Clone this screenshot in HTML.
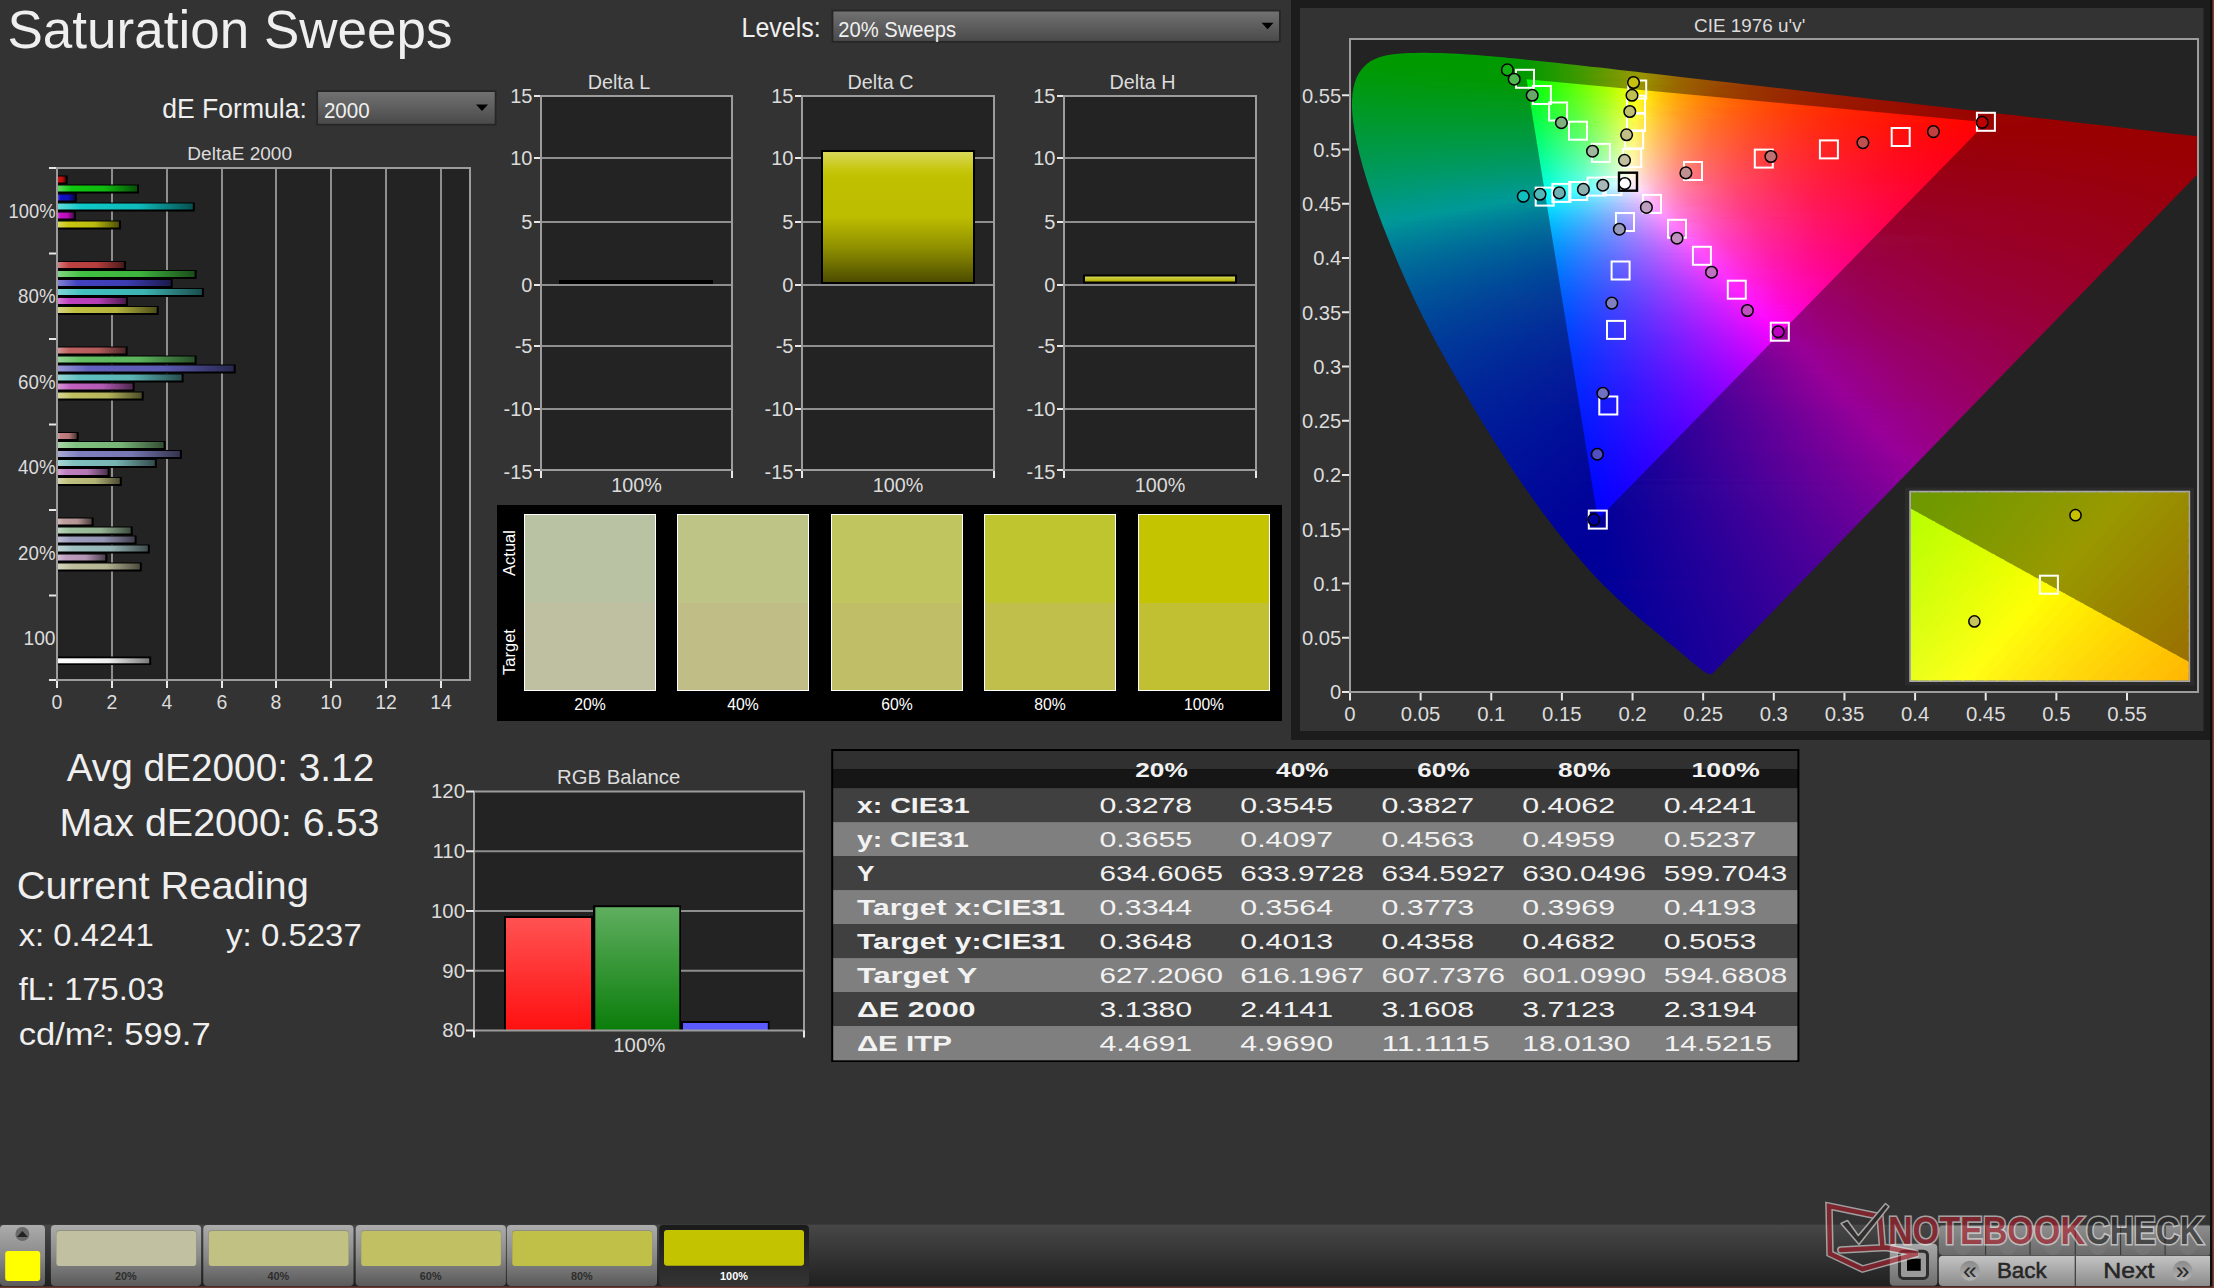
<!DOCTYPE html>
<html><head><meta charset="utf-8"><title>Saturation Sweeps</title>
<style>html,body{margin:0;padding:0;width:2214px;height:1288px;overflow:hidden;background:#333;}svg text{font-family:"Liberation Sans", sans-serif;}</style>
</head><body><svg width="2214" height="1288" viewBox="0 0 2214 1288" style="display:block;font-family:&quot;Liberation Sans&quot;, sans-serif"><defs><linearGradient id="g1" x1="0" y1="0" x2="0" y2="1"><stop offset="0" stop-color="#717171"/><stop offset="1" stop-color="#4a4a4a"/></linearGradient><linearGradient id="g2" x1="0" y1="0" x2="0" y2="1"><stop offset="0" stop-color="#717171"/><stop offset="1" stop-color="#4a4a4a"/></linearGradient><linearGradient id="g3" x1="0" y1="0" x2="1" y2="0"><stop offset="0" stop-color="#db6464"/><stop offset="0.18" stop-color="#c81010"/><stop offset="0.6" stop-color="#ba0f0f"/><stop offset="1" stop-color="#500606"/></linearGradient><linearGradient id="g4" x1="0" y1="0" x2="1" y2="0"><stop offset="0" stop-color="#64db64"/><stop offset="0.18" stop-color="#10c810"/><stop offset="0.6" stop-color="#0fba0f"/><stop offset="1" stop-color="#065006"/></linearGradient><linearGradient id="g5" x1="0" y1="0" x2="1" y2="0"><stop offset="0" stop-color="#6464db"/><stop offset="0.18" stop-color="#1010c8"/><stop offset="0.6" stop-color="#0f0fba"/><stop offset="1" stop-color="#060650"/></linearGradient><linearGradient id="g6" x1="0" y1="0" x2="1" y2="0"><stop offset="0" stop-color="#64dbdb"/><stop offset="0.18" stop-color="#10c8c8"/><stop offset="0.6" stop-color="#0fbaba"/><stop offset="1" stop-color="#065050"/></linearGradient><linearGradient id="g7" x1="0" y1="0" x2="1" y2="0"><stop offset="0" stop-color="#db64db"/><stop offset="0.18" stop-color="#c810c8"/><stop offset="0.6" stop-color="#ba0fba"/><stop offset="1" stop-color="#500650"/></linearGradient><linearGradient id="g8" x1="0" y1="0" x2="1" y2="0"><stop offset="0" stop-color="#dbdb64"/><stop offset="0.18" stop-color="#c8c810"/><stop offset="0.6" stop-color="#baba0f"/><stop offset="1" stop-color="#505006"/></linearGradient><linearGradient id="g9" x1="0" y1="0" x2="1" y2="0"><stop offset="0" stop-color="#d68484"/><stop offset="0.18" stop-color="#c04242"/><stop offset="0.6" stop-color="#b33d3d"/><stop offset="1" stop-color="#4d1a1a"/></linearGradient><linearGradient id="g10" x1="0" y1="0" x2="1" y2="0"><stop offset="0" stop-color="#84d684"/><stop offset="0.18" stop-color="#42c042"/><stop offset="0.6" stop-color="#3db33d"/><stop offset="1" stop-color="#1a4d1a"/></linearGradient><linearGradient id="g11" x1="0" y1="0" x2="1" y2="0"><stop offset="0" stop-color="#8484d6"/><stop offset="0.18" stop-color="#4242c0"/><stop offset="0.6" stop-color="#3d3db3"/><stop offset="1" stop-color="#1a1a4d"/></linearGradient><linearGradient id="g12" x1="0" y1="0" x2="1" y2="0"><stop offset="0" stop-color="#84d6d6"/><stop offset="0.18" stop-color="#42c0c0"/><stop offset="0.6" stop-color="#3db3b3"/><stop offset="1" stop-color="#1a4d4d"/></linearGradient><linearGradient id="g13" x1="0" y1="0" x2="1" y2="0"><stop offset="0" stop-color="#d684d6"/><stop offset="0.18" stop-color="#c042c0"/><stop offset="0.6" stop-color="#b33db3"/><stop offset="1" stop-color="#4d1a4d"/></linearGradient><linearGradient id="g14" x1="0" y1="0" x2="1" y2="0"><stop offset="0" stop-color="#d6d684"/><stop offset="0.18" stop-color="#c0c042"/><stop offset="0.6" stop-color="#b3b33d"/><stop offset="1" stop-color="#4d4d1a"/></linearGradient><linearGradient id="g15" x1="0" y1="0" x2="1" y2="0"><stop offset="0" stop-color="#d69999"/><stop offset="0.18" stop-color="#c06262"/><stop offset="0.6" stop-color="#b35b5b"/><stop offset="1" stop-color="#4d2727"/></linearGradient><linearGradient id="g16" x1="0" y1="0" x2="1" y2="0"><stop offset="0" stop-color="#99d699"/><stop offset="0.18" stop-color="#62c062"/><stop offset="0.6" stop-color="#5bb35b"/><stop offset="1" stop-color="#274d27"/></linearGradient><linearGradient id="g17" x1="0" y1="0" x2="1" y2="0"><stop offset="0" stop-color="#9999d6"/><stop offset="0.18" stop-color="#6262c0"/><stop offset="0.6" stop-color="#5b5bb3"/><stop offset="1" stop-color="#27274d"/></linearGradient><linearGradient id="g18" x1="0" y1="0" x2="1" y2="0"><stop offset="0" stop-color="#99d6d6"/><stop offset="0.18" stop-color="#62c0c0"/><stop offset="0.6" stop-color="#5bb3b3"/><stop offset="1" stop-color="#274d4d"/></linearGradient><linearGradient id="g19" x1="0" y1="0" x2="1" y2="0"><stop offset="0" stop-color="#d699d6"/><stop offset="0.18" stop-color="#c062c0"/><stop offset="0.6" stop-color="#b35bb3"/><stop offset="1" stop-color="#4d274d"/></linearGradient><linearGradient id="g20" x1="0" y1="0" x2="1" y2="0"><stop offset="0" stop-color="#d6d699"/><stop offset="0.18" stop-color="#c0c062"/><stop offset="0.6" stop-color="#b3b35b"/><stop offset="1" stop-color="#4d4d27"/></linearGradient><linearGradient id="g21" x1="0" y1="0" x2="1" y2="0"><stop offset="0" stop-color="#d6acac"/><stop offset="0.18" stop-color="#c08080"/><stop offset="0.6" stop-color="#b37777"/><stop offset="1" stop-color="#4d3333"/></linearGradient><linearGradient id="g22" x1="0" y1="0" x2="1" y2="0"><stop offset="0" stop-color="#acd6ac"/><stop offset="0.18" stop-color="#80c080"/><stop offset="0.6" stop-color="#77b377"/><stop offset="1" stop-color="#334d33"/></linearGradient><linearGradient id="g23" x1="0" y1="0" x2="1" y2="0"><stop offset="0" stop-color="#acacd6"/><stop offset="0.18" stop-color="#8080c0"/><stop offset="0.6" stop-color="#7777b3"/><stop offset="1" stop-color="#33334d"/></linearGradient><linearGradient id="g24" x1="0" y1="0" x2="1" y2="0"><stop offset="0" stop-color="#acd6d6"/><stop offset="0.18" stop-color="#80c0c0"/><stop offset="0.6" stop-color="#77b3b3"/><stop offset="1" stop-color="#334d4d"/></linearGradient><linearGradient id="g25" x1="0" y1="0" x2="1" y2="0"><stop offset="0" stop-color="#d6acd6"/><stop offset="0.18" stop-color="#c080c0"/><stop offset="0.6" stop-color="#b377b3"/><stop offset="1" stop-color="#4d334d"/></linearGradient><linearGradient id="g26" x1="0" y1="0" x2="1" y2="0"><stop offset="0" stop-color="#d6d6ac"/><stop offset="0.18" stop-color="#c0c080"/><stop offset="0.6" stop-color="#b3b377"/><stop offset="1" stop-color="#4d4d33"/></linearGradient><linearGradient id="g27" x1="0" y1="0" x2="1" y2="0"><stop offset="0" stop-color="#d6c0c0"/><stop offset="0.18" stop-color="#c09e9e"/><stop offset="0.6" stop-color="#b39393"/><stop offset="1" stop-color="#4d3f3f"/></linearGradient><linearGradient id="g28" x1="0" y1="0" x2="1" y2="0"><stop offset="0" stop-color="#c0d6c0"/><stop offset="0.18" stop-color="#9ec09e"/><stop offset="0.6" stop-color="#93b393"/><stop offset="1" stop-color="#3f4d3f"/></linearGradient><linearGradient id="g29" x1="0" y1="0" x2="1" y2="0"><stop offset="0" stop-color="#c0c0d6"/><stop offset="0.18" stop-color="#9e9ec0"/><stop offset="0.6" stop-color="#9393b3"/><stop offset="1" stop-color="#3f3f4d"/></linearGradient><linearGradient id="g30" x1="0" y1="0" x2="1" y2="0"><stop offset="0" stop-color="#c0d6d6"/><stop offset="0.18" stop-color="#9ec0c0"/><stop offset="0.6" stop-color="#93b3b3"/><stop offset="1" stop-color="#3f4d4d"/></linearGradient><linearGradient id="g31" x1="0" y1="0" x2="1" y2="0"><stop offset="0" stop-color="#d6c0d6"/><stop offset="0.18" stop-color="#c09ec0"/><stop offset="0.6" stop-color="#b393b3"/><stop offset="1" stop-color="#4d3f4d"/></linearGradient><linearGradient id="g32" x1="0" y1="0" x2="1" y2="0"><stop offset="0" stop-color="#d6d6c0"/><stop offset="0.18" stop-color="#c0c09e"/><stop offset="0.6" stop-color="#b3b393"/><stop offset="1" stop-color="#4d4d3f"/></linearGradient><linearGradient id="g33" x1="0" y1="0" x2="1" y2="0"><stop offset="0" stop-color="#ffffff"/><stop offset="0.55" stop-color="#f0f0f0"/><stop offset="1" stop-color="#7a7a7a"/></linearGradient><linearGradient id="g34" x1="0" y1="0" x2="0" y2="1"><stop offset="0" stop-color="#d8d85a"/><stop offset="0.14" stop-color="#c6c60c"/><stop offset="0.2" stop-color="#c0c000"/><stop offset="0.5" stop-color="#bdbd00"/><stop offset="0.76" stop-color="#8a8a00"/><stop offset="1" stop-color="#4c4c00"/></linearGradient><linearGradient id="g35" x1="0" y1="0" x2="0" y2="1"><stop offset="0" stop-color="#d4d450"/><stop offset="1" stop-color="#b0b000"/></linearGradient><clipPath id="locclip"><path d="M1712.79,673.24L1712.75,673.24L1712.69,673.22L1712.62,673.22L1712.55,673.25L1712.48,673.32L1712.41,673.42L1712.33,673.53L1712.24,673.6L1712.14,673.62L1712.02,673.6L1711.9,673.59L1711.77,673.6L1711.64,673.68L1711.51,673.78L1711.38,673.89L1711.23,673.96L1711.07,673.99L1710.9,673.98L1710.72,673.97L1710.52,673.96L1710.31,673.97L1710.08,673.97L1709.84,673.97L1709.58,673.97L1709.33,674L1709.07,674.04L1708.77,674.05L1708.41,673.98L1707.98,673.82L1707.51,673.6L1706.95,673.31L1706.29,672.93L1705.52,672.45L1704.64,671.88L1703.67,671.23L1702.63,670.49L1701.54,669.68L1700.38,668.8L1699.11,667.81L1697.69,666.68L1696.11,665.42L1694.38,664.03L1692.52,662.52L1690.55,660.89L1688.49,659.14L1686.31,657.27L1684.01,655.29L1681.55,653.2L1678.95,651.04L1676.22,648.77L1673.31,646.37L1670.16,643.77L1666.75,640.97L1663.11,637.99L1659.26,634.84L1655.23,631.51L1651.04,628.06L1646.69,624.47L1642.11,620.63L1637.26,616.46L1632.13,611.98L1626.76,607.23L1621.12,602.11L1615.19,596.51L1609.08,590.62L1602.76,584.41L1596.03,577.5L1588.69,569.49L1580.66,560.33L1572.05,550.2L1562.98,539.09L1553.54,527.01L1543.69,513.92L1533.4,499.83L1522.8,484.81L1512.03,468.92L1500.98,451.98L1489.62,434.02L1478.22,415.44L1466.99,396.61L1455.82,377.4L1444.62,357.69L1433.78,337.89L1423.65,318.42L1414.26,299.16L1405.44,279.96L1397.26,261.22L1389.78,243.35L1383.01,226.32L1376.92,209.96L1371.51,194.47L1366.8,180.06L1362.83,166.83L1359.6,154.64L1356.99,143.41L1354.91,133.03L1353.38,123.6L1352.44,115.13L1352.02,107.42L1352.03,100.29L1352.5,93.75L1353.44,87.88L1354.81,82.59L1356.56,77.78L1358.71,73.47L1361.28,69.69L1364.19,66.39L1367.35,63.5L1370.79,61.08L1374.54,59.13L1378.52,57.55L1382.66,56.21L1386.97,55.17L1391.48,54.45L1396.13,53.94L1400.87,53.52L1405.71,53.19L1410.67,53L1415.7,52.91L1420.72,52.85L1425.72,52.83L1430.73,52.88L1435.78,52.97L1440.89,53.1L1446.05,53.28L1451.25,53.51L1456.53,53.78L1461.92,54.09L1467.43,54.44L1473.03,54.83L1478.74,55.26L1484.59,55.73L1490.55,56.23L1496.62,56.77L1502.84,57.34L1509.21,57.95L1515.74,58.59L1522.41,59.26L1529.25,59.96L1536.28,60.69L1543.5,61.45L1550.9,62.24L1558.49,63.06L1566.29,63.91L1574.27,64.79L1582.45,65.71L1590.84,66.65L1599.46,67.62L1608.31,68.62L1617.39,69.64L1626.68,70.69L1636.21,71.77L1645.96,72.89L1655.93,74.03L1666.14,75.21L1676.57,76.41L1687.24,77.64L1698.15,78.89L1709.27,80.18L1720.61,81.48L1732.18,82.82L1743.97,84.18L1755.95,85.56L1768.1,86.96L1780.44,88.37L1792.97,89.81L1805.63,91.26L1818.35,92.72L1831.19,94.2L1844.17,95.71L1857.13,97.21L1869.96,98.69L1882.61,100.15L1895.16,101.59L1907.61,103.03L1919.99,104.45L1932.36,105.88L1944.71,107.3L1956.86,108.69L1968.68,110.05L1980.15,111.36L1991.35,112.64L2002.24,113.88L2012.8,115.08L2023.04,116.26L2032.97,117.41L2042.57,118.52L2051.78,119.59L2060.61,120.61L2069.08,121.59L2077.19,122.53L2084.97,123.43L2092.39,124.28L2099.47,125.08L2106.23,125.86L2112.74,126.6L2118.98,127.32L2124.93,128.01L2130.64,128.67L2136.17,129.31L2141.54,129.93L2146.72,130.53L2151.7,131.1L2156.48,131.66L2161.07,132.19L2165.47,132.7L2169.67,133.18L2173.65,133.64L2177.43,134.07L2181,134.47L2184.37,134.85L2187.54,135.2L2190.36,135.53L2192.88,135.82L2195.43,136.11L2198.32,136.45L2201.64,136.83L2205.22,137.25L2209.02,137.69L2212.99,138.14L2217.61,138.68L2222.74,139.27L2227.42,139.81L2230.67,140.19Z"/></clipPath><clipPath id="plotclip"><rect x="1350" y="39" width="848" height="653"/></clipPath><clipPath id="triclip"><path d="M1986.71,122.35L1526.59,79.24L1597.84,519.49Z"/></clipPath><linearGradient id="g36" x1="0" y1="0" x2="1" y2="0"><stop offset="0" stop-color="#009900"/><stop offset="1" stop-color="#009900"/></linearGradient><linearGradient id="g37" x1="0" y1="0" x2="1" y2="0"><stop offset="0" stop-color="#009900"/><stop offset="1" stop-color="#009900"/></linearGradient><linearGradient id="g38" x1="0" y1="0" x2="1" y2="0"><stop offset="0" stop-color="#009900"/><stop offset="1" stop-color="#009900"/></linearGradient><linearGradient id="g39" x1="0" y1="0" x2="1" y2="0"><stop offset="0" stop-color="#009900"/><stop offset="1" stop-color="#009900"/></linearGradient><linearGradient id="g40" x1="0" y1="0" x2="1" y2="0"><stop offset="0" stop-color="#009900"/><stop offset="0.89" stop-color="#009900"/><stop offset="1" stop-color="#149900"/></linearGradient><linearGradient id="g41" x1="0" y1="0" x2="1" y2="0"><stop offset="0" stop-color="#009900"/><stop offset="0.81" stop-color="#009900"/><stop offset="1" stop-color="#299900"/></linearGradient><linearGradient id="g42" x1="0" y1="0" x2="1" y2="0"><stop offset="0" stop-color="#009900"/><stop offset="0.74" stop-color="#009900"/><stop offset="1" stop-color="#3f9900"/></linearGradient><linearGradient id="g43" x1="0" y1="0" x2="1" y2="0"><stop offset="0" stop-color="#009902"/><stop offset="0.68" stop-color="#009900"/><stop offset="0.81" stop-color="#1d9900"/><stop offset="1" stop-color="#569900"/></linearGradient><linearGradient id="g44" x1="0" y1="0" x2="1" y2="0"><stop offset="0" stop-color="#009903"/><stop offset="0.64" stop-color="#009900"/><stop offset="0.81" stop-color="#2e9900"/><stop offset="1" stop-color="#709900"/></linearGradient><linearGradient id="g45" x1="0" y1="0" x2="1" y2="0"><stop offset="0" stop-color="#009905"/><stop offset="0.62" stop-color="#029900"/><stop offset="0.83" stop-color="#479900"/><stop offset="1" stop-color="#8c9900"/></linearGradient><linearGradient id="g46" x1="0" y1="0" x2="1" y2="0"><stop offset="0" stop-color="#009906"/><stop offset="0.57" stop-color="#009900"/><stop offset="0.77" stop-color="#419900"/><stop offset="0.96" stop-color="#959900"/><stop offset="1" stop-color="#998900"/></linearGradient><linearGradient id="g47" x1="0" y1="0" x2="1" y2="0"><stop offset="0" stop-color="#009908"/><stop offset="0.55" stop-color="#029900"/><stop offset="0.72" stop-color="#419900"/><stop offset="0.89" stop-color="#909900"/><stop offset="0.91" stop-color="#999700"/><stop offset="1" stop-color="#997200"/></linearGradient><linearGradient id="g48" x1="0" y1="0" x2="1" y2="0"><stop offset="0" stop-color="#009909"/><stop offset="0.51" stop-color="#009900"/><stop offset="0.66" stop-color="#359900"/><stop offset="0.85" stop-color="#929900"/><stop offset="0.87" stop-color="#999400"/><stop offset="1" stop-color="#996100"/></linearGradient><linearGradient id="g49" x1="0" y1="0" x2="1" y2="0"><stop offset="0" stop-color="#00990b"/><stop offset="0.49" stop-color="#009900"/><stop offset="0.64" stop-color="#3a9900"/><stop offset="0.81" stop-color="#929900"/><stop offset="0.83" stop-color="#999300"/><stop offset="0.91" stop-color="#996c00"/><stop offset="1" stop-color="#995200"/></linearGradient><linearGradient id="g50" x1="0" y1="0" x2="1" y2="0"><stop offset="0" stop-color="#00990c"/><stop offset="0.47" stop-color="#009901"/><stop offset="0.62" stop-color="#3e9900"/><stop offset="0.79" stop-color="#999500"/><stop offset="0.87" stop-color="#996c00"/><stop offset="1" stop-color="#994700"/></linearGradient><linearGradient id="g51" x1="0" y1="0" x2="1" y2="0"><stop offset="0" stop-color="#00990e"/><stop offset="0.45" stop-color="#009903"/><stop offset="0.49" stop-color="#0e9902"/><stop offset="0.6" stop-color="#409900"/><stop offset="0.74" stop-color="#989900"/><stop offset="0.85" stop-color="#996500"/><stop offset="1" stop-color="#993d00"/></linearGradient><linearGradient id="g52" x1="0" y1="0" x2="1" y2="0"><stop offset="0" stop-color="#009910"/><stop offset="0.45" stop-color="#049904"/><stop offset="0.57" stop-color="#429900"/><stop offset="0.7" stop-color="#919900"/><stop offset="0.72" stop-color="#999200"/><stop offset="0.77" stop-color="#997a00"/><stop offset="0.83" stop-color="#995f00"/><stop offset="1" stop-color="#993500"/></linearGradient><linearGradient id="g53" x1="0" y1="0" x2="1" y2="0"><stop offset="0" stop-color="#009911"/><stop offset="0.43" stop-color="#029906"/><stop offset="0.55" stop-color="#439902"/><stop offset="0.68" stop-color="#979900"/><stop offset="0.74" stop-color="#997400"/><stop offset="0.81" stop-color="#995a00"/><stop offset="0.89" stop-color="#994200"/><stop offset="1" stop-color="#992d00"/></linearGradient><linearGradient id="g54" x1="0" y1="0" x2="1" y2="0"><stop offset="0" stop-color="#009913"/><stop offset="0.4" stop-color="#009909"/><stop offset="0.53" stop-color="#439904"/><stop offset="0.66" stop-color="#999700"/><stop offset="0.72" stop-color="#997000"/><stop offset="0.79" stop-color="#995600"/><stop offset="0.87" stop-color="#993e00"/><stop offset="1" stop-color="#992700"/></linearGradient><linearGradient id="g55" x1="0" y1="0" x2="1" y2="0"><stop offset="0" stop-color="#009914"/><stop offset="0.38" stop-color="#00990b"/><stop offset="0.49" stop-color="#369907"/><stop offset="0.62" stop-color="#8e9901"/><stop offset="0.64" stop-color="#999300"/><stop offset="0.7" stop-color="#996c00"/><stop offset="0.79" stop-color="#994b00"/><stop offset="0.87" stop-color="#993600"/><stop offset="1" stop-color="#992200"/></linearGradient><linearGradient id="g56" x1="0" y1="0" x2="1" y2="0"><stop offset="0" stop-color="#009916"/><stop offset="0.38" stop-color="#03990d"/><stop offset="0.49" stop-color="#419909"/><stop offset="0.6" stop-color="#8f9904"/><stop offset="0.62" stop-color="#999102"/><stop offset="0.68" stop-color="#996a00"/><stop offset="0.77" stop-color="#994900"/><stop offset="0.87" stop-color="#993000"/><stop offset="1" stop-color="#991d00"/></linearGradient><linearGradient id="g57" x1="0" y1="0" x2="1" y2="0"><stop offset="0" stop-color="#009917"/><stop offset="0.36" stop-color="#00990f"/><stop offset="0.47" stop-color="#3e990b"/><stop offset="0.57" stop-color="#8f9906"/><stop offset="0.6" stop-color="#999105"/><stop offset="0.66" stop-color="#996801"/><stop offset="0.74" stop-color="#994700"/><stop offset="0.85" stop-color="#992e00"/><stop offset="1" stop-color="#991900"/></linearGradient><linearGradient id="g58" x1="0" y1="0" x2="1" y2="0"><stop offset="0" stop-color="#009919"/><stop offset="0.34" stop-color="#009911"/><stop offset="0.36" stop-color="#059911"/><stop offset="0.47" stop-color="#49990d"/><stop offset="0.55" stop-color="#8e9909"/><stop offset="0.57" stop-color="#999108"/><stop offset="0.64" stop-color="#996703"/><stop offset="0.72" stop-color="#994500"/><stop offset="0.85" stop-color="#992800"/><stop offset="1" stop-color="#991500"/></linearGradient><linearGradient id="g59" x1="0" y1="0" x2="1" y2="0"><stop offset="0" stop-color="#00991a"/><stop offset="0.34" stop-color="#009913"/><stop offset="0.45" stop-color="#45990f"/><stop offset="0.53" stop-color="#8b990c"/><stop offset="0.55" stop-color="#99930a"/><stop offset="0.62" stop-color="#996705"/><stop offset="0.72" stop-color="#993e00"/><stop offset="0.85" stop-color="#992300"/><stop offset="1" stop-color="#991100"/></linearGradient><linearGradient id="g60" x1="0" y1="0" x2="1" y2="0"><stop offset="0" stop-color="#00991c"/><stop offset="0.32" stop-color="#009915"/><stop offset="0.34" stop-color="#059915"/><stop offset="0.43" stop-color="#3f9912"/><stop offset="0.53" stop-color="#99960d"/><stop offset="0.6" stop-color="#996707"/><stop offset="0.7" stop-color="#993d01"/><stop offset="0.83" stop-color="#992200"/><stop offset="1" stop-color="#990e00"/></linearGradient><linearGradient id="g61" x1="0" y1="0" x2="1" y2="0"><stop offset="0" stop-color="#00991e"/><stop offset="0.32" stop-color="#009917"/><stop offset="0.43" stop-color="#4a9914"/><stop offset="0.51" stop-color="#989911"/><stop offset="0.57" stop-color="#996809"/><stop offset="0.68" stop-color="#993c03"/><stop offset="0.81" stop-color="#992100"/><stop offset="1" stop-color="#990b00"/></linearGradient><linearGradient id="g62" x1="0" y1="0" x2="1" y2="0"><stop offset="0" stop-color="#00991f"/><stop offset="0.32" stop-color="#049919"/><stop offset="0.4" stop-color="#439917"/><stop offset="0.49" stop-color="#929914"/><stop offset="0.51" stop-color="#998b11"/><stop offset="0.57" stop-color="#995e0a"/><stop offset="0.68" stop-color="#993603"/><stop offset="0.81" stop-color="#991d00"/><stop offset="1" stop-color="#990900"/></linearGradient><linearGradient id="g63" x1="0" y1="0" x2="1" y2="0"><stop offset="0" stop-color="#009921"/><stop offset="0.3" stop-color="#00991c"/><stop offset="0.36" stop-color="#2a991a"/><stop offset="0.47" stop-color="#8a9917"/><stop offset="0.49" stop-color="#999115"/><stop offset="0.55" stop-color="#99600c"/><stop offset="0.66" stop-color="#993604"/><stop offset="0.81" stop-color="#991900"/><stop offset="1" stop-color="#990600"/></linearGradient><linearGradient id="g64" x1="0" y1="0" x2="1" y2="0"><stop offset="0" stop-color="#009922"/><stop offset="0.3" stop-color="#01991e"/><stop offset="0.38" stop-color="#44991c"/><stop offset="0.47" stop-color="#999819"/><stop offset="0.53" stop-color="#99630f"/><stop offset="0.57" stop-color="#994d0a"/><stop offset="0.64" stop-color="#993706"/><stop offset="0.79" stop-color="#991900"/><stop offset="1" stop-color="#990400"/></linearGradient><linearGradient id="g65" x1="0" y1="0" x2="1" y2="0"><stop offset="0" stop-color="#009924"/><stop offset="0.28" stop-color="#009920"/><stop offset="0.3" stop-color="#079920"/><stop offset="0.34" stop-color="#28991f"/><stop offset="0.4" stop-color="#62991d"/><stop offset="0.45" stop-color="#90991c"/><stop offset="0.47" stop-color="#998a19"/><stop offset="0.53" stop-color="#995a0f"/><stop offset="0.64" stop-color="#993106"/><stop offset="0.79" stop-color="#991500"/><stop offset="1" stop-color="#990200"/></linearGradient><linearGradient id="g66" x1="0" y1="0" x2="1" y2="0"><stop offset="0" stop-color="#009926"/><stop offset="0.28" stop-color="#009922"/><stop offset="0.34" stop-color="#309921"/><stop offset="0.43" stop-color="#86991f"/><stop offset="0.45" stop-color="#99931d"/><stop offset="0.47" stop-color="#997d19"/><stop offset="0.51" stop-color="#995e12"/><stop offset="0.55" stop-color="#99480d"/><stop offset="0.62" stop-color="#993208"/><stop offset="0.77" stop-color="#991501"/><stop offset="1" stop-color="#990000"/></linearGradient><linearGradient id="g67" x1="0" y1="0" x2="1" y2="0"><stop offset="0" stop-color="#009927"/><stop offset="0.28" stop-color="#029924"/><stop offset="0.36" stop-color="#4c9923"/><stop offset="0.43" stop-color="#949922"/><stop offset="0.45" stop-color="#99861d"/><stop offset="0.49" stop-color="#996215"/><stop offset="0.53" stop-color="#994b0f"/><stop offset="0.64" stop-color="#992807"/><stop offset="0.81" stop-color="#990d00"/><stop offset="1" stop-color="#990000"/></linearGradient><linearGradient id="g68" x1="0" y1="0" x2="1" y2="0"><stop offset="0" stop-color="#009929"/><stop offset="0.26" stop-color="#009927"/><stop offset="0.28" stop-color="#079927"/><stop offset="0.34" stop-color="#409926"/><stop offset="0.4" stop-color="#879925"/><stop offset="0.43" stop-color="#999022"/><stop offset="0.47" stop-color="#996818"/><stop offset="0.51" stop-color="#994e12"/><stop offset="0.62" stop-color="#992908"/><stop offset="0.79" stop-color="#990d01"/><stop offset="1" stop-color="#990000"/></linearGradient><linearGradient id="g69" x1="0" y1="0" x2="1" y2="0"><stop offset="0" stop-color="#00992b"/><stop offset="0.26" stop-color="#009929"/><stop offset="0.28" stop-color="#0d9929"/><stop offset="0.32" stop-color="#339929"/><stop offset="0.4" stop-color="#949928"/><stop offset="0.43" stop-color="#998422"/><stop offset="0.47" stop-color="#996018"/><stop offset="0.51" stop-color="#994812"/><stop offset="0.62" stop-color="#992508"/><stop offset="0.81" stop-color="#990901"/><stop offset="1" stop-color="#990000"/></linearGradient><linearGradient id="g70" x1="0" y1="0" x2="1" y2="0"><stop offset="0" stop-color="#00992c"/><stop offset="0.26" stop-color="#00992b"/><stop offset="0.32" stop-color="#3b992b"/><stop offset="0.38" stop-color="#85992b"/><stop offset="0.4" stop-color="#999128"/><stop offset="0.45" stop-color="#99671c"/><stop offset="0.49" stop-color="#994c15"/><stop offset="0.6" stop-color="#99260a"/><stop offset="0.81" stop-color="#990701"/><stop offset="1" stop-color="#990000"/></linearGradient><linearGradient id="g71" x1="0" y1="0" x2="1" y2="0"><stop offset="0" stop-color="#00992e"/><stop offset="0.23" stop-color="#00992e"/><stop offset="0.26" stop-color="#05992e"/><stop offset="0.32" stop-color="#43992e"/><stop offset="0.38" stop-color="#92992e"/><stop offset="0.4" stop-color="#998428"/><stop offset="0.45" stop-color="#995e1c"/><stop offset="0.49" stop-color="#994615"/><stop offset="0.6" stop-color="#99230a"/><stop offset="0.81" stop-color="#990501"/><stop offset="1" stop-color="#990000"/></linearGradient><linearGradient id="g72" x1="0" y1="0" x2="1" y2="0"><stop offset="0" stop-color="#009930"/><stop offset="0.23" stop-color="#009930"/><stop offset="0.26" stop-color="#0a9930"/><stop offset="0.3" stop-color="#349930"/><stop offset="0.36" stop-color="#819931"/><stop offset="0.38" stop-color="#99932f"/><stop offset="0.43" stop-color="#996621"/><stop offset="0.47" stop-color="#994a18"/><stop offset="0.57" stop-color="#99240c"/><stop offset="0.68" stop-color="#991106"/><stop offset="0.81" stop-color="#990301"/><stop offset="1" stop-color="#990000"/></linearGradient><linearGradient id="g73" x1="0" y1="0" x2="1" y2="0"><stop offset="0" stop-color="#009931"/><stop offset="0.23" stop-color="#009933"/><stop offset="0.26" stop-color="#0f9933"/><stop offset="0.3" stop-color="#3c9933"/><stop offset="0.36" stop-color="#8d9934"/><stop offset="0.38" stop-color="#99872e"/><stop offset="0.43" stop-color="#995e20"/><stop offset="0.47" stop-color="#994418"/><stop offset="0.57" stop-color="#99210c"/><stop offset="0.68" stop-color="#990e06"/><stop offset="0.81" stop-color="#990102"/><stop offset="1" stop-color="#990000"/></linearGradient><linearGradient id="g74" x1="0" y1="0" x2="1" y2="0"><stop offset="0" stop-color="#009933"/><stop offset="0.23" stop-color="#009935"/><stop offset="0.3" stop-color="#449936"/><stop offset="0.36" stop-color="#999837"/><stop offset="0.4" stop-color="#996726"/><stop offset="0.45" stop-color="#994a1b"/><stop offset="0.55" stop-color="#99220e"/><stop offset="0.66" stop-color="#990f07"/><stop offset="0.79" stop-color="#990102"/><stop offset="1" stop-color="#990000"/></linearGradient><linearGradient id="g75" x1="0" y1="0" x2="1" y2="0"><stop offset="0" stop-color="#009935"/><stop offset="0.21" stop-color="#009937"/><stop offset="0.23" stop-color="#059938"/><stop offset="0.3" stop-color="#4c9939"/><stop offset="0.34" stop-color="#86993a"/><stop offset="0.36" stop-color="#998c35"/><stop offset="0.4" stop-color="#995f25"/><stop offset="0.45" stop-color="#99441b"/><stop offset="0.55" stop-color="#991f0e"/><stop offset="0.77" stop-color="#990103"/><stop offset="1" stop-color="#990000"/></linearGradient><linearGradient id="g76" x1="0" y1="0" x2="1" y2="0"><stop offset="0" stop-color="#009936"/><stop offset="0.21" stop-color="#00993a"/><stop offset="0.23" stop-color="#0a993a"/><stop offset="0.26" stop-color="#21993b"/><stop offset="0.3" stop-color="#54993c"/><stop offset="0.34" stop-color="#92993d"/><stop offset="0.36" stop-color="#998134"/><stop offset="0.4" stop-color="#995825"/><stop offset="0.45" stop-color="#993f1b"/><stop offset="0.51" stop-color="#992712"/><stop offset="0.57" stop-color="#99180c"/><stop offset="0.77" stop-color="#990003"/><stop offset="1" stop-color="#990000"/></linearGradient><linearGradient id="g77" x1="0" y1="0" x2="1" y2="0"><stop offset="0" stop-color="#009938"/><stop offset="0.21" stop-color="#00993c"/><stop offset="0.23" stop-color="#0f993d"/><stop offset="0.26" stop-color="#27993d"/><stop offset="0.32" stop-color="#7c9940"/><stop offset="0.34" stop-color="#99943e"/><stop offset="0.36" stop-color="#997733"/><stop offset="0.4" stop-color="#995124"/><stop offset="0.47" stop-color="#993118"/><stop offset="0.53" stop-color="#991e10"/><stop offset="0.74" stop-color="#990004"/><stop offset="1" stop-color="#990000"/></linearGradient><linearGradient id="g78" x1="0" y1="0" x2="1" y2="0"><stop offset="0" stop-color="#00993a"/><stop offset="0.21" stop-color="#00993f"/><stop offset="0.26" stop-color="#2a9940"/><stop offset="0.32" stop-color="#829943"/><stop offset="0.34" stop-color="#998d3f"/><stop offset="0.38" stop-color="#995d2b"/><stop offset="0.43" stop-color="#994120"/><stop offset="0.49" stop-color="#992815"/><stop offset="0.55" stop-color="#99180f"/><stop offset="0.72" stop-color="#990105"/><stop offset="1" stop-color="#990000"/></linearGradient><linearGradient id="g79" x1="0" y1="0" x2="1" y2="0"><stop offset="0" stop-color="#00993c"/><stop offset="0.21" stop-color="#009941"/><stop offset="0.26" stop-color="#2b9943"/><stop offset="0.32" stop-color="#839946"/><stop offset="0.34" stop-color="#998c42"/><stop offset="0.38" stop-color="#995d2d"/><stop offset="0.43" stop-color="#994121"/><stop offset="0.49" stop-color="#992716"/><stop offset="0.55" stop-color="#991710"/><stop offset="0.72" stop-color="#990106"/><stop offset="1" stop-color="#990000"/></linearGradient><linearGradient id="g80" x1="0" y1="0" x2="1" y2="0"><stop offset="0" stop-color="#00993e"/><stop offset="0.21" stop-color="#009944"/><stop offset="0.26" stop-color="#2b9946"/><stop offset="0.32" stop-color="#84994a"/><stop offset="0.34" stop-color="#998b44"/><stop offset="0.38" stop-color="#995c2f"/><stop offset="0.43" stop-color="#994023"/><stop offset="0.49" stop-color="#992718"/><stop offset="0.55" stop-color="#991711"/><stop offset="0.72" stop-color="#990107"/><stop offset="1" stop-color="#990000"/></linearGradient><linearGradient id="g81" x1="0" y1="0" x2="1" y2="0"><stop offset="0" stop-color="#00993f"/><stop offset="0.21" stop-color="#009947"/><stop offset="0.26" stop-color="#2b9949"/><stop offset="0.32" stop-color="#85994d"/><stop offset="0.34" stop-color="#998a47"/><stop offset="0.38" stop-color="#995c31"/><stop offset="0.43" stop-color="#994025"/><stop offset="0.49" stop-color="#992719"/><stop offset="0.55" stop-color="#991712"/><stop offset="0.72" stop-color="#990007"/><stop offset="1" stop-color="#990000"/></linearGradient><linearGradient id="g82" x1="0" y1="0" x2="1" y2="0"><stop offset="0" stop-color="#009941"/><stop offset="0.21" stop-color="#009949"/><stop offset="0.26" stop-color="#2b994c"/><stop offset="0.32" stop-color="#869950"/><stop offset="0.34" stop-color="#99894a"/><stop offset="0.38" stop-color="#995b33"/><stop offset="0.43" stop-color="#993f26"/><stop offset="0.49" stop-color="#99261a"/><stop offset="0.55" stop-color="#991713"/><stop offset="0.72" stop-color="#990008"/><stop offset="1" stop-color="#990000"/></linearGradient><linearGradient id="g83" x1="0" y1="0" x2="1" y2="0"><stop offset="0" stop-color="#009943"/><stop offset="0.21" stop-color="#00994c"/><stop offset="0.26" stop-color="#2c994f"/><stop offset="0.32" stop-color="#869954"/><stop offset="0.34" stop-color="#99894c"/><stop offset="0.38" stop-color="#995a35"/><stop offset="0.43" stop-color="#993f28"/><stop offset="0.49" stop-color="#99261b"/><stop offset="0.55" stop-color="#991614"/><stop offset="0.72" stop-color="#990009"/><stop offset="1" stop-color="#990001"/></linearGradient><linearGradient id="g84" x1="0" y1="0" x2="1" y2="0"><stop offset="0" stop-color="#009945"/><stop offset="0.21" stop-color="#00994e"/><stop offset="0.26" stop-color="#2c9951"/><stop offset="0.32" stop-color="#879957"/><stop offset="0.34" stop-color="#99884f"/><stop offset="0.38" stop-color="#995a37"/><stop offset="0.43" stop-color="#993e29"/><stop offset="0.49" stop-color="#99251d"/><stop offset="0.55" stop-color="#991615"/><stop offset="0.72" stop-color="#990009"/><stop offset="1" stop-color="#990001"/></linearGradient><linearGradient id="g85" x1="0" y1="0" x2="1" y2="0"><stop offset="0" stop-color="#009947"/><stop offset="0.21" stop-color="#009951"/><stop offset="0.26" stop-color="#2c9954"/><stop offset="0.32" stop-color="#88995b"/><stop offset="0.34" stop-color="#998752"/><stop offset="0.38" stop-color="#995939"/><stop offset="0.43" stop-color="#993e2b"/><stop offset="0.49" stop-color="#99251e"/><stop offset="0.55" stop-color="#991616"/><stop offset="0.72" stop-color="#99000a"/><stop offset="1" stop-color="#990002"/></linearGradient><linearGradient id="g86" x1="0" y1="0" x2="1" y2="0"><stop offset="0" stop-color="#009949"/><stop offset="0.21" stop-color="#009954"/><stop offset="0.26" stop-color="#2c9957"/><stop offset="0.32" stop-color="#89995e"/><stop offset="0.34" stop-color="#998655"/><stop offset="0.38" stop-color="#99583c"/><stop offset="0.43" stop-color="#993d2d"/><stop offset="0.49" stop-color="#99251f"/><stop offset="0.55" stop-color="#991517"/><stop offset="0.72" stop-color="#99000b"/><stop offset="1" stop-color="#990002"/></linearGradient><linearGradient id="g87" x1="0" y1="0" x2="1" y2="0"><stop offset="0" stop-color="#00994b"/><stop offset="0.21" stop-color="#009957"/><stop offset="0.26" stop-color="#2d995a"/><stop offset="0.32" stop-color="#8a9962"/><stop offset="0.34" stop-color="#998557"/><stop offset="0.38" stop-color="#99573e"/><stop offset="0.43" stop-color="#993d2e"/><stop offset="0.49" stop-color="#992420"/><stop offset="0.55" stop-color="#991518"/><stop offset="0.7" stop-color="#99010c"/><stop offset="1" stop-color="#990003"/></linearGradient><linearGradient id="g88" x1="0" y1="0" x2="1" y2="0"><stop offset="0" stop-color="#00994d"/><stop offset="0.21" stop-color="#009959"/><stop offset="0.26" stop-color="#2d995e"/><stop offset="0.32" stop-color="#8b9965"/><stop offset="0.34" stop-color="#99845a"/><stop offset="0.38" stop-color="#995740"/><stop offset="0.43" stop-color="#993c30"/><stop offset="0.49" stop-color="#992422"/><stop offset="0.55" stop-color="#991519"/><stop offset="0.7" stop-color="#99010d"/><stop offset="1" stop-color="#990003"/></linearGradient><linearGradient id="g89" x1="0" y1="0" x2="1" y2="0"><stop offset="0" stop-color="#00994e"/><stop offset="0.21" stop-color="#00995c"/><stop offset="0.26" stop-color="#2d9961"/><stop offset="0.32" stop-color="#8c9969"/><stop offset="0.34" stop-color="#99835d"/><stop offset="0.38" stop-color="#995642"/><stop offset="0.43" stop-color="#993c31"/><stop offset="0.49" stop-color="#992323"/><stop offset="0.55" stop-color="#99141a"/><stop offset="0.7" stop-color="#99000e"/><stop offset="1" stop-color="#990003"/></linearGradient><linearGradient id="g90" x1="0" y1="0" x2="1" y2="0"><stop offset="0" stop-color="#009950"/><stop offset="0.21" stop-color="#00995f"/><stop offset="0.26" stop-color="#2e9964"/><stop offset="0.32" stop-color="#8d996d"/><stop offset="0.34" stop-color="#99825f"/><stop offset="0.38" stop-color="#995544"/><stop offset="0.43" stop-color="#993b33"/><stop offset="0.49" stop-color="#992324"/><stop offset="0.55" stop-color="#99141b"/><stop offset="0.7" stop-color="#99000e"/><stop offset="1" stop-color="#990004"/></linearGradient><linearGradient id="g91" x1="0" y1="0" x2="1" y2="0"><stop offset="0" stop-color="#009952"/><stop offset="0.21" stop-color="#009962"/><stop offset="0.26" stop-color="#2e9967"/><stop offset="0.32" stop-color="#8e9971"/><stop offset="0.34" stop-color="#998162"/><stop offset="0.38" stop-color="#995546"/><stop offset="0.43" stop-color="#993a35"/><stop offset="0.49" stop-color="#992225"/><stop offset="0.55" stop-color="#99141c"/><stop offset="0.7" stop-color="#99000f"/><stop offset="1" stop-color="#990004"/></linearGradient><linearGradient id="g92" x1="0" y1="0" x2="1" y2="0"><stop offset="0" stop-color="#009954"/><stop offset="0.21" stop-color="#009965"/><stop offset="0.26" stop-color="#2f996a"/><stop offset="0.32" stop-color="#8f9974"/><stop offset="0.34" stop-color="#998065"/><stop offset="0.38" stop-color="#995448"/><stop offset="0.43" stop-color="#993a36"/><stop offset="0.49" stop-color="#992226"/><stop offset="0.55" stop-color="#99131d"/><stop offset="0.7" stop-color="#990010"/><stop offset="1" stop-color="#990005"/></linearGradient><linearGradient id="g93" x1="0" y1="0" x2="1" y2="0"><stop offset="0" stop-color="#009956"/><stop offset="0.21" stop-color="#009968"/><stop offset="0.26" stop-color="#2f996e"/><stop offset="0.32" stop-color="#909978"/><stop offset="0.34" stop-color="#997f67"/><stop offset="0.38" stop-color="#99534a"/><stop offset="0.43" stop-color="#993938"/><stop offset="0.49" stop-color="#992228"/><stop offset="0.55" stop-color="#99131e"/><stop offset="0.7" stop-color="#990010"/><stop offset="1" stop-color="#990005"/></linearGradient><linearGradient id="g94" x1="0" y1="0" x2="1" y2="0"><stop offset="0" stop-color="#009958"/><stop offset="0.21" stop-color="#00996b"/><stop offset="0.26" stop-color="#2f9971"/><stop offset="0.32" stop-color="#92997c"/><stop offset="0.34" stop-color="#997e6a"/><stop offset="0.38" stop-color="#99524c"/><stop offset="0.43" stop-color="#993939"/><stop offset="0.49" stop-color="#992129"/><stop offset="0.55" stop-color="#99131f"/><stop offset="0.7" stop-color="#990011"/><stop offset="1" stop-color="#990006"/></linearGradient><linearGradient id="g95" x1="0" y1="0" x2="1" y2="0"><stop offset="0" stop-color="#00995a"/><stop offset="0.21" stop-color="#00996e"/><stop offset="0.26" stop-color="#309974"/><stop offset="0.32" stop-color="#939980"/><stop offset="0.34" stop-color="#997d6d"/><stop offset="0.38" stop-color="#99524e"/><stop offset="0.43" stop-color="#99383b"/><stop offset="0.49" stop-color="#99212a"/><stop offset="0.55" stop-color="#991220"/><stop offset="0.7" stop-color="#990012"/><stop offset="1" stop-color="#990006"/></linearGradient><linearGradient id="g96" x1="0" y1="0" x2="1" y2="0"><stop offset="0" stop-color="#00995c"/><stop offset="0.21" stop-color="#009971"/><stop offset="0.26" stop-color="#309978"/><stop offset="0.32" stop-color="#949984"/><stop offset="0.34" stop-color="#997c6f"/><stop offset="0.38" stop-color="#99514f"/><stop offset="0.43" stop-color="#99383d"/><stop offset="0.49" stop-color="#99202b"/><stop offset="0.55" stop-color="#991221"/><stop offset="0.68" stop-color="#990114"/><stop offset="1" stop-color="#990006"/></linearGradient><linearGradient id="g97" x1="0" y1="0" x2="1" y2="0"><stop offset="0" stop-color="#00995f"/><stop offset="0.21" stop-color="#009974"/><stop offset="0.26" stop-color="#31997b"/><stop offset="0.32" stop-color="#959989"/><stop offset="0.34" stop-color="#997a72"/><stop offset="0.38" stop-color="#995051"/><stop offset="0.43" stop-color="#99373e"/><stop offset="0.49" stop-color="#99202d"/><stop offset="0.55" stop-color="#991122"/><stop offset="0.68" stop-color="#990115"/><stop offset="1" stop-color="#990007"/></linearGradient><linearGradient id="g98" x1="0" y1="0" x2="1" y2="0"><stop offset="0" stop-color="#009961"/><stop offset="0.21" stop-color="#009977"/><stop offset="0.26" stop-color="#31997f"/><stop offset="0.32" stop-color="#97998d"/><stop offset="0.34" stop-color="#997974"/><stop offset="0.38" stop-color="#994f53"/><stop offset="0.45" stop-color="#992d39"/><stop offset="0.51" stop-color="#991a2a"/><stop offset="0.68" stop-color="#990016"/><stop offset="1" stop-color="#990007"/></linearGradient><linearGradient id="g99" x1="0" y1="0" x2="1" y2="0"><stop offset="0" stop-color="#009963"/><stop offset="0.21" stop-color="#00997b"/><stop offset="0.26" stop-color="#329982"/><stop offset="0.32" stop-color="#989991"/><stop offset="0.34" stop-color="#997877"/><stop offset="0.38" stop-color="#994f55"/><stop offset="0.45" stop-color="#992d3a"/><stop offset="0.51" stop-color="#991a2b"/><stop offset="0.68" stop-color="#990016"/><stop offset="1" stop-color="#990008"/></linearGradient><linearGradient id="g100" x1="0" y1="0" x2="1" y2="0"><stop offset="0" stop-color="#009965"/><stop offset="0.21" stop-color="#00997e"/><stop offset="0.26" stop-color="#329986"/><stop offset="0.32" stop-color="#989995"/><stop offset="0.34" stop-color="#99787a"/><stop offset="0.38" stop-color="#994f58"/><stop offset="0.45" stop-color="#992d3c"/><stop offset="0.51" stop-color="#99192c"/><stop offset="0.68" stop-color="#990017"/><stop offset="1" stop-color="#990008"/></linearGradient><linearGradient id="g101" x1="0" y1="0" x2="1" y2="0"><stop offset="0" stop-color="#009967"/><stop offset="0.21" stop-color="#009981"/><stop offset="0.26" stop-color="#319989"/><stop offset="0.32" stop-color="#979999"/><stop offset="0.34" stop-color="#99787e"/><stop offset="0.38" stop-color="#994e5a"/><stop offset="0.45" stop-color="#992d3e"/><stop offset="0.51" stop-color="#99192e"/><stop offset="0.68" stop-color="#990018"/><stop offset="1" stop-color="#990009"/></linearGradient><linearGradient id="g102" x1="0" y1="0" x2="1" y2="0"><stop offset="0" stop-color="#009969"/><stop offset="0.21" stop-color="#009984"/><stop offset="0.26" stop-color="#31998d"/><stop offset="0.32" stop-color="#939499"/><stop offset="0.34" stop-color="#997881"/><stop offset="0.38" stop-color="#994e5d"/><stop offset="0.43" stop-color="#993547"/><stop offset="0.49" stop-color="#991f34"/><stop offset="0.55" stop-color="#991027"/><stop offset="0.68" stop-color="#990019"/><stop offset="1" stop-color="#990009"/></linearGradient><linearGradient id="g103" x1="0" y1="0" x2="1" y2="0"><stop offset="0" stop-color="#00996b"/><stop offset="0.21" stop-color="#009988"/><stop offset="0.26" stop-color="#319990"/><stop offset="0.32" stop-color="#8f9199"/><stop offset="0.34" stop-color="#997885"/><stop offset="0.38" stop-color="#994e60"/><stop offset="0.43" stop-color="#993549"/><stop offset="0.49" stop-color="#991e35"/><stop offset="0.55" stop-color="#991029"/><stop offset="0.68" stop-color="#99001a"/><stop offset="1" stop-color="#99000a"/></linearGradient><linearGradient id="g104" x1="0" y1="0" x2="1" y2="0"><stop offset="0" stop-color="#00996e"/><stop offset="0.21" stop-color="#00998b"/><stop offset="0.26" stop-color="#319994"/><stop offset="0.32" stop-color="#8c8d99"/><stop offset="0.34" stop-color="#997888"/><stop offset="0.38" stop-color="#994e62"/><stop offset="0.43" stop-color="#99354b"/><stop offset="0.49" stop-color="#991e37"/><stop offset="0.55" stop-color="#99102a"/><stop offset="0.68" stop-color="#99001b"/><stop offset="1" stop-color="#99000a"/></linearGradient><linearGradient id="g105" x1="0" y1="0" x2="1" y2="0"><stop offset="0" stop-color="#009970"/><stop offset="0.21" stop-color="#00998e"/><stop offset="0.23" stop-color="#159993"/><stop offset="0.32" stop-color="#888999"/><stop offset="0.34" stop-color="#99788c"/><stop offset="0.38" stop-color="#994e65"/><stop offset="0.43" stop-color="#99354d"/><stop offset="0.49" stop-color="#991e38"/><stop offset="0.55" stop-color="#99102b"/><stop offset="0.68" stop-color="#99001b"/><stop offset="1" stop-color="#99000b"/></linearGradient><linearGradient id="g106" x1="0" y1="0" x2="1" y2="0"><stop offset="0" stop-color="#009972"/><stop offset="0.21" stop-color="#009992"/><stop offset="0.23" stop-color="#149996"/><stop offset="0.32" stop-color="#858699"/><stop offset="0.34" stop-color="#997890"/><stop offset="0.38" stop-color="#994e67"/><stop offset="0.43" stop-color="#993550"/><stop offset="0.49" stop-color="#991e3a"/><stop offset="0.55" stop-color="#99102c"/><stop offset="0.68" stop-color="#99001c"/><stop offset="1" stop-color="#99000b"/></linearGradient><linearGradient id="g107" x1="0" y1="0" x2="1" y2="0"><stop offset="0" stop-color="#009974"/><stop offset="0.21" stop-color="#009995"/><stop offset="0.23" stop-color="#149899"/><stop offset="0.32" stop-color="#818299"/><stop offset="0.34" stop-color="#997893"/><stop offset="0.38" stop-color="#994e6a"/><stop offset="0.43" stop-color="#993552"/><stop offset="0.49" stop-color="#991e3b"/><stop offset="0.55" stop-color="#99102d"/><stop offset="0.68" stop-color="#99001d"/><stop offset="1" stop-color="#99000c"/></linearGradient><linearGradient id="g108" x1="0" y1="0" x2="1" y2="0"><stop offset="0" stop-color="#009977"/><stop offset="0.21" stop-color="#009998"/><stop offset="0.23" stop-color="#139599"/><stop offset="0.34" stop-color="#997897"/><stop offset="0.38" stop-color="#994d6d"/><stop offset="0.43" stop-color="#993554"/><stop offset="0.49" stop-color="#991e3d"/><stop offset="0.55" stop-color="#99102f"/><stop offset="0.68" stop-color="#99001e"/><stop offset="1" stop-color="#99000c"/></linearGradient><linearGradient id="g109" x1="0" y1="0" x2="1" y2="0"><stop offset="0" stop-color="#009979"/><stop offset="0.21" stop-color="#009699"/><stop offset="0.26" stop-color="#2b8c99"/><stop offset="0.34" stop-color="#977699"/><stop offset="0.38" stop-color="#994d6f"/><stop offset="0.43" stop-color="#993456"/><stop offset="0.49" stop-color="#991e3e"/><stop offset="0.55" stop-color="#991030"/><stop offset="0.68" stop-color="#99001f"/><stop offset="1" stop-color="#99000d"/></linearGradient><linearGradient id="g110" x1="0" y1="0" x2="1" y2="0"><stop offset="0" stop-color="#00997b"/><stop offset="0.17" stop-color="#009996"/><stop offset="0.21" stop-color="#009399"/><stop offset="0.26" stop-color="#2a8999"/><stop offset="0.34" stop-color="#947399"/><stop offset="0.36" stop-color="#995f85"/><stop offset="0.4" stop-color="#993f63"/><stop offset="0.45" stop-color="#992b4e"/><stop offset="0.57" stop-color="#990c2e"/><stop offset="0.68" stop-color="#990020"/><stop offset="1" stop-color="#99000e"/></linearGradient><linearGradient id="g111" x1="0" y1="0" x2="1" y2="0"><stop offset="0" stop-color="#00997e"/><stop offset="0.17" stop-color="#009999"/><stop offset="0.21" stop-color="#009099"/><stop offset="0.23" stop-color="#118b99"/><stop offset="0.34" stop-color="#907099"/><stop offset="0.36" stop-color="#995f88"/><stop offset="0.4" stop-color="#993f66"/><stop offset="0.45" stop-color="#992b50"/><stop offset="0.57" stop-color="#990c2f"/><stop offset="0.68" stop-color="#990021"/><stop offset="1" stop-color="#99000e"/></linearGradient><linearGradient id="g112" x1="0" y1="0" x2="1" y2="0"><stop offset="0" stop-color="#009980"/><stop offset="0.15" stop-color="#009998"/><stop offset="0.21" stop-color="#008c99"/><stop offset="0.23" stop-color="#118899"/><stop offset="0.34" stop-color="#8d6e99"/><stop offset="0.36" stop-color="#995f8b"/><stop offset="0.4" stop-color="#993f68"/><stop offset="0.45" stop-color="#992b52"/><stop offset="0.57" stop-color="#990c30"/><stop offset="0.68" stop-color="#990022"/><stop offset="1" stop-color="#99000f"/></linearGradient><linearGradient id="g113" x1="0" y1="0" x2="1" y2="0"><stop offset="0" stop-color="#009983"/><stop offset="0.13" stop-color="#009997"/><stop offset="0.21" stop-color="#008999"/><stop offset="0.23" stop-color="#108599"/><stop offset="0.34" stop-color="#8a6b99"/><stop offset="0.36" stop-color="#995f8f"/><stop offset="0.4" stop-color="#993f6b"/><stop offset="0.45" stop-color="#992b54"/><stop offset="0.57" stop-color="#990c31"/><stop offset="0.68" stop-color="#990023"/><stop offset="1" stop-color="#99000f"/></linearGradient><linearGradient id="g114" x1="0" y1="0" x2="1" y2="0"><stop offset="0" stop-color="#009985"/><stop offset="0.13" stop-color="#009899"/><stop offset="0.21" stop-color="#008799"/><stop offset="0.23" stop-color="#0f8299"/><stop offset="0.34" stop-color="#876899"/><stop offset="0.36" stop-color="#995e92"/><stop offset="0.4" stop-color="#993e6d"/><stop offset="0.45" stop-color="#992b56"/><stop offset="0.55" stop-color="#990f37"/><stop offset="0.66" stop-color="#990126"/><stop offset="1" stop-color="#990010"/></linearGradient><linearGradient id="g115" x1="0" y1="0" x2="1" y2="0"><stop offset="0" stop-color="#009988"/><stop offset="0.11" stop-color="#009999"/><stop offset="0.21" stop-color="#008499"/><stop offset="0.23" stop-color="#0f7f99"/><stop offset="0.36" stop-color="#995e95"/><stop offset="0.4" stop-color="#993e70"/><stop offset="0.45" stop-color="#992a58"/><stop offset="0.55" stop-color="#990f38"/><stop offset="0.66" stop-color="#990127"/><stop offset="1" stop-color="#990010"/></linearGradient><linearGradient id="g116" x1="0" y1="0" x2="1" y2="0"><stop offset="0" stop-color="#00998a"/><stop offset="0.09" stop-color="#009998"/><stop offset="0.21" stop-color="#008199"/><stop offset="0.26" stop-color="#247899"/><stop offset="0.36" stop-color="#995e98"/><stop offset="0.4" stop-color="#993e72"/><stop offset="0.45" stop-color="#992a5a"/><stop offset="0.55" stop-color="#990f39"/><stop offset="0.66" stop-color="#990028"/><stop offset="1" stop-color="#990011"/></linearGradient><linearGradient id="g117" x1="0" y1="0" x2="1" y2="0"><stop offset="0" stop-color="#00998d"/><stop offset="0.09" stop-color="#009799"/><stop offset="0.21" stop-color="#007e99"/><stop offset="0.26" stop-color="#237599"/><stop offset="0.36" stop-color="#965c99"/><stop offset="0.4" stop-color="#993e75"/><stop offset="0.45" stop-color="#992a5c"/><stop offset="0.55" stop-color="#990e3b"/><stop offset="0.66" stop-color="#990029"/><stop offset="1" stop-color="#990011"/></linearGradient><linearGradient id="g118" x1="0" y1="0" x2="1" y2="0"><stop offset="0" stop-color="#00998f"/><stop offset="0.06" stop-color="#009899"/><stop offset="0.21" stop-color="#007c99"/><stop offset="0.26" stop-color="#227399"/><stop offset="0.36" stop-color="#935a99"/><stop offset="0.38" stop-color="#994c89"/><stop offset="0.43" stop-color="#99336a"/><stop offset="0.47" stop-color="#992255"/><stop offset="0.57" stop-color="#990b38"/><stop offset="0.66" stop-color="#99002a"/><stop offset="1" stop-color="#990012"/></linearGradient><linearGradient id="g119" x1="0" y1="0" x2="1" y2="0"><stop offset="0" stop-color="#009992"/><stop offset="0.04" stop-color="#009999"/><stop offset="0.21" stop-color="#007999"/><stop offset="0.23" stop-color="#0d7599"/><stop offset="0.36" stop-color="#905899"/><stop offset="0.38" stop-color="#994b8c"/><stop offset="0.43" stop-color="#99336c"/><stop offset="0.47" stop-color="#992257"/><stop offset="0.57" stop-color="#990b39"/><stop offset="0.66" stop-color="#99002b"/><stop offset="1" stop-color="#990013"/></linearGradient><linearGradient id="g120" x1="0" y1="0" x2="1" y2="0"><stop offset="0" stop-color="#009994"/><stop offset="0.04" stop-color="#009799"/><stop offset="0.21" stop-color="#007799"/><stop offset="0.23" stop-color="#0c7299"/><stop offset="0.36" stop-color="#8d5699"/><stop offset="0.38" stop-color="#994b8e"/><stop offset="0.43" stop-color="#99326e"/><stop offset="0.47" stop-color="#992259"/><stop offset="0.57" stop-color="#990b3a"/><stop offset="0.66" stop-color="#99002c"/><stop offset="1" stop-color="#990013"/></linearGradient><linearGradient id="g121" x1="0" y1="0" x2="1" y2="0"><stop offset="0" stop-color="#009997"/><stop offset="0.21" stop-color="#007499"/><stop offset="0.23" stop-color="#0c7099"/><stop offset="0.36" stop-color="#8a5499"/><stop offset="0.38" stop-color="#994b91"/><stop offset="0.43" stop-color="#993270"/><stop offset="0.47" stop-color="#99225b"/><stop offset="0.57" stop-color="#990a3b"/><stop offset="0.66" stop-color="#99002d"/><stop offset="1" stop-color="#990014"/></linearGradient><linearGradient id="g122" x1="0" y1="0" x2="1" y2="0"><stop offset="0" stop-color="#009899"/><stop offset="0.21" stop-color="#007299"/><stop offset="0.23" stop-color="#0c6e99"/><stop offset="0.38" stop-color="#994b94"/><stop offset="0.43" stop-color="#993273"/><stop offset="0.47" stop-color="#99225d"/><stop offset="0.57" stop-color="#990a3d"/><stop offset="0.66" stop-color="#99002e"/><stop offset="1" stop-color="#990014"/></linearGradient><linearGradient id="g123" x1="0" y1="0" x2="1" y2="0"><stop offset="0" stop-color="#009699"/><stop offset="0.21" stop-color="#007099"/><stop offset="0.23" stop-color="#0b6b99"/><stop offset="0.38" stop-color="#994a98"/><stop offset="0.43" stop-color="#993275"/><stop offset="0.47" stop-color="#99225f"/><stop offset="0.57" stop-color="#990a3e"/><stop offset="0.66" stop-color="#99002f"/><stop offset="1" stop-color="#990015"/></linearGradient><linearGradient id="g124" x1="0" y1="0" x2="1" y2="0"><stop offset="0" stop-color="#009399"/><stop offset="0.21" stop-color="#006e99"/><stop offset="0.26" stop-color="#1e6599"/><stop offset="0.38" stop-color="#974999"/><stop offset="0.43" stop-color="#993178"/><stop offset="0.47" stop-color="#992161"/><stop offset="0.57" stop-color="#990a3f"/><stop offset="0.66" stop-color="#990031"/><stop offset="0.74" stop-color="#990026"/><stop offset="1" stop-color="#990015"/></linearGradient><linearGradient id="g125" x1="0" y1="0" x2="1" y2="0"><stop offset="0" stop-color="#009099"/><stop offset="0.21" stop-color="#006b99"/><stop offset="0.26" stop-color="#1d6399"/><stop offset="0.38" stop-color="#954899"/><stop offset="0.4" stop-color="#993c8a"/><stop offset="0.45" stop-color="#99286d"/><stop offset="0.49" stop-color="#991b5a"/><stop offset="0.6" stop-color="#99073c"/><stop offset="0.66" stop-color="#990032"/><stop offset="0.77" stop-color="#990025"/><stop offset="1" stop-color="#990016"/></linearGradient><linearGradient id="g126" x1="0" y1="0" x2="1" y2="0"><stop offset="0" stop-color="#008e99"/><stop offset="0.21" stop-color="#006999"/><stop offset="0.26" stop-color="#1c6199"/><stop offset="0.38" stop-color="#924699"/><stop offset="0.4" stop-color="#993c8c"/><stop offset="0.45" stop-color="#99286f"/><stop offset="0.49" stop-color="#991b5b"/><stop offset="0.6" stop-color="#99073e"/><stop offset="0.66" stop-color="#990033"/><stop offset="0.77" stop-color="#990026"/><stop offset="1" stop-color="#990017"/></linearGradient><linearGradient id="g127" x1="0" y1="0" x2="1" y2="0"><stop offset="0" stop-color="#008c99"/><stop offset="0.21" stop-color="#006799"/><stop offset="0.26" stop-color="#1c5f99"/><stop offset="0.38" stop-color="#8f4599"/><stop offset="0.4" stop-color="#993c8f"/><stop offset="0.45" stop-color="#992871"/><stop offset="0.49" stop-color="#991b5d"/><stop offset="0.6" stop-color="#99063f"/><stop offset="0.66" stop-color="#990034"/><stop offset="0.77" stop-color="#990027"/><stop offset="1" stop-color="#990017"/></linearGradient><linearGradient id="g128" x1="0" y1="0" x2="1" y2="0"><stop offset="0" stop-color="#008999"/><stop offset="0.21" stop-color="#006599"/><stop offset="0.23" stop-color="#0a6199"/><stop offset="0.38" stop-color="#8c4399"/><stop offset="0.4" stop-color="#993b92"/><stop offset="0.45" stop-color="#992874"/><stop offset="0.49" stop-color="#991a5f"/><stop offset="0.6" stop-color="#990640"/><stop offset="0.77" stop-color="#990028"/><stop offset="1" stop-color="#990018"/></linearGradient><linearGradient id="g129" x1="0" y1="0" x2="1" y2="0"><stop offset="0" stop-color="#008799"/><stop offset="0.21" stop-color="#006399"/><stop offset="0.23" stop-color="#095f99"/><stop offset="0.4" stop-color="#993b95"/><stop offset="0.45" stop-color="#992876"/><stop offset="0.49" stop-color="#991a61"/><stop offset="0.6" stop-color="#990642"/><stop offset="0.77" stop-color="#990029"/><stop offset="1" stop-color="#990019"/></linearGradient><linearGradient id="g130" x1="0" y1="0" x2="1" y2="0"><stop offset="0" stop-color="#008599"/><stop offset="0.21" stop-color="#006199"/><stop offset="0.23" stop-color="#095e99"/><stop offset="0.26" stop-color="#1a5a99"/><stop offset="0.4" stop-color="#993b97"/><stop offset="0.45" stop-color="#992778"/><stop offset="0.49" stop-color="#991a63"/><stop offset="0.6" stop-color="#990643"/><stop offset="0.77" stop-color="#99002a"/><stop offset="1" stop-color="#990019"/></linearGradient><linearGradient id="g131" x1="0" y1="0" x2="1" y2="0"><stop offset="0" stop-color="#008399"/><stop offset="0.21" stop-color="#006099"/><stop offset="0.23" stop-color="#095c99"/><stop offset="0.26" stop-color="#195899"/><stop offset="0.4" stop-color="#983a99"/><stop offset="0.45" stop-color="#99277a"/><stop offset="0.49" stop-color="#991a65"/><stop offset="0.6" stop-color="#990644"/><stop offset="0.77" stop-color="#99002b"/><stop offset="1" stop-color="#99001a"/></linearGradient><linearGradient id="g132" x1="0" y1="0" x2="1" y2="0"><stop offset="0" stop-color="#008099"/><stop offset="0.21" stop-color="#005e99"/><stop offset="0.23" stop-color="#085a99"/><stop offset="0.26" stop-color="#195699"/><stop offset="0.4" stop-color="#953999"/><stop offset="0.43" stop-color="#99308b"/><stop offset="0.51" stop-color="#99145e"/><stop offset="0.62" stop-color="#990341"/><stop offset="0.77" stop-color="#99002c"/><stop offset="1" stop-color="#99001a"/></linearGradient><linearGradient id="g133" x1="0" y1="0" x2="1" y2="0"><stop offset="0" stop-color="#007e99"/><stop offset="0.21" stop-color="#005c99"/><stop offset="0.23" stop-color="#085899"/><stop offset="0.26" stop-color="#185499"/><stop offset="0.4" stop-color="#923899"/><stop offset="0.43" stop-color="#992f8e"/><stop offset="0.51" stop-color="#991460"/><stop offset="0.62" stop-color="#990342"/><stop offset="0.77" stop-color="#99002c"/><stop offset="1" stop-color="#99001b"/></linearGradient><linearGradient id="g134" x1="0" y1="0" x2="1" y2="0"><stop offset="0" stop-color="#007c99"/><stop offset="0.21" stop-color="#005a99"/><stop offset="0.26" stop-color="#185399"/><stop offset="0.4" stop-color="#903699"/><stop offset="0.43" stop-color="#992f90"/><stop offset="0.47" stop-color="#991f75"/><stop offset="0.51" stop-color="#991462"/><stop offset="0.62" stop-color="#990344"/><stop offset="0.77" stop-color="#99002d"/><stop offset="1" stop-color="#99001c"/></linearGradient><linearGradient id="g135" x1="0" y1="0" x2="1" y2="0"><stop offset="0" stop-color="#007a99"/><stop offset="0.21" stop-color="#005999"/><stop offset="0.23" stop-color="#085599"/><stop offset="0.4" stop-color="#8d3599"/><stop offset="0.43" stop-color="#992f93"/><stop offset="0.47" stop-color="#991f77"/><stop offset="0.51" stop-color="#991463"/><stop offset="0.62" stop-color="#990345"/><stop offset="0.77" stop-color="#99002e"/><stop offset="1" stop-color="#99001c"/></linearGradient><linearGradient id="g136" x1="0" y1="0" x2="1" y2="0"><stop offset="0" stop-color="#007899"/><stop offset="0.21" stop-color="#005799"/><stop offset="0.23" stop-color="#075399"/><stop offset="0.43" stop-color="#992f96"/><stop offset="0.47" stop-color="#991f79"/><stop offset="0.51" stop-color="#991465"/><stop offset="0.62" stop-color="#990246"/><stop offset="0.77" stop-color="#99002f"/><stop offset="1" stop-color="#99001d"/></linearGradient><linearGradient id="g137" x1="0" y1="0" x2="1" y2="0"><stop offset="0" stop-color="#007699"/><stop offset="0.21" stop-color="#005599"/><stop offset="0.23" stop-color="#075299"/><stop offset="0.43" stop-color="#992e98"/><stop offset="0.47" stop-color="#991f7b"/><stop offset="0.51" stop-color="#991367"/><stop offset="0.62" stop-color="#990248"/><stop offset="0.77" stop-color="#990030"/><stop offset="1" stop-color="#99001e"/></linearGradient><linearGradient id="g138" x1="0" y1="0" x2="1" y2="0"><stop offset="0" stop-color="#007499"/><stop offset="0.21" stop-color="#005499"/><stop offset="0.23" stop-color="#075099"/><stop offset="0.43" stop-color="#972d99"/><stop offset="0.51" stop-color="#991369"/><stop offset="0.62" stop-color="#990249"/><stop offset="0.77" stop-color="#990031"/><stop offset="1" stop-color="#99001e"/></linearGradient><linearGradient id="g139" x1="0" y1="0" x2="1" y2="0"><stop offset="0" stop-color="#007399"/><stop offset="0.21" stop-color="#005299"/><stop offset="0.23" stop-color="#074f99"/><stop offset="0.43" stop-color="#952c99"/><stop offset="0.45" stop-color="#99258d"/><stop offset="0.53" stop-color="#990f62"/><stop offset="0.64" stop-color="#990046"/><stop offset="0.79" stop-color="#990030"/><stop offset="1" stop-color="#99001f"/></linearGradient><linearGradient id="g140" x1="0" y1="0" x2="1" y2="0"><stop offset="0" stop-color="#007199"/><stop offset="0.21" stop-color="#005199"/><stop offset="0.23" stop-color="#074d99"/><stop offset="0.43" stop-color="#922b99"/><stop offset="0.45" stop-color="#992590"/><stop offset="0.53" stop-color="#990e64"/><stop offset="0.64" stop-color="#990047"/><stop offset="0.79" stop-color="#990031"/><stop offset="1" stop-color="#990020"/></linearGradient><linearGradient id="g141" x1="0" y1="0" x2="1" y2="0"><stop offset="0" stop-color="#006f99"/><stop offset="0.21" stop-color="#004f99"/><stop offset="0.23" stop-color="#064c99"/><stop offset="0.43" stop-color="#902a99"/><stop offset="0.45" stop-color="#992592"/><stop offset="0.53" stop-color="#990e66"/><stop offset="0.64" stop-color="#990048"/><stop offset="0.79" stop-color="#990032"/><stop offset="1" stop-color="#990020"/></linearGradient><linearGradient id="g142" x1="0" y1="0" x2="1" y2="0"><stop offset="0" stop-color="#006d99"/><stop offset="0.21" stop-color="#004e99"/><stop offset="0.23" stop-color="#064b99"/><stop offset="0.43" stop-color="#8d2999"/><stop offset="0.45" stop-color="#992495"/><stop offset="0.53" stop-color="#990e68"/><stop offset="0.64" stop-color="#99004a"/><stop offset="0.79" stop-color="#990033"/><stop offset="1" stop-color="#990021"/></linearGradient><linearGradient id="g143" x1="0" y1="0" x2="1" y2="0"><stop offset="0" stop-color="#006b99"/><stop offset="0.21" stop-color="#004d99"/><stop offset="0.23" stop-color="#064999"/><stop offset="0.45" stop-color="#992497"/><stop offset="0.53" stop-color="#990e69"/><stop offset="0.64" stop-color="#99004b"/><stop offset="0.79" stop-color="#990034"/><stop offset="1" stop-color="#990022"/></linearGradient><linearGradient id="g144" x1="0" y1="0" x2="1" y2="0"><stop offset="0" stop-color="#006a99"/><stop offset="0.21" stop-color="#004b99"/><stop offset="0.23" stop-color="#064899"/><stop offset="0.45" stop-color="#992499"/><stop offset="0.53" stop-color="#990e6b"/><stop offset="0.64" stop-color="#99004c"/><stop offset="0.79" stop-color="#990035"/><stop offset="1" stop-color="#990022"/></linearGradient><linearGradient id="g145" x1="0" y1="0" x2="1" y2="0"><stop offset="0" stop-color="#006899"/><stop offset="0.21" stop-color="#004a99"/><stop offset="0.23" stop-color="#064799"/><stop offset="0.45" stop-color="#962399"/><stop offset="0.53" stop-color="#990d6d"/><stop offset="0.64" stop-color="#99004e"/><stop offset="0.79" stop-color="#990036"/><stop offset="1" stop-color="#990023"/></linearGradient><linearGradient id="g146" x1="0" y1="0" x2="1" y2="0"><stop offset="0" stop-color="#006699"/><stop offset="0.21" stop-color="#004899"/><stop offset="0.23" stop-color="#064599"/><stop offset="0.45" stop-color="#942299"/><stop offset="0.47" stop-color="#991c90"/><stop offset="0.55" stop-color="#990a67"/><stop offset="0.66" stop-color="#99004a"/><stop offset="0.81" stop-color="#990034"/><stop offset="1" stop-color="#990024"/></linearGradient><linearGradient id="g147" x1="0" y1="0" x2="1" y2="0"><stop offset="0" stop-color="#006599"/><stop offset="0.21" stop-color="#004799"/><stop offset="0.23" stop-color="#054499"/><stop offset="0.45" stop-color="#912199"/><stop offset="0.47" stop-color="#991c92"/><stop offset="0.55" stop-color="#990969"/><stop offset="0.66" stop-color="#99004c"/><stop offset="0.81" stop-color="#990035"/><stop offset="1" stop-color="#990025"/></linearGradient><linearGradient id="g148" x1="0" y1="0" x2="1" y2="0"><stop offset="0" stop-color="#006399"/><stop offset="0.21" stop-color="#004699"/><stop offset="0.23" stop-color="#054399"/><stop offset="0.45" stop-color="#8f2099"/><stop offset="0.47" stop-color="#991c94"/><stop offset="0.55" stop-color="#99096a"/><stop offset="0.66" stop-color="#99004d"/><stop offset="0.81" stop-color="#990036"/><stop offset="1" stop-color="#990025"/></linearGradient><linearGradient id="g149" x1="0" y1="0" x2="1" y2="0"><stop offset="0" stop-color="#006299"/><stop offset="0.21" stop-color="#004599"/><stop offset="0.23" stop-color="#054299"/><stop offset="0.47" stop-color="#991b97"/><stop offset="0.55" stop-color="#99096c"/><stop offset="0.66" stop-color="#99004e"/><stop offset="0.81" stop-color="#990037"/><stop offset="1" stop-color="#990026"/></linearGradient><linearGradient id="g150" x1="0" y1="0" x2="1" y2="0"><stop offset="0" stop-color="#006099"/><stop offset="0.21" stop-color="#004399"/><stop offset="0.23" stop-color="#054099"/><stop offset="0.47" stop-color="#991b99"/><stop offset="0.55" stop-color="#99096e"/><stop offset="0.66" stop-color="#990050"/><stop offset="0.81" stop-color="#990038"/><stop offset="1" stop-color="#990027"/></linearGradient><linearGradient id="g151" x1="0" y1="0" x2="1" y2="0"><stop offset="0" stop-color="#005f99"/><stop offset="0.21" stop-color="#004299"/><stop offset="0.23" stop-color="#053f99"/><stop offset="0.47" stop-color="#971b99"/><stop offset="0.55" stop-color="#990870"/><stop offset="0.66" stop-color="#990051"/><stop offset="0.81" stop-color="#990039"/><stop offset="1" stop-color="#990028"/></linearGradient><linearGradient id="g152" x1="0" y1="0" x2="1" y2="0"><stop offset="0" stop-color="#005d99"/><stop offset="0.21" stop-color="#004199"/><stop offset="0.23" stop-color="#053e99"/><stop offset="0.47" stop-color="#941a99"/><stop offset="0.49" stop-color="#991590"/><stop offset="0.57" stop-color="#99056a"/><stop offset="0.68" stop-color="#99004e"/><stop offset="0.83" stop-color="#990037"/><stop offset="1" stop-color="#990028"/></linearGradient><linearGradient id="g153" x1="0" y1="0" x2="1" y2="0"><stop offset="0" stop-color="#005c99"/><stop offset="0.21" stop-color="#004099"/><stop offset="0.23" stop-color="#053d99"/><stop offset="0.47" stop-color="#921999"/><stop offset="0.49" stop-color="#991592"/><stop offset="0.57" stop-color="#99056b"/><stop offset="0.68" stop-color="#99004f"/><stop offset="0.83" stop-color="#990038"/><stop offset="1" stop-color="#990029"/></linearGradient><linearGradient id="g154" x1="0" y1="0" x2="1" y2="0"><stop offset="0" stop-color="#005a99"/><stop offset="0.21" stop-color="#003f99"/><stop offset="0.23" stop-color="#053c99"/><stop offset="0.47" stop-color="#901999"/><stop offset="0.49" stop-color="#991495"/><stop offset="0.57" stop-color="#99056d"/><stop offset="0.68" stop-color="#990050"/><stop offset="0.83" stop-color="#990039"/><stop offset="1" stop-color="#99002a"/></linearGradient><linearGradient id="g155" x1="0" y1="0" x2="1" y2="0"><stop offset="0" stop-color="#005999"/><stop offset="0.21" stop-color="#003e99"/><stop offset="0.23" stop-color="#043b99"/><stop offset="0.49" stop-color="#991497"/><stop offset="0.57" stop-color="#99046f"/><stop offset="0.68" stop-color="#990052"/><stop offset="0.83" stop-color="#99003a"/><stop offset="1" stop-color="#99002b"/></linearGradient><linearGradient id="g156" x1="0" y1="0" x2="1" y2="0"><stop offset="0" stop-color="#005899"/><stop offset="0.23" stop-color="#043a99"/><stop offset="0.49" stop-color="#991499"/><stop offset="0.57" stop-color="#990470"/><stop offset="0.68" stop-color="#990053"/><stop offset="0.83" stop-color="#99003b"/><stop offset="1" stop-color="#99002b"/></linearGradient><linearGradient id="g157" x1="0" y1="0" x2="1" y2="0"><stop offset="0" stop-color="#005699"/><stop offset="0.23" stop-color="#043999"/><stop offset="0.49" stop-color="#971399"/><stop offset="0.57" stop-color="#990472"/><stop offset="0.68" stop-color="#990054"/><stop offset="0.83" stop-color="#99003c"/><stop offset="1" stop-color="#99002c"/></linearGradient><linearGradient id="g158" x1="0" y1="0" x2="1" y2="0"><stop offset="0" stop-color="#005599"/><stop offset="0.23" stop-color="#043899"/><stop offset="0.49" stop-color="#941399"/><stop offset="0.51" stop-color="#990f91"/><stop offset="0.6" stop-color="#99016d"/><stop offset="0.7" stop-color="#990051"/><stop offset="0.83" stop-color="#99003d"/><stop offset="1" stop-color="#99002d"/></linearGradient><linearGradient id="g159" x1="0" y1="0" x2="1" y2="0"><stop offset="0" stop-color="#005499"/><stop offset="0.23" stop-color="#043799"/><stop offset="0.49" stop-color="#921299"/><stop offset="0.51" stop-color="#990e93"/><stop offset="0.6" stop-color="#99016e"/><stop offset="0.7" stop-color="#990053"/><stop offset="0.83" stop-color="#99003e"/><stop offset="1" stop-color="#99002e"/></linearGradient><linearGradient id="g160" x1="0" y1="0" x2="1" y2="0"><stop offset="0" stop-color="#005299"/><stop offset="0.23" stop-color="#043699"/><stop offset="0.51" stop-color="#990e95"/><stop offset="0.6" stop-color="#990170"/><stop offset="0.7" stop-color="#990054"/><stop offset="0.83" stop-color="#99003f"/><stop offset="1" stop-color="#99002e"/></linearGradient><linearGradient id="g161" x1="0" y1="0" x2="1" y2="0"><stop offset="0" stop-color="#005199"/><stop offset="0.23" stop-color="#043599"/><stop offset="0.51" stop-color="#990e98"/><stop offset="0.6" stop-color="#990072"/><stop offset="0.7" stop-color="#990055"/><stop offset="0.83" stop-color="#990040"/><stop offset="1" stop-color="#99002f"/></linearGradient><linearGradient id="g162" x1="0" y1="0" x2="1" y2="0"><stop offset="0" stop-color="#005099"/><stop offset="0.23" stop-color="#043499"/><stop offset="0.51" stop-color="#980d99"/><stop offset="0.6" stop-color="#990073"/><stop offset="0.7" stop-color="#990057"/><stop offset="0.83" stop-color="#990041"/><stop offset="1" stop-color="#990030"/></linearGradient><linearGradient id="g163" x1="0" y1="0" x2="1" y2="0"><stop offset="0" stop-color="#004f99"/><stop offset="0.23" stop-color="#043399"/><stop offset="0.51" stop-color="#960d99"/><stop offset="0.6" stop-color="#990075"/><stop offset="0.7" stop-color="#990058"/><stop offset="0.83" stop-color="#990042"/><stop offset="1" stop-color="#990031"/></linearGradient><linearGradient id="g164" x1="0" y1="0" x2="1" y2="0"><stop offset="0" stop-color="#004d99"/><stop offset="0.23" stop-color="#043299"/><stop offset="0.51" stop-color="#940c99"/><stop offset="0.53" stop-color="#990992"/><stop offset="0.62" stop-color="#990070"/><stop offset="0.7" stop-color="#990059"/><stop offset="0.83" stop-color="#990044"/><stop offset="1" stop-color="#990032"/></linearGradient><linearGradient id="g165" x1="0" y1="0" x2="1" y2="0"><stop offset="0" stop-color="#004c99"/><stop offset="0.23" stop-color="#043199"/><stop offset="0.51" stop-color="#920c99"/><stop offset="0.53" stop-color="#990994"/><stop offset="0.62" stop-color="#990071"/><stop offset="0.7" stop-color="#99005b"/><stop offset="0.83" stop-color="#990045"/><stop offset="1" stop-color="#990033"/></linearGradient><linearGradient id="g166" x1="0" y1="0" x2="1" y2="0"><stop offset="0" stop-color="#004b99"/><stop offset="0.23" stop-color="#043099"/><stop offset="0.53" stop-color="#990897"/><stop offset="0.62" stop-color="#990073"/><stop offset="0.7" stop-color="#99005c"/><stop offset="0.83" stop-color="#990046"/><stop offset="1" stop-color="#990033"/></linearGradient><linearGradient id="g167" x1="0" y1="0" x2="1" y2="0"><stop offset="0" stop-color="#004a99"/><stop offset="0.23" stop-color="#042f99"/><stop offset="0.53" stop-color="#990899"/><stop offset="0.62" stop-color="#990075"/><stop offset="0.7" stop-color="#99005d"/><stop offset="0.83" stop-color="#990047"/><stop offset="1" stop-color="#990034"/></linearGradient><linearGradient id="g168" x1="0" y1="0" x2="1" y2="0"><stop offset="0" stop-color="#004999"/><stop offset="0.23" stop-color="#042e99"/><stop offset="0.53" stop-color="#970899"/><stop offset="0.62" stop-color="#990076"/><stop offset="0.72" stop-color="#99005a"/><stop offset="0.85" stop-color="#990045"/><stop offset="1" stop-color="#990035"/></linearGradient><linearGradient id="g169" x1="0" y1="0" x2="1" y2="0"><stop offset="0" stop-color="#004899"/><stop offset="0.23" stop-color="#032e99"/><stop offset="0.53" stop-color="#950799"/><stop offset="0.55" stop-color="#990492"/><stop offset="0.64" stop-color="#990071"/><stop offset="0.72" stop-color="#99005b"/><stop offset="0.85" stop-color="#990046"/><stop offset="1" stop-color="#990036"/></linearGradient><linearGradient id="g170" x1="0" y1="0" x2="1" y2="0"><stop offset="0" stop-color="#004799"/><stop offset="0.23" stop-color="#032d99"/><stop offset="0.53" stop-color="#930799"/><stop offset="0.55" stop-color="#990494"/><stop offset="0.64" stop-color="#990073"/><stop offset="0.72" stop-color="#99005d"/><stop offset="0.85" stop-color="#990047"/><stop offset="1" stop-color="#990037"/></linearGradient><linearGradient id="g171" x1="0" y1="0" x2="1" y2="0"><stop offset="0" stop-color="#004599"/><stop offset="0.23" stop-color="#032c99"/><stop offset="0.55" stop-color="#990496"/><stop offset="0.64" stop-color="#990074"/><stop offset="0.72" stop-color="#99005e"/><stop offset="0.85" stop-color="#990048"/><stop offset="1" stop-color="#990038"/></linearGradient><linearGradient id="g172" x1="0" y1="0" x2="1" y2="0"><stop offset="0" stop-color="#004499"/><stop offset="0.23" stop-color="#032b99"/><stop offset="0.55" stop-color="#990398"/><stop offset="0.64" stop-color="#990076"/><stop offset="0.72" stop-color="#990060"/><stop offset="0.85" stop-color="#990049"/><stop offset="1" stop-color="#990039"/></linearGradient><linearGradient id="g173" x1="0" y1="0" x2="1" y2="0"><stop offset="0" stop-color="#004399"/><stop offset="0.23" stop-color="#032a99"/><stop offset="0.55" stop-color="#980399"/><stop offset="0.64" stop-color="#990078"/><stop offset="0.72" stop-color="#990061"/><stop offset="0.85" stop-color="#99004a"/><stop offset="1" stop-color="#99003a"/></linearGradient><linearGradient id="g174" x1="0" y1="0" x2="1" y2="0"><stop offset="0" stop-color="#004299"/><stop offset="0.23" stop-color="#032999"/><stop offset="0.55" stop-color="#960399"/><stop offset="0.57" stop-color="#990092"/><stop offset="0.66" stop-color="#990073"/><stop offset="0.74" stop-color="#99005e"/><stop offset="1" stop-color="#99003a"/></linearGradient><linearGradient id="g175" x1="0" y1="0" x2="1" y2="0"><stop offset="0" stop-color="#004199"/><stop offset="0.23" stop-color="#032999"/><stop offset="0.55" stop-color="#940399"/><stop offset="0.57" stop-color="#990094"/><stop offset="0.66" stop-color="#990074"/><stop offset="0.74" stop-color="#99005f"/><stop offset="1" stop-color="#99003b"/></linearGradient><linearGradient id="g176" x1="0" y1="0" x2="1" y2="0"><stop offset="0" stop-color="#004099"/><stop offset="0.23" stop-color="#032899"/><stop offset="0.57" stop-color="#990096"/><stop offset="0.66" stop-color="#990076"/><stop offset="0.74" stop-color="#990061"/><stop offset="1" stop-color="#99003c"/></linearGradient><linearGradient id="g177" x1="0" y1="0" x2="1" y2="0"><stop offset="0" stop-color="#003f99"/><stop offset="0.23" stop-color="#032799"/><stop offset="0.57" stop-color="#990098"/><stop offset="0.66" stop-color="#990078"/><stop offset="0.74" stop-color="#990062"/><stop offset="1" stop-color="#99003d"/></linearGradient><linearGradient id="g178" x1="0" y1="0" x2="1" y2="0"><stop offset="0" stop-color="#003e99"/><stop offset="0.23" stop-color="#032699"/><stop offset="0.57" stop-color="#980099"/><stop offset="0.66" stop-color="#990079"/><stop offset="0.74" stop-color="#990063"/><stop offset="1" stop-color="#99003e"/></linearGradient><linearGradient id="g179" x1="0" y1="0" x2="1" y2="0"><stop offset="0" stop-color="#003d99"/><stop offset="0.23" stop-color="#032699"/><stop offset="0.57" stop-color="#960099"/><stop offset="0.6" stop-color="#990093"/><stop offset="0.68" stop-color="#990075"/><stop offset="0.77" stop-color="#990060"/><stop offset="1" stop-color="#99003f"/></linearGradient><linearGradient id="g180" x1="0" y1="0" x2="1" y2="0"><stop offset="0" stop-color="#003c99"/><stop offset="0.23" stop-color="#032599"/><stop offset="0.57" stop-color="#940099"/><stop offset="0.6" stop-color="#990095"/><stop offset="0.68" stop-color="#990076"/><stop offset="0.77" stop-color="#990062"/><stop offset="1" stop-color="#990040"/></linearGradient><linearGradient id="g181" x1="0" y1="0" x2="1" y2="0"><stop offset="0" stop-color="#003b99"/><stop offset="0.23" stop-color="#032499"/><stop offset="0.6" stop-color="#990097"/><stop offset="0.68" stop-color="#990078"/><stop offset="0.77" stop-color="#990063"/><stop offset="1" stop-color="#990041"/></linearGradient><linearGradient id="g182" x1="0" y1="0" x2="1" y2="0"><stop offset="0" stop-color="#003a99"/><stop offset="0.23" stop-color="#032499"/><stop offset="0.6" stop-color="#990099"/><stop offset="0.68" stop-color="#99007a"/><stop offset="0.77" stop-color="#990064"/><stop offset="1" stop-color="#990042"/></linearGradient><linearGradient id="g183" x1="0" y1="0" x2="1" y2="0"><stop offset="0" stop-color="#003999"/><stop offset="0.23" stop-color="#032399"/><stop offset="0.6" stop-color="#970099"/><stop offset="0.68" stop-color="#99007b"/><stop offset="0.77" stop-color="#990066"/><stop offset="1" stop-color="#990043"/></linearGradient><linearGradient id="g184" x1="0" y1="0" x2="1" y2="0"><stop offset="0" stop-color="#003999"/><stop offset="0.23" stop-color="#032299"/><stop offset="0.55" stop-color="#830099"/><stop offset="0.62" stop-color="#990094"/><stop offset="0.77" stop-color="#990067"/><stop offset="1" stop-color="#990044"/></linearGradient><linearGradient id="g185" x1="0" y1="0" x2="1" y2="0"><stop offset="0" stop-color="#003899"/><stop offset="0.23" stop-color="#032299"/><stop offset="0.55" stop-color="#810099"/><stop offset="0.62" stop-color="#990096"/><stop offset="0.77" stop-color="#990069"/><stop offset="1" stop-color="#990045"/></linearGradient><linearGradient id="g186" x1="0" y1="0" x2="1" y2="0"><stop offset="0" stop-color="#003799"/><stop offset="0.23" stop-color="#032199"/><stop offset="0.53" stop-color="#770299"/><stop offset="0.62" stop-color="#990098"/><stop offset="0.77" stop-color="#99006a"/><stop offset="1" stop-color="#990046"/></linearGradient><linearGradient id="g187" x1="0" y1="0" x2="1" y2="0"><stop offset="0" stop-color="#003699"/><stop offset="0.23" stop-color="#032099"/><stop offset="0.53" stop-color="#750299"/><stop offset="0.62" stop-color="#980099"/><stop offset="0.7" stop-color="#99007c"/><stop offset="0.79" stop-color="#990067"/><stop offset="1" stop-color="#990047"/></linearGradient><linearGradient id="g188" x1="0" y1="0" x2="1" y2="0"><stop offset="0" stop-color="#003599"/><stop offset="0.23" stop-color="#032099"/><stop offset="0.53" stop-color="#740199"/><stop offset="0.62" stop-color="#970099"/><stop offset="0.79" stop-color="#990068"/><stop offset="1" stop-color="#990048"/></linearGradient><linearGradient id="g189" x1="0" y1="0" x2="1" y2="0"><stop offset="0" stop-color="#003499"/><stop offset="0.23" stop-color="#031f99"/><stop offset="0.53" stop-color="#720199"/><stop offset="0.64" stop-color="#990095"/><stop offset="0.79" stop-color="#99006a"/><stop offset="1" stop-color="#990049"/></linearGradient><linearGradient id="g190" x1="0" y1="0" x2="1" y2="0"><stop offset="0" stop-color="#003399"/><stop offset="0.23" stop-color="#031e99"/><stop offset="0.53" stop-color="#710199"/><stop offset="0.64" stop-color="#990097"/><stop offset="0.79" stop-color="#99006b"/><stop offset="1" stop-color="#99004a"/></linearGradient><linearGradient id="g191" x1="0" y1="0" x2="1" y2="0"><stop offset="0" stop-color="#003299"/><stop offset="0.23" stop-color="#031e99"/><stop offset="0.53" stop-color="#6f0099"/><stop offset="0.64" stop-color="#990099"/><stop offset="0.79" stop-color="#99006d"/><stop offset="1" stop-color="#99004b"/></linearGradient><linearGradient id="g192" x1="0" y1="0" x2="1" y2="0"><stop offset="0" stop-color="#003299"/><stop offset="0.23" stop-color="#041d99"/><stop offset="0.53" stop-color="#6e0099"/><stop offset="0.64" stop-color="#970099"/><stop offset="0.79" stop-color="#99006e"/><stop offset="1" stop-color="#99004c"/></linearGradient><linearGradient id="g193" x1="0" y1="0" x2="1" y2="0"><stop offset="0" stop-color="#003199"/><stop offset="0.23" stop-color="#041c99"/><stop offset="0.53" stop-color="#6d0099"/><stop offset="0.66" stop-color="#990094"/><stop offset="0.81" stop-color="#99006b"/><stop offset="1" stop-color="#99004e"/></linearGradient><linearGradient id="g194" x1="0" y1="0" x2="1" y2="0"><stop offset="0" stop-color="#003099"/><stop offset="0.23" stop-color="#041c99"/><stop offset="0.53" stop-color="#6b0099"/><stop offset="0.66" stop-color="#990096"/><stop offset="0.81" stop-color="#99006d"/><stop offset="1" stop-color="#99004f"/></linearGradient><linearGradient id="g195" x1="0" y1="0" x2="1" y2="0"><stop offset="0" stop-color="#002f99"/><stop offset="0.23" stop-color="#041b99"/><stop offset="0.53" stop-color="#6a0099"/><stop offset="0.66" stop-color="#990098"/><stop offset="0.81" stop-color="#99006e"/><stop offset="1" stop-color="#990050"/></linearGradient><linearGradient id="g196" x1="0" y1="0" x2="1" y2="0"><stop offset="0" stop-color="#002e99"/><stop offset="0.23" stop-color="#041b99"/><stop offset="0.51" stop-color="#610199"/><stop offset="0.66" stop-color="#980099"/><stop offset="0.81" stop-color="#990070"/><stop offset="1" stop-color="#990051"/></linearGradient><linearGradient id="g197" x1="0" y1="0" x2="1" y2="0"><stop offset="0" stop-color="#002e99"/><stop offset="0.23" stop-color="#041a99"/><stop offset="0.51" stop-color="#600199"/><stop offset="0.66" stop-color="#960099"/><stop offset="0.81" stop-color="#990071"/><stop offset="1" stop-color="#990052"/></linearGradient><linearGradient id="g198" x1="0" y1="0" x2="1" y2="0"><stop offset="0" stop-color="#002d99"/><stop offset="0.23" stop-color="#041a99"/><stop offset="0.51" stop-color="#5f0199"/><stop offset="0.68" stop-color="#990096"/><stop offset="0.83" stop-color="#99006e"/><stop offset="1" stop-color="#990053"/></linearGradient><linearGradient id="g199" x1="0" y1="0" x2="1" y2="0"><stop offset="0" stop-color="#002c99"/><stop offset="0.23" stop-color="#041999"/><stop offset="0.51" stop-color="#5e0099"/><stop offset="0.68" stop-color="#990098"/><stop offset="0.83" stop-color="#990070"/><stop offset="1" stop-color="#990054"/></linearGradient><linearGradient id="g200" x1="0" y1="0" x2="1" y2="0"><stop offset="0" stop-color="#002b99"/><stop offset="0.23" stop-color="#041899"/><stop offset="0.51" stop-color="#5d0099"/><stop offset="0.68" stop-color="#980099"/><stop offset="0.83" stop-color="#990071"/><stop offset="1" stop-color="#990055"/></linearGradient><linearGradient id="g201" x1="0" y1="0" x2="1" y2="0"><stop offset="0" stop-color="#002b99"/><stop offset="0.23" stop-color="#041899"/><stop offset="0.51" stop-color="#5b0099"/><stop offset="0.68" stop-color="#960099"/><stop offset="0.83" stop-color="#990073"/><stop offset="1" stop-color="#990057"/></linearGradient><linearGradient id="g202" x1="0" y1="0" x2="1" y2="0"><stop offset="0" stop-color="#002a99"/><stop offset="0.23" stop-color="#041799"/><stop offset="0.51" stop-color="#5a0099"/><stop offset="0.7" stop-color="#990097"/><stop offset="0.83" stop-color="#990074"/><stop offset="1" stop-color="#990058"/></linearGradient><linearGradient id="g203" x1="0" y1="0" x2="1" y2="0"><stop offset="0" stop-color="#002999"/><stop offset="0.23" stop-color="#041799"/><stop offset="0.51" stop-color="#590099"/><stop offset="0.7" stop-color="#990099"/><stop offset="0.83" stop-color="#990076"/><stop offset="1" stop-color="#990059"/></linearGradient><linearGradient id="g204" x1="0" y1="0" x2="1" y2="0"><stop offset="0" stop-color="#002899"/><stop offset="0.23" stop-color="#041699"/><stop offset="0.49" stop-color="#510199"/><stop offset="0.7" stop-color="#980099"/><stop offset="0.83" stop-color="#990077"/><stop offset="1" stop-color="#99005a"/></linearGradient><linearGradient id="g205" x1="0" y1="0" x2="1" y2="0"><stop offset="0" stop-color="#002899"/><stop offset="0.23" stop-color="#041699"/><stop offset="0.49" stop-color="#510199"/><stop offset="0.7" stop-color="#960099"/><stop offset="0.85" stop-color="#990074"/><stop offset="1" stop-color="#99005c"/></linearGradient><linearGradient id="g206" x1="0" y1="0" x2="1" y2="0"><stop offset="0" stop-color="#002799"/><stop offset="0.23" stop-color="#041599"/><stop offset="0.49" stop-color="#500099"/><stop offset="0.72" stop-color="#990097"/><stop offset="0.85" stop-color="#990076"/><stop offset="1" stop-color="#99005d"/></linearGradient><linearGradient id="g207" x1="0" y1="0" x2="1" y2="0"><stop offset="0" stop-color="#002699"/><stop offset="0.23" stop-color="#041599"/><stop offset="0.49" stop-color="#4f0099"/><stop offset="0.72" stop-color="#990099"/><stop offset="0.85" stop-color="#990077"/><stop offset="1" stop-color="#99005e"/></linearGradient><linearGradient id="g208" x1="0" y1="0" x2="1" y2="0"><stop offset="0" stop-color="#002699"/><stop offset="0.23" stop-color="#041499"/><stop offset="0.49" stop-color="#4e0099"/><stop offset="0.72" stop-color="#970099"/><stop offset="0.85" stop-color="#990079"/><stop offset="1" stop-color="#99005f"/></linearGradient><linearGradient id="g209" x1="0" y1="0" x2="1" y2="0"><stop offset="0" stop-color="#002599"/><stop offset="0.23" stop-color="#041499"/><stop offset="0.49" stop-color="#4d0099"/><stop offset="0.72" stop-color="#950099"/><stop offset="0.87" stop-color="#990076"/><stop offset="1" stop-color="#990061"/></linearGradient><linearGradient id="g210" x1="0" y1="0" x2="1" y2="0"><stop offset="0" stop-color="#002499"/><stop offset="0.23" stop-color="#041399"/><stop offset="0.49" stop-color="#4c0099"/><stop offset="0.74" stop-color="#990098"/><stop offset="0.85" stop-color="#99007c"/><stop offset="1" stop-color="#990062"/></linearGradient><linearGradient id="g211" x1="0" y1="0" x2="1" y2="0"><stop offset="0" stop-color="#002499"/><stop offset="0.23" stop-color="#041399"/><stop offset="0.49" stop-color="#4b0099"/><stop offset="0.74" stop-color="#980099"/><stop offset="0.87" stop-color="#990079"/><stop offset="1" stop-color="#990063"/></linearGradient><linearGradient id="g212" x1="0" y1="0" x2="1" y2="0"><stop offset="0" stop-color="#002399"/><stop offset="0.23" stop-color="#041299"/><stop offset="0.47" stop-color="#440199"/><stop offset="0.74" stop-color="#960099"/><stop offset="1" stop-color="#990065"/></linearGradient><linearGradient id="g213" x1="0" y1="0" x2="1" y2="0"><stop offset="0" stop-color="#002299"/><stop offset="0.21" stop-color="#001399"/><stop offset="0.47" stop-color="#430099"/><stop offset="0.74" stop-color="#940099"/><stop offset="0.77" stop-color="#990097"/><stop offset="0.87" stop-color="#99007d"/><stop offset="1" stop-color="#990066"/></linearGradient><linearGradient id="g214" x1="0" y1="0" x2="1" y2="0"><stop offset="0" stop-color="#002299"/><stop offset="0.21" stop-color="#001399"/><stop offset="0.47" stop-color="#430099"/><stop offset="0.77" stop-color="#990099"/><stop offset="0.87" stop-color="#99007e"/><stop offset="1" stop-color="#990067"/></linearGradient><linearGradient id="g215" x1="0" y1="0" x2="1" y2="0"><stop offset="0" stop-color="#002199"/><stop offset="0.21" stop-color="#001399"/><stop offset="0.47" stop-color="#420099"/><stop offset="0.77" stop-color="#970099"/><stop offset="1" stop-color="#990069"/></linearGradient><linearGradient id="g216" x1="0" y1="0" x2="1" y2="0"><stop offset="0" stop-color="#002099"/><stop offset="0.21" stop-color="#001299"/><stop offset="0.47" stop-color="#410099"/><stop offset="0.77" stop-color="#950099"/><stop offset="1" stop-color="#99006a"/></linearGradient><linearGradient id="g217" x1="0" y1="0" x2="1" y2="0"><stop offset="0" stop-color="#002099"/><stop offset="0.21" stop-color="#001299"/><stop offset="0.47" stop-color="#400099"/><stop offset="0.79" stop-color="#990099"/><stop offset="1" stop-color="#99006c"/></linearGradient><linearGradient id="g218" x1="0" y1="0" x2="1" y2="0"><stop offset="0" stop-color="#001f99"/><stop offset="0.21" stop-color="#001199"/><stop offset="0.47" stop-color="#400099"/><stop offset="0.79" stop-color="#970099"/><stop offset="1" stop-color="#99006d"/></linearGradient><linearGradient id="g219" x1="0" y1="0" x2="1" y2="0"><stop offset="0" stop-color="#001f99"/><stop offset="0.21" stop-color="#001199"/><stop offset="0.45" stop-color="#3a0099"/><stop offset="0.79" stop-color="#960099"/><stop offset="1" stop-color="#99006e"/></linearGradient><linearGradient id="g220" x1="0" y1="0" x2="1" y2="0"><stop offset="0" stop-color="#001e99"/><stop offset="0.21" stop-color="#001099"/><stop offset="0.45" stop-color="#390099"/><stop offset="0.81" stop-color="#990098"/><stop offset="1" stop-color="#990070"/></linearGradient><linearGradient id="g221" x1="0" y1="0" x2="1" y2="0"><stop offset="0" stop-color="#001d99"/><stop offset="0.21" stop-color="#001099"/><stop offset="0.45" stop-color="#380099"/><stop offset="0.81" stop-color="#980099"/><stop offset="1" stop-color="#990071"/></linearGradient><linearGradient id="g222" x1="0" y1="0" x2="1" y2="0"><stop offset="0" stop-color="#001d99"/><stop offset="0.21" stop-color="#000f99"/><stop offset="0.45" stop-color="#380099"/><stop offset="0.81" stop-color="#960099"/><stop offset="1" stop-color="#990073"/></linearGradient><linearGradient id="g223" x1="0" y1="0" x2="1" y2="0"><stop offset="0" stop-color="#001c99"/><stop offset="0.21" stop-color="#000f99"/><stop offset="0.45" stop-color="#370099"/><stop offset="0.83" stop-color="#990098"/><stop offset="1" stop-color="#990074"/></linearGradient><linearGradient id="g224" x1="0" y1="0" x2="1" y2="0"><stop offset="0" stop-color="#001c99"/><stop offset="0.21" stop-color="#000e99"/><stop offset="0.45" stop-color="#370099"/><stop offset="0.83" stop-color="#980099"/><stop offset="1" stop-color="#990076"/></linearGradient><linearGradient id="g225" x1="0" y1="0" x2="1" y2="0"><stop offset="0" stop-color="#001b99"/><stop offset="0.21" stop-color="#000e99"/><stop offset="0.43" stop-color="#310099"/><stop offset="0.83" stop-color="#960099"/><stop offset="1" stop-color="#990078"/></linearGradient><linearGradient id="g226" x1="0" y1="0" x2="1" y2="0"><stop offset="0" stop-color="#001a99"/><stop offset="0.21" stop-color="#000e99"/><stop offset="0.43" stop-color="#300099"/><stop offset="0.85" stop-color="#990099"/><stop offset="1" stop-color="#990079"/></linearGradient><linearGradient id="g227" x1="0" y1="0" x2="1" y2="0"><stop offset="0" stop-color="#001a99"/><stop offset="0.21" stop-color="#000d99"/><stop offset="0.43" stop-color="#300099"/><stop offset="0.85" stop-color="#980099"/><stop offset="1" stop-color="#99007b"/></linearGradient><linearGradient id="g228" x1="0" y1="0" x2="1" y2="0"><stop offset="0" stop-color="#001999"/><stop offset="0.21" stop-color="#000d99"/><stop offset="0.43" stop-color="#2f0099"/><stop offset="0.85" stop-color="#960099"/><stop offset="1" stop-color="#99007c"/></linearGradient><linearGradient id="g229" x1="0" y1="0" x2="1" y2="0"><stop offset="0" stop-color="#001999"/><stop offset="0.21" stop-color="#000c99"/><stop offset="0.43" stop-color="#2f0099"/><stop offset="0.87" stop-color="#990099"/><stop offset="1" stop-color="#99007e"/></linearGradient><linearGradient id="g230" x1="0" y1="0" x2="1" y2="0"><stop offset="0" stop-color="#001899"/><stop offset="0.21" stop-color="#010c99"/><stop offset="0.4" stop-color="#2a0099"/><stop offset="0.87" stop-color="#970099"/><stop offset="1" stop-color="#990080"/></linearGradient><linearGradient id="g231" x1="0" y1="0" x2="1" y2="0"><stop offset="0" stop-color="#001899"/><stop offset="0.21" stop-color="#010c99"/><stop offset="0.4" stop-color="#290099"/><stop offset="0.87" stop-color="#950099"/><stop offset="1" stop-color="#990081"/></linearGradient><linearGradient id="g232" x1="0" y1="0" x2="1" y2="0"><stop offset="0" stop-color="#001799"/><stop offset="0.21" stop-color="#010b99"/><stop offset="0.4" stop-color="#290099"/><stop offset="0.89" stop-color="#980099"/><stop offset="1" stop-color="#990083"/></linearGradient><linearGradient id="g233" x1="0" y1="0" x2="1" y2="0"><stop offset="0" stop-color="#001799"/><stop offset="0.21" stop-color="#010b99"/><stop offset="0.4" stop-color="#290099"/><stop offset="0.89" stop-color="#970099"/><stop offset="1" stop-color="#990085"/></linearGradient><linearGradient id="g234" x1="0" y1="0" x2="1" y2="0"><stop offset="0" stop-color="#001699"/><stop offset="0.21" stop-color="#010a99"/><stop offset="0.4" stop-color="#280099"/><stop offset="0.91" stop-color="#990098"/><stop offset="1" stop-color="#990087"/></linearGradient><linearGradient id="g235" x1="0" y1="0" x2="1" y2="0"><stop offset="0" stop-color="#001699"/><stop offset="0.21" stop-color="#010a99"/><stop offset="0.38" stop-color="#230099"/><stop offset="0.91" stop-color="#980099"/><stop offset="1" stop-color="#990088"/></linearGradient><linearGradient id="g236" x1="0" y1="0" x2="1" y2="0"><stop offset="0" stop-color="#001599"/><stop offset="0.21" stop-color="#010a99"/><stop offset="0.38" stop-color="#230099"/><stop offset="0.91" stop-color="#960099"/><stop offset="1" stop-color="#99008a"/></linearGradient><linearGradient id="g237" x1="0" y1="0" x2="1" y2="0"><stop offset="0" stop-color="#001599"/><stop offset="0.21" stop-color="#010999"/><stop offset="0.38" stop-color="#230099"/><stop offset="0.94" stop-color="#990099"/><stop offset="1" stop-color="#99008c"/></linearGradient><linearGradient id="g238" x1="0" y1="0" x2="1" y2="0"><stop offset="0" stop-color="#001499"/><stop offset="0.21" stop-color="#020999"/><stop offset="0.38" stop-color="#220099"/><stop offset="0.94" stop-color="#970099"/><stop offset="1" stop-color="#99008e"/></linearGradient><linearGradient id="g239" x1="0" y1="0" x2="1" y2="0"><stop offset="0" stop-color="#001499"/><stop offset="0.21" stop-color="#020899"/><stop offset="0.38" stop-color="#220099"/><stop offset="0.94" stop-color="#950099"/><stop offset="1" stop-color="#990090"/></linearGradient><linearGradient id="g240" x1="0" y1="0" x2="1" y2="0"><stop offset="0" stop-color="#001399"/><stop offset="0.21" stop-color="#020899"/><stop offset="0.36" stop-color="#1e0099"/><stop offset="0.96" stop-color="#970099"/><stop offset="1" stop-color="#990092"/></linearGradient><linearGradient id="g241" x1="0" y1="0" x2="1" y2="0"><stop offset="0" stop-color="#001399"/><stop offset="0.21" stop-color="#020899"/><stop offset="0.36" stop-color="#1e0099"/><stop offset="0.96" stop-color="#960099"/><stop offset="1" stop-color="#990093"/></linearGradient><linearGradient id="g242" x1="0" y1="0" x2="1" y2="0"><stop offset="0" stop-color="#001299"/><stop offset="0.21" stop-color="#020799"/><stop offset="0.36" stop-color="#1d0099"/><stop offset="1" stop-color="#990095"/></linearGradient><linearGradient id="g243" x1="0" y1="0" x2="1" y2="0"><stop offset="0" stop-color="#001299"/><stop offset="0.21" stop-color="#020799"/><stop offset="0.36" stop-color="#1d0099"/><stop offset="1" stop-color="#990097"/></linearGradient><linearGradient id="g244" x1="0" y1="0" x2="1" y2="0"><stop offset="0" stop-color="#001199"/><stop offset="0.21" stop-color="#020799"/><stop offset="0.36" stop-color="#1d0099"/><stop offset="1" stop-color="#990099"/></linearGradient><linearGradient id="g245" x1="0" y1="0" x2="1" y2="0"><stop offset="0" stop-color="#001199"/><stop offset="0.21" stop-color="#020699"/><stop offset="0.34" stop-color="#190099"/><stop offset="1" stop-color="#970099"/></linearGradient><linearGradient id="g246" x1="0" y1="0" x2="1" y2="0"><stop offset="0" stop-color="#001099"/><stop offset="0.21" stop-color="#020699"/><stop offset="0.34" stop-color="#190099"/><stop offset="1" stop-color="#950099"/></linearGradient><linearGradient id="g247" x1="0" y1="0" x2="1" y2="0"><stop offset="0" stop-color="#001099"/><stop offset="0.21" stop-color="#030699"/><stop offset="0.34" stop-color="#180099"/><stop offset="1" stop-color="#930099"/></linearGradient><linearGradient id="g248" x1="0" y1="0" x2="1" y2="0"><stop offset="0" stop-color="#000f99"/><stop offset="0.21" stop-color="#030599"/><stop offset="0.32" stop-color="#150099"/><stop offset="1" stop-color="#910099"/></linearGradient><linearGradient id="g249" x1="0" y1="0" x2="1" y2="0"><stop offset="0" stop-color="#000f99"/><stop offset="0.21" stop-color="#030599"/><stop offset="0.32" stop-color="#150099"/><stop offset="1" stop-color="#8f0099"/></linearGradient><linearGradient id="g250" x1="0" y1="0" x2="1" y2="0"><stop offset="0" stop-color="#000e99"/><stop offset="0.21" stop-color="#030599"/><stop offset="1" stop-color="#8d0099"/></linearGradient><linearGradient id="g251" x1="0" y1="0" x2="1" y2="0"><stop offset="0" stop-color="#000e99"/><stop offset="0.19" stop-color="#000599"/><stop offset="0.32" stop-color="#140099"/><stop offset="1" stop-color="#8b0099"/></linearGradient><linearGradient id="g252" x1="0" y1="0" x2="1" y2="0"><stop offset="0" stop-color="#000d99"/><stop offset="0.19" stop-color="#000599"/><stop offset="0.3" stop-color="#110099"/><stop offset="1" stop-color="#890099"/></linearGradient><linearGradient id="g253" x1="0" y1="0" x2="1" y2="0"><stop offset="0" stop-color="#000d99"/><stop offset="0.19" stop-color="#000599"/><stop offset="1" stop-color="#880099"/></linearGradient><linearGradient id="g254" x1="0" y1="0" x2="1" y2="0"><stop offset="0" stop-color="#000c99"/><stop offset="0.19" stop-color="#000499"/><stop offset="1" stop-color="#860099"/></linearGradient><linearGradient id="g255" x1="0" y1="0" x2="1" y2="0"><stop offset="0" stop-color="#000c99"/><stop offset="0.19" stop-color="#000499"/><stop offset="1" stop-color="#840099"/></linearGradient><linearGradient id="g256" x1="0" y1="0" x2="1" y2="0"><stop offset="0" stop-color="#000c99"/><stop offset="0.19" stop-color="#010499"/><stop offset="1" stop-color="#820099"/></linearGradient><linearGradient id="g257" x1="0" y1="0" x2="1" y2="0"><stop offset="0" stop-color="#000b99"/><stop offset="0.19" stop-color="#010399"/><stop offset="1" stop-color="#800099"/></linearGradient><linearGradient id="g258" x1="0" y1="0" x2="1" y2="0"><stop offset="0" stop-color="#000b99"/><stop offset="0.19" stop-color="#010399"/><stop offset="1" stop-color="#7f0099"/></linearGradient><linearGradient id="g259" x1="0" y1="0" x2="1" y2="0"><stop offset="0" stop-color="#000a99"/><stop offset="0.19" stop-color="#010399"/><stop offset="1" stop-color="#7d0099"/></linearGradient><linearGradient id="g260" x1="0" y1="0" x2="1" y2="0"><stop offset="0" stop-color="#000a99"/><stop offset="0.19" stop-color="#010299"/><stop offset="1" stop-color="#7b0099"/></linearGradient><linearGradient id="g261" x1="0" y1="0" x2="1" y2="0"><stop offset="0" stop-color="#000999"/><stop offset="0.19" stop-color="#010299"/><stop offset="1" stop-color="#7a0099"/></linearGradient><linearGradient id="g262" x1="0" y1="0" x2="1" y2="0"><stop offset="0" stop-color="#000999"/><stop offset="0.19" stop-color="#020299"/><stop offset="1" stop-color="#780099"/></linearGradient><linearGradient id="g263" x1="0" y1="0" x2="1" y2="0"><stop offset="0" stop-color="#000999"/><stop offset="0.19" stop-color="#020199"/><stop offset="1" stop-color="#770099"/></linearGradient><linearGradient id="g264" x1="0" y1="0" x2="1" y2="0"><stop offset="0" stop-color="#000899"/><stop offset="0.19" stop-color="#020199"/><stop offset="1" stop-color="#750099"/></linearGradient><linearGradient id="g265" x1="0" y1="0" x2="1" y2="0"><stop offset="0" stop-color="#000899"/><stop offset="0.19" stop-color="#020199"/><stop offset="1" stop-color="#730099"/></linearGradient><linearGradient id="g266" x1="0" y1="0" x2="1" y2="0"><stop offset="0" stop-color="#000799"/><stop offset="0.19" stop-color="#020099"/><stop offset="1" stop-color="#720099"/></linearGradient><linearGradient id="g267" x1="0" y1="0" x2="1" y2="0"><stop offset="0" stop-color="#000799"/><stop offset="0.17" stop-color="#000199"/><stop offset="1" stop-color="#700099"/></linearGradient><linearGradient id="g268" x1="0" y1="0" x2="1" y2="0"><stop offset="0" stop-color="#000799"/><stop offset="0.17" stop-color="#000099"/><stop offset="1" stop-color="#6f0099"/></linearGradient><linearGradient id="g269" x1="0" y1="0" x2="1" y2="0"><stop offset="0" stop-color="#000699"/><stop offset="0.17" stop-color="#000099"/><stop offset="1" stop-color="#6d0099"/></linearGradient><linearGradient id="g270" x1="0" y1="0" x2="1" y2="0"><stop offset="0" stop-color="#000699"/><stop offset="0.17" stop-color="#000099"/><stop offset="1" stop-color="#6c0099"/></linearGradient><linearGradient id="g271" x1="0" y1="0" x2="1" y2="0"><stop offset="0" stop-color="#000599"/><stop offset="0.17" stop-color="#010099"/><stop offset="1" stop-color="#6a0099"/></linearGradient><linearGradient id="g272" x1="0" y1="0" x2="1" y2="0"><stop offset="0" stop-color="#000599"/><stop offset="0.17" stop-color="#010099"/><stop offset="1" stop-color="#690099"/></linearGradient><linearGradient id="g273" x1="0" y1="0" x2="1" y2="0"><stop offset="0" stop-color="#000599"/><stop offset="0.17" stop-color="#010099"/><stop offset="1" stop-color="#670099"/></linearGradient><linearGradient id="g274" x1="0" y1="0" x2="1" y2="0"><stop offset="0" stop-color="#000499"/><stop offset="0.17" stop-color="#010099"/><stop offset="1" stop-color="#660099"/></linearGradient><linearGradient id="g275" x1="0" y1="0" x2="1" y2="0"><stop offset="0" stop-color="#000499"/><stop offset="0.17" stop-color="#020099"/><stop offset="1" stop-color="#640099"/></linearGradient><linearGradient id="g276" x1="0" y1="0" x2="1" y2="0"><stop offset="0" stop-color="#000399"/><stop offset="0.17" stop-color="#020099"/><stop offset="1" stop-color="#630099"/></linearGradient><linearGradient id="g277" x1="0" y1="0" x2="1" y2="0"><stop offset="0" stop-color="#000399"/><stop offset="0.17" stop-color="#020099"/><stop offset="1" stop-color="#620099"/></linearGradient><linearGradient id="g278" x1="0" y1="0" x2="1" y2="0"><stop offset="0" stop-color="#000399"/><stop offset="0.15" stop-color="#000099"/><stop offset="1" stop-color="#600099"/></linearGradient><linearGradient id="g279" x1="0" y1="0" x2="1" y2="0"><stop offset="0" stop-color="#000299"/><stop offset="0.15" stop-color="#000099"/><stop offset="1" stop-color="#5f0099"/></linearGradient><linearGradient id="g280" x1="0" y1="0" x2="1" y2="0"><stop offset="0" stop-color="#000299"/><stop offset="0.15" stop-color="#000099"/><stop offset="1" stop-color="#5e0099"/></linearGradient><linearGradient id="g281" x1="0" y1="0" x2="1" y2="0"><stop offset="0" stop-color="#000199"/><stop offset="0.15" stop-color="#010099"/><stop offset="1" stop-color="#5c0099"/></linearGradient><linearGradient id="g282" x1="0" y1="0" x2="1" y2="0"><stop offset="0" stop-color="#000199"/><stop offset="0.15" stop-color="#010099"/><stop offset="1" stop-color="#5b0099"/></linearGradient><linearGradient id="g283" x1="0" y1="0" x2="1" y2="0"><stop offset="0" stop-color="#000199"/><stop offset="0.15" stop-color="#010099"/><stop offset="1" stop-color="#5a0099"/></linearGradient><linearGradient id="g284" x1="0" y1="0" x2="1" y2="0"><stop offset="0" stop-color="#000099"/><stop offset="0.15" stop-color="#020099"/><stop offset="1" stop-color="#580099"/></linearGradient><linearGradient id="g285" x1="0" y1="0" x2="1" y2="0"><stop offset="0" stop-color="#000099"/><stop offset="0.13" stop-color="#000099"/><stop offset="1" stop-color="#570099"/></linearGradient><linearGradient id="g286" x1="0" y1="0" x2="1" y2="0"><stop offset="0" stop-color="#000099"/><stop offset="0.13" stop-color="#000099"/><stop offset="1" stop-color="#560099"/></linearGradient><linearGradient id="g287" x1="0" y1="0" x2="1" y2="0"><stop offset="0" stop-color="#000099"/><stop offset="0.13" stop-color="#000099"/><stop offset="1" stop-color="#550099"/></linearGradient><linearGradient id="g288" x1="0" y1="0" x2="1" y2="0"><stop offset="0" stop-color="#000099"/><stop offset="0.13" stop-color="#010099"/><stop offset="1" stop-color="#530099"/></linearGradient><linearGradient id="g289" x1="0" y1="0" x2="1" y2="0"><stop offset="0" stop-color="#000099"/><stop offset="0.13" stop-color="#010099"/><stop offset="1" stop-color="#520099"/></linearGradient><linearGradient id="g290" x1="0" y1="0" x2="1" y2="0"><stop offset="0" stop-color="#000099"/><stop offset="0.13" stop-color="#010099"/><stop offset="1" stop-color="#510099"/></linearGradient><linearGradient id="g291" x1="0" y1="0" x2="1" y2="0"><stop offset="0" stop-color="#000099"/><stop offset="0.11" stop-color="#000099"/><stop offset="1" stop-color="#500099"/></linearGradient><linearGradient id="g292" x1="0" y1="0" x2="1" y2="0"><stop offset="0" stop-color="#000099"/><stop offset="0.11" stop-color="#000099"/><stop offset="1" stop-color="#4e0099"/></linearGradient><linearGradient id="g293" x1="0" y1="0" x2="1" y2="0"><stop offset="0" stop-color="#000099"/><stop offset="0.11" stop-color="#010099"/><stop offset="1" stop-color="#4d0099"/></linearGradient><linearGradient id="g294" x1="0" y1="0" x2="1" y2="0"><stop offset="0" stop-color="#000099"/><stop offset="0.11" stop-color="#010099"/><stop offset="1" stop-color="#4c0099"/></linearGradient><linearGradient id="g295" x1="0" y1="0" x2="1" y2="0"><stop offset="0" stop-color="#000099"/><stop offset="0.11" stop-color="#010099"/><stop offset="1" stop-color="#4b0099"/></linearGradient><linearGradient id="g296" x1="0" y1="0" x2="1" y2="0"><stop offset="0" stop-color="#000099"/><stop offset="0.09" stop-color="#000099"/><stop offset="1" stop-color="#4a0099"/></linearGradient><linearGradient id="g297" x1="0" y1="0" x2="1" y2="0"><stop offset="0" stop-color="#000099"/><stop offset="0.09" stop-color="#000099"/><stop offset="1" stop-color="#490099"/></linearGradient><linearGradient id="g298" x1="0" y1="0" x2="1" y2="0"><stop offset="0" stop-color="#000099"/><stop offset="0.09" stop-color="#010099"/><stop offset="1" stop-color="#470099"/></linearGradient><linearGradient id="g299" x1="0" y1="0" x2="1" y2="0"><stop offset="0" stop-color="#000099"/><stop offset="0.09" stop-color="#010099"/><stop offset="1" stop-color="#460099"/></linearGradient><linearGradient id="g300" x1="0" y1="0" x2="1" y2="0"><stop offset="0" stop-color="#000099"/><stop offset="0.06" stop-color="#000099"/><stop offset="1" stop-color="#450099"/></linearGradient><linearGradient id="g301" x1="0" y1="0" x2="1" y2="0"><stop offset="0" stop-color="#000099"/><stop offset="1" stop-color="#440099"/></linearGradient><linearGradient id="g302" x1="0" y1="0" x2="1" y2="0"><stop offset="0" stop-color="#000099"/><stop offset="1" stop-color="#430099"/></linearGradient><linearGradient id="g303" x1="0" y1="0" x2="1" y2="0"><stop offset="0" stop-color="#000099"/><stop offset="1" stop-color="#420099"/></linearGradient><linearGradient id="g304" x1="0" y1="0" x2="1" y2="0"><stop offset="0" stop-color="#000099"/><stop offset="1" stop-color="#410099"/></linearGradient><linearGradient id="g305" x1="0" y1="0" x2="1" y2="0"><stop offset="0" stop-color="#000099"/><stop offset="1" stop-color="#400099"/></linearGradient><linearGradient id="g306" x1="0" y1="0" x2="1" y2="0"><stop offset="0" stop-color="#000099"/><stop offset="1" stop-color="#3f0099"/></linearGradient><linearGradient id="g307" x1="0" y1="0" x2="1" y2="0"><stop offset="0" stop-color="#000099"/><stop offset="1" stop-color="#3e0099"/></linearGradient><linearGradient id="g308" x1="0" y1="0" x2="1" y2="0"><stop offset="0" stop-color="#000099"/><stop offset="1" stop-color="#3d0099"/></linearGradient><linearGradient id="g309" x1="0" y1="0" x2="1" y2="0"><stop offset="0" stop-color="#010099"/><stop offset="1" stop-color="#3c0099"/></linearGradient><linearGradient id="g310" x1="0" y1="0" x2="1" y2="0"><stop offset="0" stop-color="#010099"/><stop offset="1" stop-color="#3b0099"/></linearGradient><linearGradient id="g311" x1="0" y1="0" x2="1" y2="0"><stop offset="0" stop-color="#020099"/><stop offset="1" stop-color="#3a0099"/></linearGradient><linearGradient id="g312" x1="0" y1="0" x2="1" y2="0"><stop offset="0" stop-color="#020099"/><stop offset="1" stop-color="#390099"/></linearGradient><linearGradient id="g313" x1="0" y1="0" x2="1" y2="0"><stop offset="0" stop-color="#030099"/><stop offset="1" stop-color="#380099"/></linearGradient><linearGradient id="g314" x1="0" y1="0" x2="1" y2="0"><stop offset="0" stop-color="#040099"/><stop offset="1" stop-color="#370099"/></linearGradient><linearGradient id="g315" x1="0" y1="0" x2="1" y2="0"><stop offset="0" stop-color="#040099"/><stop offset="1" stop-color="#360099"/></linearGradient><linearGradient id="g316" x1="0" y1="0" x2="1" y2="0"><stop offset="0" stop-color="#050099"/><stop offset="1" stop-color="#350099"/></linearGradient><linearGradient id="g317" x1="0" y1="0" x2="1" y2="0"><stop offset="0" stop-color="#050099"/><stop offset="1" stop-color="#340099"/></linearGradient><linearGradient id="g318" x1="0" y1="0" x2="1" y2="0"><stop offset="0" stop-color="#060099"/><stop offset="1" stop-color="#330099"/></linearGradient><linearGradient id="g319" x1="0" y1="0" x2="1" y2="0"><stop offset="0" stop-color="#070099"/><stop offset="1" stop-color="#320099"/></linearGradient><linearGradient id="g320" x1="0" y1="0" x2="1" y2="0"><stop offset="0" stop-color="#070099"/><stop offset="1" stop-color="#310099"/></linearGradient><linearGradient id="g321" x1="0" y1="0" x2="1" y2="0"><stop offset="0" stop-color="#080099"/><stop offset="1" stop-color="#300099"/></linearGradient><linearGradient id="g322" x1="0" y1="0" x2="1" y2="0"><stop offset="0" stop-color="#080099"/><stop offset="1" stop-color="#2f0099"/></linearGradient><linearGradient id="g323" x1="0" y1="0" x2="1" y2="0"><stop offset="0" stop-color="#090099"/><stop offset="1" stop-color="#2e0099"/></linearGradient><linearGradient id="g324" x1="0" y1="0" x2="1" y2="0"><stop offset="0" stop-color="#0a0099"/><stop offset="1" stop-color="#2d0099"/></linearGradient><linearGradient id="g325" x1="0" y1="0" x2="1" y2="0"><stop offset="0" stop-color="#0a0099"/><stop offset="1" stop-color="#2c0099"/></linearGradient><linearGradient id="g326" x1="0" y1="0" x2="1" y2="0"><stop offset="0" stop-color="#0b0099"/><stop offset="1" stop-color="#2c0099"/></linearGradient><linearGradient id="g327" x1="0" y1="0" x2="1" y2="0"><stop offset="0" stop-color="#0b0099"/><stop offset="1" stop-color="#2b0099"/></linearGradient><linearGradient id="g328" x1="0" y1="0" x2="1" y2="0"><stop offset="0" stop-color="#0c0099"/><stop offset="1" stop-color="#2a0099"/></linearGradient><linearGradient id="g329" x1="0" y1="0" x2="1" y2="0"><stop offset="0" stop-color="#0d0099"/><stop offset="1" stop-color="#290099"/></linearGradient><linearGradient id="g330" x1="0" y1="0" x2="1" y2="0"><stop offset="0" stop-color="#0d0099"/><stop offset="1" stop-color="#280099"/></linearGradient><linearGradient id="g331" x1="0" y1="0" x2="1" y2="0"><stop offset="0" stop-color="#0e0099"/><stop offset="1" stop-color="#270099"/></linearGradient><linearGradient id="g332" x1="0" y1="0" x2="1" y2="0"><stop offset="0" stop-color="#0e0099"/><stop offset="1" stop-color="#260099"/></linearGradient><linearGradient id="g333" x1="0" y1="0" x2="1" y2="0"><stop offset="0" stop-color="#0f0099"/><stop offset="1" stop-color="#260099"/></linearGradient><linearGradient id="g334" x1="0" y1="0" x2="1" y2="0"><stop offset="0" stop-color="#100099"/><stop offset="1" stop-color="#250099"/></linearGradient><linearGradient id="g335" x1="0" y1="0" x2="1" y2="0"><stop offset="0" stop-color="#100099"/><stop offset="1" stop-color="#240099"/></linearGradient><linearGradient id="g336" x1="0" y1="0" x2="1" y2="0"><stop offset="0" stop-color="#110099"/><stop offset="1" stop-color="#230099"/></linearGradient><linearGradient id="g337" x1="0" y1="0" x2="1" y2="0"><stop offset="0" stop-color="#110099"/><stop offset="1" stop-color="#220099"/></linearGradient><linearGradient id="g338" x1="0" y1="0" x2="1" y2="0"><stop offset="0" stop-color="#120099"/><stop offset="1" stop-color="#220099"/></linearGradient><linearGradient id="g339" x1="0" y1="0" x2="1" y2="0"><stop offset="0" stop-color="#120099"/><stop offset="1" stop-color="#210099"/></linearGradient><linearGradient id="g340" x1="0" y1="0" x2="1" y2="0"><stop offset="0" stop-color="#130099"/><stop offset="1" stop-color="#200099"/></linearGradient><linearGradient id="g341" x1="0" y1="0" x2="1" y2="0"><stop offset="0" stop-color="#130099"/><stop offset="1" stop-color="#1f0099"/></linearGradient><linearGradient id="g342" x1="0" y1="0" x2="1" y2="0"><stop offset="0" stop-color="#140099"/><stop offset="1" stop-color="#1e0099"/></linearGradient><linearGradient id="g343" x1="0" y1="0" x2="1" y2="0"><stop offset="0" stop-color="#140099"/><stop offset="1" stop-color="#1e0099"/></linearGradient><linearGradient id="g344" x1="0" y1="0" x2="1" y2="0"><stop offset="0" stop-color="#150099"/><stop offset="1" stop-color="#1d0099"/></linearGradient><linearGradient id="g345" x1="0" y1="0" x2="1" y2="0"><stop offset="0" stop-color="#160099"/><stop offset="1" stop-color="#1c0099"/></linearGradient><linearGradient id="g346" x1="0" y1="0" x2="1" y2="0"><stop offset="0" stop-color="#160099"/><stop offset="1" stop-color="#1b0099"/></linearGradient><linearGradient id="g347" x1="0" y1="0" x2="1" y2="0"><stop offset="0" stop-color="#170099"/><stop offset="1" stop-color="#1b0099"/></linearGradient><linearGradient id="g348" x1="0" y1="0" x2="1" y2="0"><stop offset="0" stop-color="#00ff02"/><stop offset="0.13" stop-color="#00ff01"/><stop offset="1" stop-color="#28ff00"/></linearGradient><linearGradient id="g349" x1="0" y1="0" x2="1" y2="0"><stop offset="0" stop-color="#00ff05"/><stop offset="0.06" stop-color="#00ff05"/><stop offset="0.17" stop-color="#08ff04"/><stop offset="1" stop-color="#53ff00"/></linearGradient><linearGradient id="g350" x1="0" y1="0" x2="1" y2="0"><stop offset="0" stop-color="#00ff08"/><stop offset="0.06" stop-color="#02ff08"/><stop offset="0.36" stop-color="#27ff05"/><stop offset="1" stop-color="#82ff00"/></linearGradient><linearGradient id="g351" x1="0" y1="0" x2="1" y2="0"><stop offset="0" stop-color="#00ff0b"/><stop offset="0.04" stop-color="#01ff0b"/><stop offset="0.45" stop-color="#46ff06"/><stop offset="0.72" stop-color="#7bff02"/><stop offset="1" stop-color="#b7ff00"/></linearGradient><linearGradient id="g352" x1="0" y1="0" x2="1" y2="0"><stop offset="0" stop-color="#00ff0f"/><stop offset="0.04" stop-color="#03ff0e"/><stop offset="0.13" stop-color="#14ff0d"/><stop offset="0.49" stop-color="#64ff07"/><stop offset="0.74" stop-color="#a6ff03"/><stop offset="1" stop-color="#f2ff00"/></linearGradient><linearGradient id="g353" x1="0" y1="0" x2="1" y2="0"><stop offset="0" stop-color="#00ff12"/><stop offset="0.02" stop-color="#00ff12"/><stop offset="0.11" stop-color="#14ff10"/><stop offset="0.4" stop-color="#63ff0b"/><stop offset="0.64" stop-color="#acff06"/><stop offset="0.85" stop-color="#f8ff01"/><stop offset="0.87" stop-color="#fffe01"/><stop offset="1" stop-color="#ffd300"/></linearGradient><linearGradient id="g354" x1="0" y1="0" x2="1" y2="0"><stop offset="0" stop-color="#00ff16"/><stop offset="0.02" stop-color="#00ff15"/><stop offset="0.11" stop-color="#18ff14"/><stop offset="0.36" stop-color="#68ff0f"/><stop offset="0.55" stop-color="#aeff0a"/><stop offset="0.74" stop-color="#ffff05"/><stop offset="0.87" stop-color="#ffce01"/><stop offset="1" stop-color="#ffa900"/></linearGradient><linearGradient id="g355" x1="0" y1="0" x2="1" y2="0"><stop offset="0" stop-color="#00ff19"/><stop offset="0.02" stop-color="#01ff19"/><stop offset="0.09" stop-color="#15ff17"/><stop offset="0.3" stop-color="#61ff13"/><stop offset="0.47" stop-color="#a7ff0f"/><stop offset="0.64" stop-color="#f9ff0a"/><stop offset="0.66" stop-color="#fffa09"/><stop offset="0.72" stop-color="#ffdd06"/><stop offset="0.81" stop-color="#ffbd03"/><stop offset="1" stop-color="#ff8a00"/></linearGradient><linearGradient id="g356" x1="0" y1="0" x2="1" y2="0"><stop offset="0" stop-color="#00ff1c"/><stop offset="0.02" stop-color="#02ff1c"/><stop offset="0.09" stop-color="#19ff1b"/><stop offset="0.28" stop-color="#66ff16"/><stop offset="0.43" stop-color="#adff13"/><stop offset="0.57" stop-color="#fdff0e"/><stop offset="0.66" stop-color="#ffd509"/><stop offset="0.77" stop-color="#ffac05"/><stop offset="0.87" stop-color="#ff8e01"/><stop offset="1" stop-color="#ff7200"/></linearGradient><linearGradient id="g357" x1="0" y1="0" x2="1" y2="0"><stop offset="0" stop-color="#00ff20"/><stop offset="0.02" stop-color="#03ff1f"/><stop offset="0.06" stop-color="#14ff1f"/><stop offset="0.26" stop-color="#6aff1a"/><stop offset="0.38" stop-color="#adff17"/><stop offset="0.51" stop-color="#faff13"/><stop offset="0.53" stop-color="#fff611"/><stop offset="0.62" stop-color="#ffc90c"/><stop offset="0.72" stop-color="#ffa007"/><stop offset="0.85" stop-color="#ff7c02"/><stop offset="1" stop-color="#ff5e00"/></linearGradient><linearGradient id="g358" x1="0" y1="0" x2="1" y2="0"><stop offset="0" stop-color="#00ff23"/><stop offset="0.02" stop-color="#03ff23"/><stop offset="0.06" stop-color="#16ff22"/><stop offset="0.23" stop-color="#6bff1e"/><stop offset="0.36" stop-color="#b6ff1a"/><stop offset="0.47" stop-color="#feff17"/><stop offset="0.57" stop-color="#ffc20f"/><stop offset="0.68" stop-color="#ff9709"/><stop offset="0.83" stop-color="#ff6e03"/><stop offset="1" stop-color="#ff4e00"/></linearGradient><linearGradient id="g359" x1="0" y1="0" x2="1" y2="0"><stop offset="0" stop-color="#00ff27"/><stop offset="0.02" stop-color="#04ff26"/><stop offset="0.06" stop-color="#19ff26"/><stop offset="0.21" stop-color="#6bff22"/><stop offset="0.32" stop-color="#afff1f"/><stop offset="0.43" stop-color="#fcff1c"/><stop offset="0.53" stop-color="#ffbe12"/><stop offset="0.66" stop-color="#ff8a0a"/><stop offset="0.81" stop-color="#ff6204"/><stop offset="1" stop-color="#ff4100"/></linearGradient><linearGradient id="g360" x1="0" y1="0" x2="1" y2="0"><stop offset="0" stop-color="#00ff2a"/><stop offset="0.02" stop-color="#05ff2a"/><stop offset="0.04" stop-color="#10ff2a"/><stop offset="0.17" stop-color="#5aff27"/><stop offset="0.28" stop-color="#a2ff24"/><stop offset="0.38" stop-color="#f5ff21"/><stop offset="0.4" stop-color="#fff71f"/><stop offset="0.45" stop-color="#ffd81a"/><stop offset="0.51" stop-color="#ffb314"/><stop offset="0.64" stop-color="#ff7f0b"/><stop offset="0.81" stop-color="#ff5404"/><stop offset="1" stop-color="#ff3600"/></linearGradient><linearGradient id="g361" x1="0" y1="0" x2="1" y2="0"><stop offset="0" stop-color="#00ff2e"/><stop offset="0.02" stop-color="#06ff2e"/><stop offset="0.04" stop-color="#12ff2d"/><stop offset="0.17" stop-color="#63ff2a"/><stop offset="0.28" stop-color="#b3ff28"/><stop offset="0.36" stop-color="#fcff25"/><stop offset="0.43" stop-color="#ffcf1c"/><stop offset="0.47" stop-color="#ffb518"/><stop offset="0.53" stop-color="#ff9612"/><stop offset="0.6" stop-color="#ff7d0e"/><stop offset="0.77" stop-color="#ff5106"/><stop offset="1" stop-color="#ff2c00"/></linearGradient><linearGradient id="g362" x1="0" y1="0" x2="1" y2="0"><stop offset="0" stop-color="#00ff32"/><stop offset="0.02" stop-color="#07ff31"/><stop offset="0.04" stop-color="#14ff31"/><stop offset="0.17" stop-color="#6cff2e"/><stop offset="0.26" stop-color="#b1ff2c"/><stop offset="0.34" stop-color="#fffe29"/><stop offset="0.38" stop-color="#ffd922"/><stop offset="0.45" stop-color="#ffae1a"/><stop offset="0.51" stop-color="#ff8f14"/><stop offset="0.57" stop-color="#ff760f"/><stop offset="0.66" stop-color="#ff5d0a"/><stop offset="0.77" stop-color="#ff4606"/><stop offset="1" stop-color="#ff2400"/></linearGradient><linearGradient id="g363" x1="0" y1="0" x2="1" y2="0"><stop offset="0" stop-color="#00ff35"/><stop offset="0.02" stop-color="#08ff35"/><stop offset="0.04" stop-color="#16ff35"/><stop offset="0.15" stop-color="#64ff33"/><stop offset="0.23" stop-color="#adff31"/><stop offset="0.32" stop-color="#fffd2e"/><stop offset="0.36" stop-color="#ffd526"/><stop offset="0.43" stop-color="#ffa91d"/><stop offset="0.49" stop-color="#ff8916"/><stop offset="0.55" stop-color="#ff7011"/><stop offset="0.64" stop-color="#ff570b"/><stop offset="0.74" stop-color="#ff4007"/><stop offset="1" stop-color="#ff1c00"/></linearGradient><linearGradient id="g364" x1="0" y1="0" x2="1" y2="0"><stop offset="0" stop-color="#00ff39"/><stop offset="0.02" stop-color="#09ff39"/><stop offset="0.04" stop-color="#18ff38"/><stop offset="0.15" stop-color="#6cff37"/><stop offset="0.21" stop-color="#a6ff35"/><stop offset="0.3" stop-color="#fffe33"/><stop offset="0.34" stop-color="#ffd42a"/><stop offset="0.4" stop-color="#ffa61f"/><stop offset="0.47" stop-color="#ff8518"/><stop offset="0.55" stop-color="#ff6411"/><stop offset="0.64" stop-color="#ff4d0b"/><stop offset="0.74" stop-color="#ff3707"/><stop offset="1" stop-color="#ff1600"/></linearGradient><linearGradient id="g365" x1="0" y1="0" x2="1" y2="0"><stop offset="0" stop-color="#00ff3d"/><stop offset="0.02" stop-color="#0aff3d"/><stop offset="0.13" stop-color="#61ff3b"/><stop offset="0.21" stop-color="#b4ff39"/><stop offset="0.28" stop-color="#fcff38"/><stop offset="0.34" stop-color="#ffc32a"/><stop offset="0.38" stop-color="#ffa422"/><stop offset="0.45" stop-color="#ff821a"/><stop offset="0.53" stop-color="#ff6112"/><stop offset="0.62" stop-color="#ff490d"/><stop offset="0.72" stop-color="#ff3307"/><stop offset="1" stop-color="#ff1000"/></linearGradient><linearGradient id="g366" x1="0" y1="0" x2="1" y2="0"><stop offset="0" stop-color="#00ff41"/><stop offset="0.02" stop-color="#0bff40"/><stop offset="0.04" stop-color="#1cff40"/><stop offset="0.13" stop-color="#68ff3f"/><stop offset="0.19" stop-color="#a9ff3e"/><stop offset="0.26" stop-color="#f5ff3d"/><stop offset="0.28" stop-color="#ffef39"/><stop offset="0.32" stop-color="#ffc42e"/><stop offset="0.38" stop-color="#ff9623"/><stop offset="0.45" stop-color="#ff761a"/><stop offset="0.53" stop-color="#ff5712"/><stop offset="0.62" stop-color="#ff400d"/><stop offset="0.72" stop-color="#ff2c08"/><stop offset="1" stop-color="#ff0b00"/></linearGradient><linearGradient id="g367" x1="0" y1="0" x2="1" y2="0"><stop offset="0" stop-color="#00ff45"/><stop offset="0.02" stop-color="#0bff44"/><stop offset="0.11" stop-color="#59ff44"/><stop offset="0.17" stop-color="#9dff43"/><stop offset="0.23" stop-color="#ebff42"/><stop offset="0.26" stop-color="#fff740"/><stop offset="0.3" stop-color="#ffc833"/><stop offset="0.36" stop-color="#ff9726"/><stop offset="0.43" stop-color="#ff741d"/><stop offset="0.51" stop-color="#ff5414"/><stop offset="0.62" stop-color="#ff390d"/><stop offset="0.72" stop-color="#ff2508"/><stop offset="1" stop-color="#ff0600"/></linearGradient><linearGradient id="g368" x1="0" y1="0" x2="1" y2="0"><stop offset="0" stop-color="#00ff48"/><stop offset="0.02" stop-color="#0cff48"/><stop offset="0.11" stop-color="#5fff48"/><stop offset="0.17" stop-color="#a7ff47"/><stop offset="0.23" stop-color="#fcff47"/><stop offset="0.28" stop-color="#ffce39"/><stop offset="0.34" stop-color="#ff982a"/><stop offset="0.4" stop-color="#ff7420"/><stop offset="0.49" stop-color="#ff5316"/><stop offset="0.6" stop-color="#ff360e"/><stop offset="0.7" stop-color="#ff2309"/><stop offset="1" stop-color="#ff0200"/></linearGradient><linearGradient id="g369" x1="0" y1="0" x2="1" y2="0"><stop offset="0" stop-color="#00ff4c"/><stop offset="0.02" stop-color="#0dff4c"/><stop offset="0.11" stop-color="#63ff4c"/><stop offset="0.17" stop-color="#afff4c"/><stop offset="0.21" stop-color="#e8ff4c"/><stop offset="0.23" stop-color="#fff74a"/><stop offset="0.28" stop-color="#ffc43a"/><stop offset="0.34" stop-color="#ff912b"/><stop offset="0.4" stop-color="#ff6e21"/><stop offset="0.49" stop-color="#ff4d17"/><stop offset="0.6" stop-color="#ff320f"/><stop offset="0.7" stop-color="#ff1f09"/><stop offset="1" stop-color="#ff0000"/></linearGradient><linearGradient id="g370" x1="0" y1="0" x2="1" y2="0"><stop offset="0" stop-color="#00ff50"/><stop offset="0.02" stop-color="#0dff50"/><stop offset="0.11" stop-color="#63ff51"/><stop offset="0.17" stop-color="#b0ff51"/><stop offset="0.21" stop-color="#eaff51"/><stop offset="0.23" stop-color="#fff54e"/><stop offset="0.28" stop-color="#ffc33e"/><stop offset="0.34" stop-color="#ff902e"/><stop offset="0.4" stop-color="#ff6d23"/><stop offset="0.49" stop-color="#ff4d19"/><stop offset="0.6" stop-color="#ff3111"/><stop offset="0.7" stop-color="#ff1f0b"/><stop offset="0.85" stop-color="#ff0c05"/><stop offset="1" stop-color="#ff0001"/></linearGradient><linearGradient id="g371" x1="0" y1="0" x2="1" y2="0"><stop offset="0" stop-color="#00ff54"/><stop offset="0.02" stop-color="#0dff54"/><stop offset="0.11" stop-color="#63ff55"/><stop offset="0.17" stop-color="#b0ff56"/><stop offset="0.21" stop-color="#eaff56"/><stop offset="0.23" stop-color="#fff553"/><stop offset="0.28" stop-color="#ffc343"/><stop offset="0.34" stop-color="#ff9032"/><stop offset="0.4" stop-color="#ff6d26"/><stop offset="0.49" stop-color="#ff4d1b"/><stop offset="0.6" stop-color="#ff3112"/><stop offset="0.7" stop-color="#ff1f0c"/><stop offset="0.85" stop-color="#ff0c06"/><stop offset="1" stop-color="#ff0002"/></linearGradient><linearGradient id="g372" x1="0" y1="0" x2="1" y2="0"><stop offset="0" stop-color="#00ff58"/><stop offset="0.02" stop-color="#0dff58"/><stop offset="0.11" stop-color="#63ff5a"/><stop offset="0.17" stop-color="#b0ff5b"/><stop offset="0.21" stop-color="#eaff5b"/><stop offset="0.23" stop-color="#fff558"/><stop offset="0.28" stop-color="#ffc347"/><stop offset="0.34" stop-color="#ff9035"/><stop offset="0.4" stop-color="#ff6d29"/><stop offset="0.49" stop-color="#ff4d1e"/><stop offset="0.6" stop-color="#ff3114"/><stop offset="0.7" stop-color="#ff1f0e"/><stop offset="0.85" stop-color="#ff0c08"/><stop offset="1" stop-color="#ff0003"/></linearGradient><linearGradient id="g373" x1="0" y1="0" x2="1" y2="0"><stop offset="0" stop-color="#00ff5c"/><stop offset="0.02" stop-color="#0dff5d"/><stop offset="0.11" stop-color="#63ff5e"/><stop offset="0.17" stop-color="#b0ff5f"/><stop offset="0.21" stop-color="#eaff60"/><stop offset="0.23" stop-color="#fff55d"/><stop offset="0.28" stop-color="#ffc34b"/><stop offset="0.34" stop-color="#ff9039"/><stop offset="0.4" stop-color="#ff6d2c"/><stop offset="0.49" stop-color="#ff4d20"/><stop offset="0.6" stop-color="#ff3116"/><stop offset="0.7" stop-color="#ff1f10"/><stop offset="0.85" stop-color="#ff0c09"/><stop offset="1" stop-color="#ff0004"/></linearGradient><linearGradient id="g374" x1="0" y1="0" x2="1" y2="0"><stop offset="0" stop-color="#00ff60"/><stop offset="0.02" stop-color="#0dff61"/><stop offset="0.11" stop-color="#63ff63"/><stop offset="0.17" stop-color="#b0ff64"/><stop offset="0.21" stop-color="#eaff66"/><stop offset="0.23" stop-color="#fff563"/><stop offset="0.28" stop-color="#ffc350"/><stop offset="0.34" stop-color="#ff903c"/><stop offset="0.4" stop-color="#ff6d2f"/><stop offset="0.49" stop-color="#ff4d23"/><stop offset="0.6" stop-color="#ff3118"/><stop offset="0.7" stop-color="#ff1f11"/><stop offset="0.85" stop-color="#ff0c0a"/><stop offset="1" stop-color="#ff0005"/></linearGradient><linearGradient id="g375" x1="0" y1="0" x2="1" y2="0"><stop offset="0" stop-color="#00ff65"/><stop offset="0.02" stop-color="#0dff65"/><stop offset="0.11" stop-color="#63ff67"/><stop offset="0.17" stop-color="#b0ff69"/><stop offset="0.21" stop-color="#eaff6b"/><stop offset="0.23" stop-color="#fff568"/><stop offset="0.28" stop-color="#ffc354"/><stop offset="0.34" stop-color="#ff9040"/><stop offset="0.4" stop-color="#ff6d32"/><stop offset="0.49" stop-color="#ff4d25"/><stop offset="0.6" stop-color="#ff311a"/><stop offset="0.7" stop-color="#ff1f13"/><stop offset="0.85" stop-color="#ff0c0c"/><stop offset="1" stop-color="#ff0007"/></linearGradient><linearGradient id="g376" x1="0" y1="0" x2="1" y2="0"><stop offset="0" stop-color="#00ff69"/><stop offset="0.02" stop-color="#0dff69"/><stop offset="0.11" stop-color="#63ff6c"/><stop offset="0.17" stop-color="#b0ff6f"/><stop offset="0.21" stop-color="#e9ff70"/><stop offset="0.23" stop-color="#fff66d"/><stop offset="0.28" stop-color="#ffc358"/><stop offset="0.34" stop-color="#ff9043"/><stop offset="0.4" stop-color="#ff6d35"/><stop offset="0.49" stop-color="#ff4d28"/><stop offset="0.6" stop-color="#ff311c"/><stop offset="0.7" stop-color="#ff1f15"/><stop offset="0.85" stop-color="#ff0c0d"/><stop offset="1" stop-color="#ff0008"/></linearGradient><linearGradient id="g377" x1="0" y1="0" x2="1" y2="0"><stop offset="0" stop-color="#00ff6d"/><stop offset="0.02" stop-color="#0dff6e"/><stop offset="0.11" stop-color="#63ff71"/><stop offset="0.17" stop-color="#b0ff74"/><stop offset="0.21" stop-color="#e9ff76"/><stop offset="0.23" stop-color="#fff672"/><stop offset="0.28" stop-color="#ffc35d"/><stop offset="0.34" stop-color="#ff9047"/><stop offset="0.4" stop-color="#ff6d38"/><stop offset="0.49" stop-color="#ff4d2a"/><stop offset="0.6" stop-color="#ff311e"/><stop offset="0.7" stop-color="#ff1f16"/><stop offset="0.85" stop-color="#ff0c0f"/><stop offset="1" stop-color="#ff0009"/></linearGradient><linearGradient id="g378" x1="0" y1="0" x2="1" y2="0"><stop offset="0" stop-color="#00ff71"/><stop offset="0.02" stop-color="#0dff72"/><stop offset="0.11" stop-color="#63ff76"/><stop offset="0.17" stop-color="#b0ff79"/><stop offset="0.21" stop-color="#e9ff7b"/><stop offset="0.23" stop-color="#fff678"/><stop offset="0.28" stop-color="#ffc361"/><stop offset="0.34" stop-color="#ff904b"/><stop offset="0.4" stop-color="#ff6d3b"/><stop offset="0.49" stop-color="#ff4d2d"/><stop offset="0.6" stop-color="#ff3121"/><stop offset="0.7" stop-color="#ff1f18"/><stop offset="0.85" stop-color="#ff0c10"/><stop offset="1" stop-color="#ff000a"/></linearGradient><linearGradient id="g379" x1="0" y1="0" x2="1" y2="0"><stop offset="0" stop-color="#00ff76"/><stop offset="0.02" stop-color="#0dff76"/><stop offset="0.11" stop-color="#63ff7a"/><stop offset="0.17" stop-color="#afff7e"/><stop offset="0.21" stop-color="#e9ff81"/><stop offset="0.23" stop-color="#fff67d"/><stop offset="0.28" stop-color="#ffc366"/><stop offset="0.34" stop-color="#ff904e"/><stop offset="0.4" stop-color="#ff6d3e"/><stop offset="0.49" stop-color="#ff4d2f"/><stop offset="0.6" stop-color="#ff3123"/><stop offset="0.7" stop-color="#ff1f1a"/><stop offset="0.85" stop-color="#ff0c11"/><stop offset="1" stop-color="#ff000c"/></linearGradient><linearGradient id="g380" x1="0" y1="0" x2="1" y2="0"><stop offset="0" stop-color="#00ff7a"/><stop offset="0.02" stop-color="#0dff7b"/><stop offset="0.11" stop-color="#63ff7f"/><stop offset="0.17" stop-color="#afff83"/><stop offset="0.21" stop-color="#e9ff86"/><stop offset="0.23" stop-color="#fff683"/><stop offset="0.28" stop-color="#ffc36b"/><stop offset="0.34" stop-color="#ff9052"/><stop offset="0.4" stop-color="#ff6d41"/><stop offset="0.49" stop-color="#ff4d32"/><stop offset="0.6" stop-color="#ff3125"/><stop offset="0.7" stop-color="#ff1f1c"/><stop offset="0.85" stop-color="#ff0c13"/><stop offset="1" stop-color="#ff000d"/></linearGradient><linearGradient id="g381" x1="0" y1="0" x2="1" y2="0"><stop offset="0" stop-color="#00ff7e"/><stop offset="0.02" stop-color="#0dff7f"/><stop offset="0.11" stop-color="#63ff84"/><stop offset="0.17" stop-color="#afff89"/><stop offset="0.21" stop-color="#e9ff8c"/><stop offset="0.23" stop-color="#fff688"/><stop offset="0.28" stop-color="#ffc36f"/><stop offset="0.34" stop-color="#ff9056"/><stop offset="0.4" stop-color="#ff6d44"/><stop offset="0.49" stop-color="#ff4d34"/><stop offset="0.6" stop-color="#ff3127"/><stop offset="0.7" stop-color="#ff1f1e"/><stop offset="0.85" stop-color="#ff0c14"/><stop offset="1" stop-color="#ff000e"/></linearGradient><linearGradient id="g382" x1="0" y1="0" x2="1" y2="0"><stop offset="0" stop-color="#00ff83"/><stop offset="0.02" stop-color="#0dff84"/><stop offset="0.11" stop-color="#63ff89"/><stop offset="0.17" stop-color="#afff8e"/><stop offset="0.21" stop-color="#e9ff92"/><stop offset="0.23" stop-color="#fff68e"/><stop offset="0.28" stop-color="#ffc374"/><stop offset="0.34" stop-color="#ff905a"/><stop offset="0.4" stop-color="#ff6d48"/><stop offset="0.49" stop-color="#ff4d37"/><stop offset="0.6" stop-color="#ff3129"/><stop offset="0.7" stop-color="#ff1f1f"/><stop offset="0.85" stop-color="#ff0c16"/><stop offset="1" stop-color="#ff000f"/></linearGradient><linearGradient id="g383" x1="0" y1="0" x2="1" y2="0"><stop offset="0" stop-color="#00ff87"/><stop offset="0.02" stop-color="#0dff89"/><stop offset="0.11" stop-color="#63ff8e"/><stop offset="0.17" stop-color="#afff93"/><stop offset="0.21" stop-color="#e9ff97"/><stop offset="0.23" stop-color="#fff694"/><stop offset="0.28" stop-color="#ffc379"/><stop offset="0.34" stop-color="#ff905d"/><stop offset="0.4" stop-color="#ff6d4b"/><stop offset="0.49" stop-color="#ff4d3a"/><stop offset="0.6" stop-color="#ff312b"/><stop offset="0.7" stop-color="#ff1f21"/><stop offset="0.85" stop-color="#ff0c17"/><stop offset="1" stop-color="#ff0011"/></linearGradient><linearGradient id="g384" x1="0" y1="0" x2="1" y2="0"><stop offset="0" stop-color="#00ff8c"/><stop offset="0.02" stop-color="#0dff8d"/><stop offset="0.11" stop-color="#63ff93"/><stop offset="0.17" stop-color="#afff99"/><stop offset="0.21" stop-color="#e9ff9d"/><stop offset="0.23" stop-color="#fff69a"/><stop offset="0.28" stop-color="#ffc37e"/><stop offset="0.34" stop-color="#ff9061"/><stop offset="0.4" stop-color="#ff6d4e"/><stop offset="0.49" stop-color="#ff4d3c"/><stop offset="0.6" stop-color="#ff312e"/><stop offset="0.7" stop-color="#ff1f23"/><stop offset="0.85" stop-color="#ff0c19"/><stop offset="1" stop-color="#ff0012"/></linearGradient><linearGradient id="g385" x1="0" y1="0" x2="1" y2="0"><stop offset="0" stop-color="#00ff91"/><stop offset="0.02" stop-color="#0dff92"/><stop offset="0.11" stop-color="#63ff99"/><stop offset="0.17" stop-color="#afff9f"/><stop offset="0.21" stop-color="#e9ffa3"/><stop offset="0.23" stop-color="#fff69f"/><stop offset="0.28" stop-color="#ffc383"/><stop offset="0.34" stop-color="#ff9065"/><stop offset="0.4" stop-color="#ff6d52"/><stop offset="0.49" stop-color="#ff4d3f"/><stop offset="0.6" stop-color="#ff3130"/><stop offset="0.7" stop-color="#ff1f25"/><stop offset="0.85" stop-color="#ff0c1b"/><stop offset="1" stop-color="#ff0013"/></linearGradient><linearGradient id="g386" x1="0" y1="0" x2="1" y2="0"><stop offset="0" stop-color="#00ff95"/><stop offset="0.02" stop-color="#0dff97"/><stop offset="0.11" stop-color="#63ff9e"/><stop offset="0.17" stop-color="#afffa4"/><stop offset="0.21" stop-color="#e9ffa9"/><stop offset="0.23" stop-color="#fff6a5"/><stop offset="0.28" stop-color="#ffc388"/><stop offset="0.34" stop-color="#ff9069"/><stop offset="0.4" stop-color="#ff6d55"/><stop offset="0.49" stop-color="#ff4d42"/><stop offset="0.6" stop-color="#ff3132"/><stop offset="0.7" stop-color="#ff1f27"/><stop offset="0.85" stop-color="#ff0c1c"/><stop offset="1" stop-color="#ff0015"/></linearGradient><linearGradient id="g387" x1="0" y1="0" x2="1" y2="0"><stop offset="0" stop-color="#00ff9a"/><stop offset="0.02" stop-color="#0dff9c"/><stop offset="0.11" stop-color="#63ffa3"/><stop offset="0.17" stop-color="#afffaa"/><stop offset="0.21" stop-color="#e9ffaf"/><stop offset="0.23" stop-color="#fff6ab"/><stop offset="0.28" stop-color="#ffc38d"/><stop offset="0.34" stop-color="#ff906d"/><stop offset="0.4" stop-color="#ff6d58"/><stop offset="0.49" stop-color="#ff4d45"/><stop offset="0.6" stop-color="#ff3134"/><stop offset="0.7" stop-color="#ff1f29"/><stop offset="0.85" stop-color="#ff0c1e"/><stop offset="1" stop-color="#ff0016"/></linearGradient><linearGradient id="g388" x1="0" y1="0" x2="1" y2="0"><stop offset="0" stop-color="#00ff9f"/><stop offset="0.02" stop-color="#0cffa0"/><stop offset="0.11" stop-color="#63ffa8"/><stop offset="0.17" stop-color="#afffb0"/><stop offset="0.21" stop-color="#e9ffb5"/><stop offset="0.23" stop-color="#fff6b1"/><stop offset="0.28" stop-color="#ffc392"/><stop offset="0.34" stop-color="#ff9072"/><stop offset="0.4" stop-color="#ff6d5c"/><stop offset="0.49" stop-color="#ff4d48"/><stop offset="0.6" stop-color="#ff3137"/><stop offset="0.7" stop-color="#ff1f2b"/><stop offset="0.85" stop-color="#ff0c1f"/><stop offset="1" stop-color="#ff0017"/></linearGradient><linearGradient id="g389" x1="0" y1="0" x2="1" y2="0"><stop offset="0" stop-color="#00ffa3"/><stop offset="0.02" stop-color="#0cffa5"/><stop offset="0.11" stop-color="#63ffae"/><stop offset="0.17" stop-color="#afffb5"/><stop offset="0.21" stop-color="#e9ffbb"/><stop offset="0.23" stop-color="#fff6b7"/><stop offset="0.28" stop-color="#ffc397"/><stop offset="0.34" stop-color="#ff9076"/><stop offset="0.4" stop-color="#ff6d5f"/><stop offset="0.49" stop-color="#ff4d4a"/><stop offset="0.6" stop-color="#ff3139"/><stop offset="0.7" stop-color="#ff1f2d"/><stop offset="0.85" stop-color="#ff0c21"/><stop offset="1" stop-color="#ff0019"/></linearGradient><linearGradient id="g390" x1="0" y1="0" x2="1" y2="0"><stop offset="0" stop-color="#00ffa8"/><stop offset="0.02" stop-color="#0cffaa"/><stop offset="0.11" stop-color="#63ffb3"/><stop offset="0.17" stop-color="#afffbb"/><stop offset="0.21" stop-color="#e9ffc1"/><stop offset="0.23" stop-color="#fff6be"/><stop offset="0.28" stop-color="#ffc39c"/><stop offset="0.34" stop-color="#ff907a"/><stop offset="0.4" stop-color="#ff6d63"/><stop offset="0.49" stop-color="#ff4d4d"/><stop offset="0.6" stop-color="#ff313b"/><stop offset="0.7" stop-color="#ff1f2f"/><stop offset="0.85" stop-color="#ff0c23"/><stop offset="1" stop-color="#ff001a"/></linearGradient><linearGradient id="g391" x1="0" y1="0" x2="1" y2="0"><stop offset="0" stop-color="#00ffad"/><stop offset="0.02" stop-color="#0cffaf"/><stop offset="0.11" stop-color="#63ffb9"/><stop offset="0.17" stop-color="#afffc1"/><stop offset="0.21" stop-color="#e9ffc8"/><stop offset="0.23" stop-color="#fff6c4"/><stop offset="0.28" stop-color="#ffc3a1"/><stop offset="0.34" stop-color="#ff907e"/><stop offset="0.4" stop-color="#ff6d66"/><stop offset="0.49" stop-color="#ff4d50"/><stop offset="0.6" stop-color="#ff313e"/><stop offset="0.7" stop-color="#ff1f31"/><stop offset="0.85" stop-color="#ff0c24"/><stop offset="1" stop-color="#ff001c"/></linearGradient><linearGradient id="g392" x1="0" y1="0" x2="1" y2="0"><stop offset="0" stop-color="#00ffb2"/><stop offset="0.02" stop-color="#0cffb4"/><stop offset="0.11" stop-color="#63ffbe"/><stop offset="0.17" stop-color="#afffc7"/><stop offset="0.21" stop-color="#e9ffce"/><stop offset="0.23" stop-color="#fff6ca"/><stop offset="0.28" stop-color="#ffc3a7"/><stop offset="0.34" stop-color="#ff9082"/><stop offset="0.4" stop-color="#ff6d6a"/><stop offset="0.49" stop-color="#ff4d53"/><stop offset="0.6" stop-color="#ff3140"/><stop offset="0.7" stop-color="#ff1f33"/><stop offset="0.85" stop-color="#ff0c26"/><stop offset="1" stop-color="#ff001d"/></linearGradient><linearGradient id="g393" x1="0" y1="0" x2="1" y2="0"><stop offset="0" stop-color="#00ffb7"/><stop offset="0.02" stop-color="#0cffba"/><stop offset="0.11" stop-color="#63ffc4"/><stop offset="0.17" stop-color="#afffcd"/><stop offset="0.21" stop-color="#e9ffd4"/><stop offset="0.23" stop-color="#fff6d1"/><stop offset="0.28" stop-color="#ffc3ac"/><stop offset="0.34" stop-color="#ff9087"/><stop offset="0.4" stop-color="#ff6d6d"/><stop offset="0.49" stop-color="#ff4d56"/><stop offset="0.6" stop-color="#ff3143"/><stop offset="0.7" stop-color="#ff1f35"/><stop offset="0.85" stop-color="#ff0c28"/><stop offset="1" stop-color="#ff001e"/></linearGradient><linearGradient id="g394" x1="0" y1="0" x2="1" y2="0"><stop offset="0" stop-color="#00ffbc"/><stop offset="0.02" stop-color="#0cffbf"/><stop offset="0.11" stop-color="#63ffca"/><stop offset="0.17" stop-color="#afffd4"/><stop offset="0.21" stop-color="#e9ffdb"/><stop offset="0.23" stop-color="#fff6d7"/><stop offset="0.28" stop-color="#ffc3b1"/><stop offset="0.34" stop-color="#ff908b"/><stop offset="0.4" stop-color="#ff6d71"/><stop offset="0.49" stop-color="#ff4d59"/><stop offset="0.6" stop-color="#ff3145"/><stop offset="0.7" stop-color="#ff1f37"/><stop offset="0.85" stop-color="#ff0c29"/><stop offset="1" stop-color="#ff0020"/></linearGradient><linearGradient id="g395" x1="0" y1="0" x2="1" y2="0"><stop offset="0" stop-color="#00ffc2"/><stop offset="0.02" stop-color="#0cffc4"/><stop offset="0.11" stop-color="#62ffd0"/><stop offset="0.17" stop-color="#afffda"/><stop offset="0.21" stop-color="#e9ffe1"/><stop offset="0.23" stop-color="#fff6de"/><stop offset="0.28" stop-color="#ffc3b7"/><stop offset="0.34" stop-color="#ff9090"/><stop offset="0.4" stop-color="#ff6d75"/><stop offset="0.49" stop-color="#ff4d5c"/><stop offset="0.6" stop-color="#ff3148"/><stop offset="0.7" stop-color="#ff1f39"/><stop offset="0.85" stop-color="#ff0c2b"/><stop offset="1" stop-color="#ff0021"/></linearGradient><linearGradient id="g396" x1="0" y1="0" x2="1" y2="0"><stop offset="0" stop-color="#00ffc7"/><stop offset="0.02" stop-color="#0cffc9"/><stop offset="0.11" stop-color="#62ffd5"/><stop offset="0.17" stop-color="#afffe0"/><stop offset="0.21" stop-color="#e9ffe8"/><stop offset="0.23" stop-color="#fff6e4"/><stop offset="0.28" stop-color="#ffc3bd"/><stop offset="0.34" stop-color="#ff9094"/><stop offset="0.4" stop-color="#ff6d79"/><stop offset="0.49" stop-color="#ff4d5f"/><stop offset="0.6" stop-color="#ff314a"/><stop offset="0.7" stop-color="#ff1f3b"/><stop offset="0.85" stop-color="#ff0c2d"/><stop offset="1" stop-color="#ff0023"/></linearGradient><linearGradient id="g397" x1="0" y1="0" x2="1" y2="0"><stop offset="0" stop-color="#00ffcc"/><stop offset="0.02" stop-color="#0cffcf"/><stop offset="0.11" stop-color="#62ffdb"/><stop offset="0.17" stop-color="#afffe6"/><stop offset="0.21" stop-color="#e9ffef"/><stop offset="0.23" stop-color="#fff6eb"/><stop offset="0.28" stop-color="#ffc3c2"/><stop offset="0.34" stop-color="#ff9099"/><stop offset="0.4" stop-color="#ff6d7c"/><stop offset="0.49" stop-color="#ff4d63"/><stop offset="0.6" stop-color="#ff314d"/><stop offset="0.7" stop-color="#ff1f3e"/><stop offset="0.85" stop-color="#ff0c2f"/><stop offset="1" stop-color="#ff0024"/></linearGradient><linearGradient id="g398" x1="0" y1="0" x2="1" y2="0"><stop offset="0" stop-color="#00ffd1"/><stop offset="0.02" stop-color="#0cffd4"/><stop offset="0.11" stop-color="#62ffe1"/><stop offset="0.17" stop-color="#afffed"/><stop offset="0.21" stop-color="#e9fff6"/><stop offset="0.23" stop-color="#fff6f2"/><stop offset="0.28" stop-color="#ffc3c8"/><stop offset="0.34" stop-color="#ff909d"/><stop offset="0.4" stop-color="#ff6d80"/><stop offset="0.49" stop-color="#ff4d66"/><stop offset="0.6" stop-color="#ff314f"/><stop offset="0.7" stop-color="#ff1f40"/><stop offset="0.85" stop-color="#ff0c31"/><stop offset="1" stop-color="#ff0026"/></linearGradient><linearGradient id="g399" x1="0" y1="0" x2="1" y2="0"><stop offset="0" stop-color="#00ffd7"/><stop offset="0.02" stop-color="#0cffda"/><stop offset="0.11" stop-color="#62ffe7"/><stop offset="0.17" stop-color="#affff3"/><stop offset="0.21" stop-color="#e9fffc"/><stop offset="0.23" stop-color="#fff6f8"/><stop offset="0.28" stop-color="#ffc3ce"/><stop offset="0.34" stop-color="#ff90a2"/><stop offset="0.4" stop-color="#ff6d84"/><stop offset="0.49" stop-color="#ff4d69"/><stop offset="0.6" stop-color="#ff3152"/><stop offset="0.7" stop-color="#ff1f42"/><stop offset="0.85" stop-color="#ff0c32"/><stop offset="1" stop-color="#ff0027"/></linearGradient><linearGradient id="g400" x1="0" y1="0" x2="1" y2="0"><stop offset="0" stop-color="#00ffdc"/><stop offset="0.02" stop-color="#0cffdf"/><stop offset="0.11" stop-color="#62ffed"/><stop offset="0.19" stop-color="#cbffff"/><stop offset="0.23" stop-color="#fff6ff"/><stop offset="0.28" stop-color="#ffc4d3"/><stop offset="0.34" stop-color="#ff90a7"/><stop offset="0.4" stop-color="#ff6d88"/><stop offset="0.49" stop-color="#ff4d6c"/><stop offset="0.6" stop-color="#ff3155"/><stop offset="0.7" stop-color="#ff1f44"/><stop offset="0.85" stop-color="#ff0c34"/><stop offset="1" stop-color="#ff0029"/></linearGradient><linearGradient id="g401" x1="0" y1="0" x2="1" y2="0"><stop offset="0" stop-color="#00ffe2"/><stop offset="0.02" stop-color="#0cffe5"/><stop offset="0.06" stop-color="#35ffec"/><stop offset="0.11" stop-color="#62fff4"/><stop offset="0.17" stop-color="#aefdff"/><stop offset="0.23" stop-color="#f8efff"/><stop offset="0.26" stop-color="#ffdbee"/><stop offset="0.3" stop-color="#ffb0c8"/><stop offset="0.36" stop-color="#ff83a0"/><stop offset="0.43" stop-color="#ff6484"/><stop offset="0.51" stop-color="#ff466a"/><stop offset="0.62" stop-color="#ff2d53"/><stop offset="0.72" stop-color="#ff1b44"/><stop offset="1" stop-color="#ff002b"/></linearGradient><linearGradient id="g402" x1="0" y1="0" x2="1" y2="0"><stop offset="0" stop-color="#00ffe7"/><stop offset="0.02" stop-color="#0cffeb"/><stop offset="0.04" stop-color="#20ffee"/><stop offset="0.13" stop-color="#7afffe"/><stop offset="0.23" stop-color="#f1e9ff"/><stop offset="0.26" stop-color="#ffdbf4"/><stop offset="0.3" stop-color="#ffb0cd"/><stop offset="0.36" stop-color="#ff83a4"/><stop offset="0.43" stop-color="#ff6488"/><stop offset="0.51" stop-color="#ff466d"/><stop offset="0.62" stop-color="#ff2d56"/><stop offset="0.72" stop-color="#ff1b46"/><stop offset="1" stop-color="#ff002c"/></linearGradient><linearGradient id="g403" x1="0" y1="0" x2="1" y2="0"><stop offset="0" stop-color="#00ffed"/><stop offset="0.02" stop-color="#0cfff1"/><stop offset="0.11" stop-color="#62feff"/><stop offset="0.23" stop-color="#ebe3ff"/><stop offset="0.26" stop-color="#ffdbfb"/><stop offset="0.3" stop-color="#ffb0d3"/><stop offset="0.36" stop-color="#ff83a9"/><stop offset="0.43" stop-color="#ff648c"/><stop offset="0.51" stop-color="#ff4670"/><stop offset="0.62" stop-color="#ff2d59"/><stop offset="0.72" stop-color="#ff1b48"/><stop offset="1" stop-color="#ff002e"/></linearGradient><linearGradient id="g404" x1="0" y1="0" x2="1" y2="0"><stop offset="0" stop-color="#00fff3"/><stop offset="0.02" stop-color="#0cfff6"/><stop offset="0.04" stop-color="#20fffa"/><stop offset="0.09" stop-color="#4afcff"/><stop offset="0.26" stop-color="#fcd8ff"/><stop offset="0.3" stop-color="#ffb0d9"/><stop offset="0.36" stop-color="#ff83ad"/><stop offset="0.43" stop-color="#ff6490"/><stop offset="0.51" stop-color="#ff4673"/><stop offset="0.62" stop-color="#ff2d5b"/><stop offset="0.72" stop-color="#ff1b4a"/><stop offset="1" stop-color="#ff0030"/></linearGradient><linearGradient id="g405" x1="0" y1="0" x2="1" y2="0"><stop offset="0" stop-color="#00fff9"/><stop offset="0.02" stop-color="#0cfffc"/><stop offset="0.09" stop-color="#48f6ff"/><stop offset="0.26" stop-color="#f6d3ff"/><stop offset="0.28" stop-color="#ffc4f2"/><stop offset="0.32" stop-color="#ff9fce"/><stop offset="0.38" stop-color="#ff77a7"/><stop offset="0.45" stop-color="#ff5b8b"/><stop offset="0.53" stop-color="#ff4071"/><stop offset="0.72" stop-color="#ff1b4d"/><stop offset="1" stop-color="#ff0031"/></linearGradient><linearGradient id="g406" x1="0" y1="0" x2="1" y2="0"><stop offset="0" stop-color="#00fffe"/><stop offset="0.02" stop-color="#0cfcff"/><stop offset="0.04" stop-color="#1ff8ff"/><stop offset="0.15" stop-color="#84e3ff"/><stop offset="0.26" stop-color="#f0ceff"/><stop offset="0.28" stop-color="#ffc4f8"/><stop offset="0.32" stop-color="#ff9fd3"/><stop offset="0.38" stop-color="#ff77ab"/><stop offset="0.45" stop-color="#ff5b8f"/><stop offset="0.53" stop-color="#ff4074"/><stop offset="0.72" stop-color="#ff1b4f"/><stop offset="1" stop-color="#ff0033"/></linearGradient><linearGradient id="g407" x1="0" y1="0" x2="1" y2="0"><stop offset="0" stop-color="#00faff"/><stop offset="0.02" stop-color="#0bf6ff"/><stop offset="0.09" stop-color="#45eaff"/><stop offset="0.28" stop-color="#ffc4fe"/><stop offset="0.32" stop-color="#ff9fd8"/><stop offset="0.38" stop-color="#ff77b0"/><stop offset="0.45" stop-color="#ff5b93"/><stop offset="0.53" stop-color="#ff4077"/><stop offset="0.72" stop-color="#ff1b52"/><stop offset="1" stop-color="#ff0035"/></linearGradient><linearGradient id="g408" x1="0" y1="0" x2="1" y2="0"><stop offset="0" stop-color="#00f4ff"/><stop offset="0.02" stop-color="#0bf0ff"/><stop offset="0.09" stop-color="#43e5ff"/><stop offset="0.28" stop-color="#f9bfff"/><stop offset="0.3" stop-color="#ffb0f0"/><stop offset="0.34" stop-color="#ff90ce"/><stop offset="0.4" stop-color="#ff6da9"/><stop offset="0.47" stop-color="#ff538f"/><stop offset="0.55" stop-color="#ff3b75"/><stop offset="0.74" stop-color="#ff1851"/><stop offset="1" stop-color="#ff0036"/></linearGradient><linearGradient id="g409" x1="0" y1="0" x2="1" y2="0"><stop offset="0" stop-color="#00efff"/><stop offset="0.02" stop-color="#0bebff"/><stop offset="0.09" stop-color="#42e0ff"/><stop offset="0.28" stop-color="#f3bbff"/><stop offset="0.3" stop-color="#ffb0f6"/><stop offset="0.34" stop-color="#ff90d4"/><stop offset="0.4" stop-color="#ff6dae"/><stop offset="0.47" stop-color="#ff5393"/><stop offset="0.55" stop-color="#ff3b78"/><stop offset="0.74" stop-color="#ff1853"/><stop offset="1" stop-color="#ff0038"/></linearGradient><linearGradient id="g410" x1="0" y1="0" x2="1" y2="0"><stop offset="0" stop-color="#00e9ff"/><stop offset="0.02" stop-color="#0ae6ff"/><stop offset="0.09" stop-color="#40daff"/><stop offset="0.3" stop-color="#ffb0fc"/><stop offset="0.34" stop-color="#ff90d9"/><stop offset="0.4" stop-color="#ff6db2"/><stop offset="0.47" stop-color="#ff5396"/><stop offset="0.55" stop-color="#ff3b7c"/><stop offset="0.74" stop-color="#ff1856"/><stop offset="1" stop-color="#ff003a"/></linearGradient><linearGradient id="g411" x1="0" y1="0" x2="1" y2="0"><stop offset="0" stop-color="#00e4ff"/><stop offset="0.02" stop-color="#0ae1ff"/><stop offset="0.11" stop-color="#50d2ff"/><stop offset="0.3" stop-color="#fcaeff"/><stop offset="0.36" stop-color="#ff83d0"/><stop offset="0.4" stop-color="#ff6db7"/><stop offset="0.47" stop-color="#ff539a"/><stop offset="0.55" stop-color="#ff3b7f"/><stop offset="0.74" stop-color="#ff1858"/><stop offset="1" stop-color="#ff003c"/></linearGradient><linearGradient id="g412" x1="0" y1="0" x2="1" y2="0"><stop offset="0" stop-color="#00dfff"/><stop offset="0.02" stop-color="#0adcff"/><stop offset="0.11" stop-color="#4fcdff"/><stop offset="0.3" stop-color="#f6aaff"/><stop offset="0.32" stop-color="#ff9ff5"/><stop offset="0.36" stop-color="#ff83d5"/><stop offset="0.43" stop-color="#ff64b1"/><stop offset="0.49" stop-color="#ff4d96"/><stop offset="0.55" stop-color="#ff3b82"/><stop offset="0.74" stop-color="#ff185a"/><stop offset="1" stop-color="#ff003d"/></linearGradient><linearGradient id="g413" x1="0" y1="0" x2="1" y2="0"><stop offset="0" stop-color="#00daff"/><stop offset="0.02" stop-color="#0ad7ff"/><stop offset="0.09" stop-color="#3cccff"/><stop offset="0.3" stop-color="#f0a6ff"/><stop offset="0.32" stop-color="#ff9ffb"/><stop offset="0.36" stop-color="#ff83da"/><stop offset="0.43" stop-color="#ff64b5"/><stop offset="0.49" stop-color="#ff4d9a"/><stop offset="0.55" stop-color="#ff3b85"/><stop offset="0.64" stop-color="#ff2970"/><stop offset="0.74" stop-color="#ff185d"/><stop offset="1" stop-color="#ff003f"/></linearGradient><linearGradient id="g414" x1="0" y1="0" x2="1" y2="0"><stop offset="0" stop-color="#00d6ff"/><stop offset="0.02" stop-color="#09d2ff"/><stop offset="0.11" stop-color="#4bc4ff"/><stop offset="0.32" stop-color="#fd9eff"/><stop offset="0.38" stop-color="#ff77d1"/><stop offset="0.43" stop-color="#ff64ba"/><stop offset="0.49" stop-color="#ff4d9e"/><stop offset="0.57" stop-color="#ff3683"/><stop offset="0.77" stop-color="#ff165c"/><stop offset="1" stop-color="#ff0041"/></linearGradient><linearGradient id="g415" x1="0" y1="0" x2="1" y2="0"><stop offset="0" stop-color="#00d1ff"/><stop offset="0.02" stop-color="#09ceff"/><stop offset="0.11" stop-color="#49c0ff"/><stop offset="0.32" stop-color="#f79aff"/><stop offset="0.34" stop-color="#ff90f5"/><stop offset="0.38" stop-color="#ff77d6"/><stop offset="0.45" stop-color="#ff5bb4"/><stop offset="0.57" stop-color="#ff3686"/><stop offset="0.77" stop-color="#ff165f"/><stop offset="1" stop-color="#ff0043"/></linearGradient><linearGradient id="g416" x1="0" y1="0" x2="1" y2="0"><stop offset="0" stop-color="#00cdff"/><stop offset="0.02" stop-color="#09caff"/><stop offset="0.09" stop-color="#38bfff"/><stop offset="0.32" stop-color="#f297ff"/><stop offset="0.34" stop-color="#ff90fa"/><stop offset="0.38" stop-color="#ff77db"/><stop offset="0.45" stop-color="#ff5bb8"/><stop offset="0.57" stop-color="#ff368a"/><stop offset="0.77" stop-color="#ff1661"/><stop offset="1" stop-color="#ff0045"/></linearGradient><linearGradient id="g417" x1="0" y1="0" x2="1" y2="0"><stop offset="0" stop-color="#00c9ff"/><stop offset="0.02" stop-color="#09c5ff"/><stop offset="0.13" stop-color="#56b4ff"/><stop offset="0.34" stop-color="#fe8fff"/><stop offset="0.38" stop-color="#ff77e1"/><stop offset="0.45" stop-color="#ff5bbd"/><stop offset="0.51" stop-color="#ff46a2"/><stop offset="0.57" stop-color="#ff368d"/><stop offset="0.66" stop-color="#ff2578"/><stop offset="0.77" stop-color="#ff1664"/><stop offset="1" stop-color="#ff0047"/></linearGradient><linearGradient id="g418" x1="0" y1="0" x2="1" y2="0"><stop offset="0" stop-color="#00c4ff"/><stop offset="0.02" stop-color="#08c1ff"/><stop offset="0.13" stop-color="#54b0ff"/><stop offset="0.34" stop-color="#f88cff"/><stop offset="0.36" stop-color="#ff83f5"/><stop offset="0.4" stop-color="#ff6dd8"/><stop offset="0.47" stop-color="#ff53b7"/><stop offset="0.6" stop-color="#ff318a"/><stop offset="0.77" stop-color="#ff1666"/><stop offset="1" stop-color="#ff0049"/></linearGradient><linearGradient id="g419" x1="0" y1="0" x2="1" y2="0"><stop offset="0" stop-color="#00c0ff"/><stop offset="0.02" stop-color="#08bdff"/><stop offset="0.11" stop-color="#43b0ff"/><stop offset="0.34" stop-color="#f389ff"/><stop offset="0.36" stop-color="#ff83fb"/><stop offset="0.4" stop-color="#ff6ddd"/><stop offset="0.47" stop-color="#ff53bb"/><stop offset="0.6" stop-color="#ff318e"/><stop offset="0.77" stop-color="#ff1669"/><stop offset="1" stop-color="#ff004b"/></linearGradient><linearGradient id="g420" x1="0" y1="0" x2="1" y2="0"><stop offset="0" stop-color="#00bdff"/><stop offset="0.02" stop-color="#08b9ff"/><stop offset="0.13" stop-color="#51a9ff"/><stop offset="0.36" stop-color="#fe82ff"/><stop offset="0.43" stop-color="#ff64d6"/><stop offset="0.47" stop-color="#ff53c0"/><stop offset="0.6" stop-color="#ff3191"/><stop offset="0.77" stop-color="#ff166c"/><stop offset="1" stop-color="#ff004d"/></linearGradient><linearGradient id="g421" x1="0" y1="0" x2="1" y2="0"><stop offset="0" stop-color="#00b9ff"/><stop offset="0.02" stop-color="#08b6ff"/><stop offset="0.13" stop-color="#4fa6ff"/><stop offset="0.36" stop-color="#f87fff"/><stop offset="0.38" stop-color="#ff77f6"/><stop offset="0.43" stop-color="#ff64da"/><stop offset="0.49" stop-color="#ff4dba"/><stop offset="0.62" stop-color="#ff2d8f"/><stop offset="0.79" stop-color="#ff136b"/><stop offset="1" stop-color="#ff004f"/></linearGradient><linearGradient id="g422" x1="0" y1="0" x2="1" y2="0"><stop offset="0" stop-color="#00b5ff"/><stop offset="0.02" stop-color="#08b2ff"/><stop offset="0.11" stop-color="#3fa5ff"/><stop offset="0.36" stop-color="#f37dff"/><stop offset="0.38" stop-color="#ff77fb"/><stop offset="0.43" stop-color="#ff64df"/><stop offset="0.49" stop-color="#ff4dbf"/><stop offset="0.62" stop-color="#ff2d92"/><stop offset="0.79" stop-color="#ff136d"/><stop offset="1" stop-color="#ff0051"/></linearGradient><linearGradient id="g423" x1="0" y1="0" x2="1" y2="0"><stop offset="0" stop-color="#00b1ff"/><stop offset="0.02" stop-color="#07aeff"/><stop offset="0.15" stop-color="#5a9cff"/><stop offset="0.38" stop-color="#fd76ff"/><stop offset="0.49" stop-color="#ff4dc3"/><stop offset="0.62" stop-color="#ff2d95"/><stop offset="0.79" stop-color="#ff1370"/><stop offset="1" stop-color="#ff0053"/></linearGradient><linearGradient id="g424" x1="0" y1="0" x2="1" y2="0"><stop offset="0" stop-color="#00aeff"/><stop offset="0.02" stop-color="#07abff"/><stop offset="0.15" stop-color="#5898ff"/><stop offset="0.38" stop-color="#f874ff"/><stop offset="0.4" stop-color="#ff6df7"/><stop offset="0.45" stop-color="#ff5bdd"/><stop offset="0.51" stop-color="#ff46be"/><stop offset="0.64" stop-color="#ff2993"/><stop offset="0.81" stop-color="#ff116f"/><stop offset="1" stop-color="#ff0055"/></linearGradient><linearGradient id="g425" x1="0" y1="0" x2="1" y2="0"><stop offset="0" stop-color="#00aaff"/><stop offset="0.02" stop-color="#07a8ff"/><stop offset="0.13" stop-color="#4998ff"/><stop offset="0.4" stop-color="#ff6dfd"/><stop offset="0.45" stop-color="#ff5be2"/><stop offset="0.51" stop-color="#ff46c2"/><stop offset="0.64" stop-color="#ff2996"/><stop offset="0.81" stop-color="#ff1172"/><stop offset="1" stop-color="#ff0057"/></linearGradient><linearGradient id="g426" x1="0" y1="0" x2="1" y2="0"><stop offset="0" stop-color="#00a7ff"/><stop offset="0.02" stop-color="#07a4ff"/><stop offset="0.15" stop-color="#5492ff"/><stop offset="0.4" stop-color="#fc6bff"/><stop offset="0.51" stop-color="#ff46c7"/><stop offset="0.64" stop-color="#ff299a"/><stop offset="0.81" stop-color="#ff1174"/><stop offset="1" stop-color="#ff005a"/></linearGradient><linearGradient id="g427" x1="0" y1="0" x2="1" y2="0"><stop offset="0" stop-color="#00a4ff"/><stop offset="0.02" stop-color="#07a1ff"/><stop offset="0.11" stop-color="#3995ff"/><stop offset="0.4" stop-color="#f669ff"/><stop offset="0.43" stop-color="#ff64f9"/><stop offset="0.47" stop-color="#ff53e0"/><stop offset="0.53" stop-color="#ff40c2"/><stop offset="0.66" stop-color="#ff2598"/><stop offset="0.81" stop-color="#ff1177"/><stop offset="1" stop-color="#ff005c"/></linearGradient><linearGradient id="g428" x1="0" y1="0" x2="1" y2="0"><stop offset="0" stop-color="#00a1ff"/><stop offset="0.02" stop-color="#079eff"/><stop offset="0.17" stop-color="#5e8aff"/><stop offset="0.43" stop-color="#ff64ff"/><stop offset="0.47" stop-color="#ff53e5"/><stop offset="0.53" stop-color="#ff40c6"/><stop offset="0.66" stop-color="#ff259b"/><stop offset="0.81" stop-color="#ff117a"/><stop offset="1" stop-color="#ff005e"/></linearGradient><linearGradient id="g429" x1="0" y1="0" x2="1" y2="0"><stop offset="0" stop-color="#009eff"/><stop offset="0.02" stop-color="#069bff"/><stop offset="0.17" stop-color="#5c87ff"/><stop offset="0.43" stop-color="#fa62ff"/><stop offset="0.45" stop-color="#ff5bf6"/><stop offset="0.55" stop-color="#ff3bc2"/><stop offset="0.66" stop-color="#ff259e"/><stop offset="0.81" stop-color="#ff117d"/><stop offset="1" stop-color="#ff0060"/></linearGradient><linearGradient id="g430" x1="0" y1="0" x2="1" y2="0"><stop offset="0" stop-color="#009bff"/><stop offset="0.02" stop-color="#0698ff"/><stop offset="0.15" stop-color="#4e87ff"/><stop offset="0.43" stop-color="#f560ff"/><stop offset="0.45" stop-color="#ff5bfc"/><stop offset="0.55" stop-color="#ff3bc6"/><stop offset="0.66" stop-color="#ff25a2"/><stop offset="0.81" stop-color="#ff1180"/><stop offset="1" stop-color="#ff0063"/></linearGradient><linearGradient id="g431" x1="0" y1="0" x2="1" y2="0"><stop offset="0" stop-color="#0098ff"/><stop offset="0.02" stop-color="#0695ff"/><stop offset="0.17" stop-color="#5882ff"/><stop offset="0.45" stop-color="#fd5aff"/><stop offset="0.55" stop-color="#ff3bca"/><stop offset="0.68" stop-color="#ff22a0"/><stop offset="0.83" stop-color="#ff0e7f"/><stop offset="1" stop-color="#ff0065"/></linearGradient><linearGradient id="g432" x1="0" y1="0" x2="1" y2="0"><stop offset="0" stop-color="#0095ff"/><stop offset="0.02" stop-color="#0692ff"/><stop offset="0.13" stop-color="#3f85ff"/><stop offset="0.45" stop-color="#f859ff"/><stop offset="0.47" stop-color="#ff53f9"/><stop offset="0.57" stop-color="#ff36c6"/><stop offset="0.68" stop-color="#ff22a3"/><stop offset="0.83" stop-color="#ff0e81"/><stop offset="1" stop-color="#ff0067"/></linearGradient><linearGradient id="g433" x1="0" y1="0" x2="1" y2="0"><stop offset="0" stop-color="#0092ff"/><stop offset="0.02" stop-color="#068fff"/><stop offset="0.17" stop-color="#557dff"/><stop offset="0.47" stop-color="#ff53fe"/><stop offset="0.57" stop-color="#ff36ca"/><stop offset="0.68" stop-color="#ff22a7"/><stop offset="0.83" stop-color="#ff0e84"/><stop offset="1" stop-color="#ff006a"/></linearGradient><linearGradient id="g434" x1="0" y1="0" x2="1" y2="0"><stop offset="0" stop-color="#008fff"/><stop offset="0.02" stop-color="#068dff"/><stop offset="0.19" stop-color="#5e77ff"/><stop offset="0.47" stop-color="#fa52ff"/><stop offset="0.49" stop-color="#ff4cf7"/><stop offset="0.6" stop-color="#ff31c6"/><stop offset="0.7" stop-color="#ff1ea4"/><stop offset="0.83" stop-color="#ff0e87"/><stop offset="1" stop-color="#ff006c"/></linearGradient><linearGradient id="g435" x1="0" y1="0" x2="1" y2="0"><stop offset="0" stop-color="#008dff"/><stop offset="0.02" stop-color="#058aff"/><stop offset="0.17" stop-color="#5178ff"/><stop offset="0.49" stop-color="#ff4cfc"/><stop offset="0.6" stop-color="#ff31cb"/><stop offset="0.7" stop-color="#ff1ea8"/><stop offset="0.83" stop-color="#ff0e8a"/><stop offset="1" stop-color="#ff006f"/></linearGradient><linearGradient id="g436" x1="0" y1="0" x2="1" y2="0"><stop offset="0" stop-color="#008aff"/><stop offset="0.02" stop-color="#0587ff"/><stop offset="0.19" stop-color="#5b73ff"/><stop offset="0.49" stop-color="#fc4cff"/><stop offset="0.6" stop-color="#ff31cf"/><stop offset="0.7" stop-color="#ff1eac"/><stop offset="0.83" stop-color="#ff0e8d"/><stop offset="1" stop-color="#ff0071"/></linearGradient><linearGradient id="g437" x1="0" y1="0" x2="1" y2="0"><stop offset="0" stop-color="#0087ff"/><stop offset="0.02" stop-color="#0585ff"/><stop offset="0.15" stop-color="#4376ff"/><stop offset="0.49" stop-color="#f74aff"/><stop offset="0.51" stop-color="#ff46fb"/><stop offset="0.62" stop-color="#ff2dcb"/><stop offset="0.72" stop-color="#ff1ba9"/><stop offset="0.85" stop-color="#ff0c8c"/><stop offset="1" stop-color="#ff0074"/></linearGradient><linearGradient id="g438" x1="0" y1="0" x2="1" y2="0"><stop offset="0" stop-color="#0085ff"/><stop offset="0.02" stop-color="#0582ff"/><stop offset="0.21" stop-color="#626cff"/><stop offset="0.51" stop-color="#fe46ff"/><stop offset="0.62" stop-color="#ff2dcf"/><stop offset="0.72" stop-color="#ff1bad"/><stop offset="0.85" stop-color="#ff0c8f"/><stop offset="1" stop-color="#ff0076"/></linearGradient><linearGradient id="g439" x1="0" y1="0" x2="1" y2="0"><stop offset="0" stop-color="#0082ff"/><stop offset="0.02" stop-color="#0580ff"/><stop offset="0.15" stop-color="#4171ff"/><stop offset="0.51" stop-color="#f944ff"/><stop offset="0.53" stop-color="#ff40fa"/><stop offset="0.62" stop-color="#ff2dd4"/><stop offset="0.72" stop-color="#ff1bb1"/><stop offset="0.85" stop-color="#ff0c92"/><stop offset="1" stop-color="#ff0079"/></linearGradient><linearGradient id="g440" x1="0" y1="0" x2="1" y2="0"><stop offset="0" stop-color="#0080ff"/><stop offset="0.02" stop-color="#057eff"/><stop offset="0.21" stop-color="#5e68ff"/><stop offset="0.53" stop-color="#ff40ff"/><stop offset="0.62" stop-color="#ff2dd8"/><stop offset="0.72" stop-color="#ff1bb4"/><stop offset="0.85" stop-color="#ff0c96"/><stop offset="1" stop-color="#ff007c"/></linearGradient><linearGradient id="g441" x1="0" y1="0" x2="1" y2="0"><stop offset="0" stop-color="#007eff"/><stop offset="0.02" stop-color="#057bff"/><stop offset="0.21" stop-color="#5c66ff"/><stop offset="0.53" stop-color="#fa3fff"/><stop offset="0.55" stop-color="#ff3bf9"/><stop offset="0.64" stop-color="#ff29d4"/><stop offset="0.74" stop-color="#ff18b2"/><stop offset="0.87" stop-color="#ff0a95"/><stop offset="1" stop-color="#ff007f"/></linearGradient><linearGradient id="g442" x1="0" y1="0" x2="1" y2="0"><stop offset="0" stop-color="#007bff"/><stop offset="0.02" stop-color="#0579ff"/><stop offset="0.21" stop-color="#5a64ff"/><stop offset="0.55" stop-color="#ff3bfe"/><stop offset="0.64" stop-color="#ff29d9"/><stop offset="0.74" stop-color="#ff18b6"/><stop offset="0.87" stop-color="#ff0a98"/><stop offset="1" stop-color="#ff0081"/></linearGradient><linearGradient id="g443" x1="0" y1="0" x2="1" y2="0"><stop offset="0" stop-color="#0079ff"/><stop offset="0.02" stop-color="#0477ff"/><stop offset="0.21" stop-color="#5962ff"/><stop offset="0.55" stop-color="#fb3aff"/><stop offset="0.57" stop-color="#ff36f9"/><stop offset="0.66" stop-color="#ff25d5"/><stop offset="0.77" stop-color="#ff16b4"/><stop offset="0.87" stop-color="#ff0a9b"/><stop offset="1" stop-color="#ff0084"/></linearGradient><linearGradient id="g444" x1="0" y1="0" x2="1" y2="0"><stop offset="0" stop-color="#0077ff"/><stop offset="0.02" stop-color="#0475ff"/><stop offset="0.21" stop-color="#5760ff"/><stop offset="0.57" stop-color="#ff36fe"/><stop offset="0.66" stop-color="#ff25d9"/><stop offset="0.77" stop-color="#ff16b8"/><stop offset="0.87" stop-color="#ff0a9e"/><stop offset="1" stop-color="#ff0087"/></linearGradient><linearGradient id="g445" x1="0" y1="0" x2="1" y2="0"><stop offset="0" stop-color="#0075ff"/><stop offset="0.02" stop-color="#0473ff"/><stop offset="0.23" stop-color="#5f5cff"/><stop offset="0.57" stop-color="#fb35ff"/><stop offset="0.68" stop-color="#ff22d6"/><stop offset="0.77" stop-color="#ff15bb"/><stop offset="0.87" stop-color="#ff0aa2"/><stop offset="1" stop-color="#ff008a"/></linearGradient><linearGradient id="g446" x1="0" y1="0" x2="1" y2="0"><stop offset="0" stop-color="#0073ff"/><stop offset="0.02" stop-color="#0470ff"/><stop offset="0.23" stop-color="#5d5aff"/><stop offset="0.6" stop-color="#ff31fe"/><stop offset="0.68" stop-color="#ff22db"/><stop offset="0.77" stop-color="#ff15bf"/><stop offset="0.87" stop-color="#ff0aa5"/><stop offset="1" stop-color="#ff008d"/></linearGradient><linearGradient id="g447" x1="0" y1="0" x2="1" y2="0"><stop offset="0" stop-color="#0071ff"/><stop offset="0.02" stop-color="#046eff"/><stop offset="0.23" stop-color="#5b59ff"/><stop offset="0.6" stop-color="#fb30ff"/><stop offset="0.62" stop-color="#ff2df9"/><stop offset="0.7" stop-color="#ff1ed7"/><stop offset="0.79" stop-color="#ff13bd"/><stop offset="1" stop-color="#ff0090"/></linearGradient><linearGradient id="g448" x1="0" y1="0" x2="1" y2="0"><stop offset="0" stop-color="#006eff"/><stop offset="0.02" stop-color="#046cff"/><stop offset="0.23" stop-color="#5957ff"/><stop offset="0.62" stop-color="#ff2dfe"/><stop offset="0.7" stop-color="#ff1edc"/><stop offset="0.79" stop-color="#ff13c1"/><stop offset="1" stop-color="#ff0093"/></linearGradient><linearGradient id="g449" x1="0" y1="0" x2="1" y2="0"><stop offset="0" stop-color="#006cff"/><stop offset="0.02" stop-color="#046aff"/><stop offset="0.26" stop-color="#6053ff"/><stop offset="0.62" stop-color="#fb2cff"/><stop offset="0.64" stop-color="#ff29f9"/><stop offset="0.72" stop-color="#ff1bd9"/><stop offset="0.81" stop-color="#ff10bf"/><stop offset="1" stop-color="#ff0096"/></linearGradient><linearGradient id="g450" x1="0" y1="0" x2="1" y2="0"><stop offset="0" stop-color="#006bff"/><stop offset="0.02" stop-color="#0469ff"/><stop offset="0.26" stop-color="#5e52ff"/><stop offset="0.64" stop-color="#ff29fe"/><stop offset="0.72" stop-color="#ff1bdd"/><stop offset="0.81" stop-color="#ff10c3"/><stop offset="1" stop-color="#ff0099"/></linearGradient><linearGradient id="g451" x1="0" y1="0" x2="1" y2="0"><stop offset="0" stop-color="#0069ff"/><stop offset="0.02" stop-color="#0467ff"/><stop offset="0.26" stop-color="#5d50ff"/><stop offset="0.64" stop-color="#fb28ff"/><stop offset="0.66" stop-color="#ff25fa"/><stop offset="0.81" stop-color="#ff10c7"/><stop offset="1" stop-color="#ff009c"/></linearGradient><linearGradient id="g452" x1="0" y1="0" x2="1" y2="0"><stop offset="0" stop-color="#0067ff"/><stop offset="0.02" stop-color="#0365ff"/><stop offset="0.28" stop-color="#634dff"/><stop offset="0.66" stop-color="#ff25ff"/><stop offset="0.81" stop-color="#ff10cb"/><stop offset="1" stop-color="#ff00a0"/></linearGradient><linearGradient id="g453" x1="0" y1="0" x2="1" y2="0"><stop offset="0" stop-color="#0065ff"/><stop offset="0.02" stop-color="#0363ff"/><stop offset="0.28" stop-color="#614bff"/><stop offset="0.66" stop-color="#fa24ff"/><stop offset="0.68" stop-color="#ff22fb"/><stop offset="0.83" stop-color="#ff0ec9"/><stop offset="1" stop-color="#ff00a3"/></linearGradient><linearGradient id="g454" x1="0" y1="0" x2="1" y2="0"><stop offset="0" stop-color="#0063ff"/><stop offset="0.02" stop-color="#0361ff"/><stop offset="0.28" stop-color="#5f4aff"/><stop offset="0.68" stop-color="#fe21ff"/><stop offset="0.83" stop-color="#ff0ece"/><stop offset="1" stop-color="#ff00a6"/></linearGradient><linearGradient id="g455" x1="0" y1="0" x2="1" y2="0"><stop offset="0" stop-color="#0061ff"/><stop offset="0.02" stop-color="#035fff"/><stop offset="0.26" stop-color="#564aff"/><stop offset="0.7" stop-color="#ff1efd"/><stop offset="0.83" stop-color="#ff0ed2"/><stop offset="1" stop-color="#ff00aa"/></linearGradient><linearGradient id="g456" x1="0" y1="0" x2="1" y2="0"><stop offset="0" stop-color="#0060ff"/><stop offset="0.02" stop-color="#035eff"/><stop offset="0.3" stop-color="#6445ff"/><stop offset="0.7" stop-color="#fc1eff"/><stop offset="0.85" stop-color="#ff0cd0"/><stop offset="1" stop-color="#ff00ad"/></linearGradient><linearGradient id="g457" x1="0" y1="0" x2="1" y2="0"><stop offset="0" stop-color="#005eff"/><stop offset="0.02" stop-color="#035cff"/><stop offset="0.3" stop-color="#6244ff"/><stop offset="0.72" stop-color="#ff1bfe"/><stop offset="0.85" stop-color="#ff0cd4"/><stop offset="1" stop-color="#ff00b1"/></linearGradient><linearGradient id="g458" x1="0" y1="0" x2="1" y2="0"><stop offset="0" stop-color="#005cff"/><stop offset="0.02" stop-color="#035aff"/><stop offset="0.3" stop-color="#6043ff"/><stop offset="0.72" stop-color="#fb1bff"/><stop offset="0.74" stop-color="#ff18fb"/><stop offset="0.87" stop-color="#ff0ad2"/><stop offset="1" stop-color="#ff00b4"/></linearGradient><linearGradient id="g459" x1="0" y1="0" x2="1" y2="0"><stop offset="0" stop-color="#005bff"/><stop offset="0.02" stop-color="#0359ff"/><stop offset="0.32" stop-color="#653fff"/><stop offset="0.74" stop-color="#fe18ff"/><stop offset="0.87" stop-color="#ff0ad7"/><stop offset="1" stop-color="#ff00b8"/></linearGradient><linearGradient id="g460" x1="0" y1="0" x2="1" y2="0"><stop offset="0" stop-color="#0059ff"/><stop offset="0.02" stop-color="#0357ff"/><stop offset="0.3" stop-color="#5c40ff"/><stop offset="0.77" stop-color="#ff15fd"/><stop offset="0.87" stop-color="#ff0adb"/><stop offset="1" stop-color="#ff00bc"/></linearGradient><linearGradient id="g461" x1="0" y1="0" x2="1" y2="0"><stop offset="0" stop-color="#0057ff"/><stop offset="0.02" stop-color="#0356ff"/><stop offset="0.32" stop-color="#623dff"/><stop offset="0.77" stop-color="#fc15ff"/><stop offset="1" stop-color="#ff00c0"/></linearGradient><linearGradient id="g462" x1="0" y1="0" x2="1" y2="0"><stop offset="0" stop-color="#0056ff"/><stop offset="0.02" stop-color="#0354ff"/><stop offset="0.34" stop-color="#673aff"/><stop offset="0.79" stop-color="#ff13ff"/><stop offset="0.89" stop-color="#ff08de"/><stop offset="1" stop-color="#ff00c4"/></linearGradient><linearGradient id="g463" x1="0" y1="0" x2="1" y2="0"><stop offset="0" stop-color="#0054ff"/><stop offset="0.02" stop-color="#0253ff"/><stop offset="0.32" stop-color="#5e3bff"/><stop offset="0.79" stop-color="#fa12ff"/><stop offset="0.81" stop-color="#ff10fd"/><stop offset="1" stop-color="#ff00c8"/></linearGradient><linearGradient id="g464" x1="0" y1="0" x2="1" y2="0"><stop offset="0" stop-color="#0053ff"/><stop offset="0.02" stop-color="#0251ff"/><stop offset="0.34" stop-color="#6338ff"/><stop offset="0.81" stop-color="#fc10ff"/><stop offset="1" stop-color="#ff00cc"/></linearGradient><linearGradient id="g465" x1="0" y1="0" x2="1" y2="0"><stop offset="0" stop-color="#0051ff"/><stop offset="0.02" stop-color="#0250ff"/><stop offset="0.36" stop-color="#6735ff"/><stop offset="0.83" stop-color="#fe0eff"/><stop offset="1" stop-color="#ff00d0"/></linearGradient><linearGradient id="g466" x1="0" y1="0" x2="1" y2="0"><stop offset="0" stop-color="#0050ff"/><stop offset="0.02" stop-color="#024eff"/><stop offset="0.34" stop-color="#5f36ff"/><stop offset="0.85" stop-color="#ff0cfd"/><stop offset="1" stop-color="#ff00d4"/></linearGradient><linearGradient id="g467" x1="0" y1="0" x2="1" y2="0"><stop offset="0" stop-color="#004eff"/><stop offset="0.02" stop-color="#024dff"/><stop offset="0.36" stop-color="#6433ff"/><stop offset="0.85" stop-color="#fc0bff"/><stop offset="1" stop-color="#ff00d8"/></linearGradient><linearGradient id="g468" x1="0" y1="0" x2="1" y2="0"><stop offset="0" stop-color="#004dff"/><stop offset="0.02" stop-color="#024bff"/><stop offset="0.36" stop-color="#6232ff"/><stop offset="0.87" stop-color="#fd09ff"/><stop offset="1" stop-color="#ff00dd"/></linearGradient><linearGradient id="g469" x1="0" y1="0" x2="1" y2="0"><stop offset="0" stop-color="#004cff"/><stop offset="0.02" stop-color="#024aff"/><stop offset="0.38" stop-color="#6630ff"/><stop offset="0.89" stop-color="#ff07ff"/><stop offset="1" stop-color="#ff00e1"/></linearGradient><linearGradient id="g470" x1="0" y1="0" x2="1" y2="0"><stop offset="0" stop-color="#004aff"/><stop offset="0.02" stop-color="#0249ff"/><stop offset="0.38" stop-color="#642fff"/><stop offset="0.89" stop-color="#fa07ff"/><stop offset="0.91" stop-color="#ff06fd"/><stop offset="1" stop-color="#ff00e6"/></linearGradient><linearGradient id="g471" x1="0" y1="0" x2="1" y2="0"><stop offset="0" stop-color="#0049ff"/><stop offset="0.02" stop-color="#0247ff"/><stop offset="0.38" stop-color="#622eff"/><stop offset="0.91" stop-color="#fc05ff"/><stop offset="1" stop-color="#ff00ea"/></linearGradient><linearGradient id="g472" x1="0" y1="0" x2="1" y2="0"><stop offset="0" stop-color="#0048ff"/><stop offset="0.02" stop-color="#0246ff"/><stop offset="0.4" stop-color="#662cff"/><stop offset="0.94" stop-color="#fd04ff"/><stop offset="1" stop-color="#ff00ef"/></linearGradient><linearGradient id="g473" x1="0" y1="0" x2="1" y2="0"><stop offset="0" stop-color="#0046ff"/><stop offset="0.02" stop-color="#0245ff"/><stop offset="0.4" stop-color="#642bff"/><stop offset="0.96" stop-color="#fe02ff"/><stop offset="1" stop-color="#ff00f4"/></linearGradient><linearGradient id="g474" x1="0" y1="0" x2="1" y2="0"><stop offset="0" stop-color="#0045ff"/><stop offset="0.02" stop-color="#0244ff"/><stop offset="0.4" stop-color="#622aff"/><stop offset="0.96" stop-color="#f902ff"/><stop offset="1" stop-color="#ff00f9"/></linearGradient><linearGradient id="g475" x1="0" y1="0" x2="1" y2="0"><stop offset="0" stop-color="#0044ff"/><stop offset="0.02" stop-color="#0242ff"/><stop offset="0.4" stop-color="#6029ff"/><stop offset="1" stop-color="#ff00fe"/></linearGradient><linearGradient id="g476" x1="0" y1="0" x2="1" y2="0"><stop offset="0" stop-color="#0042ff"/><stop offset="0.02" stop-color="#0241ff"/><stop offset="0.43" stop-color="#6427ff"/><stop offset="1" stop-color="#fb00ff"/></linearGradient><linearGradient id="g477" x1="0" y1="0" x2="1" y2="0"><stop offset="0" stop-color="#0041ff"/><stop offset="0.02" stop-color="#0140ff"/><stop offset="0.43" stop-color="#6226ff"/><stop offset="1" stop-color="#f600ff"/></linearGradient><linearGradient id="g478" x1="0" y1="0" x2="1" y2="0"><stop offset="0" stop-color="#0040ff"/><stop offset="0.02" stop-color="#013fff"/><stop offset="0.43" stop-color="#6025ff"/><stop offset="1" stop-color="#f100ff"/></linearGradient><linearGradient id="g479" x1="0" y1="0" x2="1" y2="0"><stop offset="0" stop-color="#003fff"/><stop offset="0.02" stop-color="#013eff"/><stop offset="0.43" stop-color="#5e25ff"/><stop offset="1" stop-color="#ed00ff"/></linearGradient><linearGradient id="g480" x1="0" y1="0" x2="1" y2="0"><stop offset="0" stop-color="#003eff"/><stop offset="0.02" stop-color="#013cff"/><stop offset="0.43" stop-color="#5c24ff"/><stop offset="1" stop-color="#e800ff"/></linearGradient><linearGradient id="g481" x1="0" y1="0" x2="1" y2="0"><stop offset="0" stop-color="#003dff"/><stop offset="0.02" stop-color="#013bff"/><stop offset="0.4" stop-color="#5625ff"/><stop offset="1" stop-color="#e300ff"/></linearGradient><linearGradient id="g482" x1="0" y1="0" x2="1" y2="0"><stop offset="0" stop-color="#003bff"/><stop offset="0.02" stop-color="#013aff"/><stop offset="0.4" stop-color="#5424ff"/><stop offset="1" stop-color="#df00ff"/></linearGradient><linearGradient id="g483" x1="0" y1="0" x2="1" y2="0"><stop offset="0" stop-color="#003aff"/><stop offset="0.02" stop-color="#0139ff"/><stop offset="0.4" stop-color="#5223ff"/><stop offset="1" stop-color="#da00ff"/></linearGradient><linearGradient id="g484" x1="0" y1="0" x2="1" y2="0"><stop offset="0" stop-color="#0039ff"/><stop offset="0.02" stop-color="#0138ff"/><stop offset="0.4" stop-color="#5123ff"/><stop offset="1" stop-color="#d600ff"/></linearGradient><linearGradient id="g485" x1="0" y1="0" x2="1" y2="0"><stop offset="0" stop-color="#0038ff"/><stop offset="0.02" stop-color="#0137ff"/><stop offset="0.4" stop-color="#4f22ff"/><stop offset="1" stop-color="#d100ff"/></linearGradient><linearGradient id="g486" x1="0" y1="0" x2="1" y2="0"><stop offset="0" stop-color="#0037ff"/><stop offset="0.02" stop-color="#0136ff"/><stop offset="0.4" stop-color="#4e21ff"/><stop offset="1" stop-color="#cd00ff"/></linearGradient><linearGradient id="g487" x1="0" y1="0" x2="1" y2="0"><stop offset="0" stop-color="#0036ff"/><stop offset="0.02" stop-color="#0135ff"/><stop offset="0.38" stop-color="#4822ff"/><stop offset="1" stop-color="#c900ff"/></linearGradient><linearGradient id="g488" x1="0" y1="0" x2="1" y2="0"><stop offset="0" stop-color="#0035ff"/><stop offset="0.02" stop-color="#0134ff"/><stop offset="0.38" stop-color="#4621ff"/><stop offset="1" stop-color="#c500ff"/></linearGradient><linearGradient id="g489" x1="0" y1="0" x2="1" y2="0"><stop offset="0" stop-color="#0034ff"/><stop offset="0.02" stop-color="#0133ff"/><stop offset="0.38" stop-color="#4520ff"/><stop offset="1" stop-color="#c100ff"/></linearGradient><linearGradient id="g490" x1="0" y1="0" x2="1" y2="0"><stop offset="0" stop-color="#0033ff"/><stop offset="0.02" stop-color="#0132ff"/><stop offset="0.38" stop-color="#4420ff"/><stop offset="1" stop-color="#bd00ff"/></linearGradient><linearGradient id="g491" x1="0" y1="0" x2="1" y2="0"><stop offset="0" stop-color="#0032ff"/><stop offset="0.38" stop-color="#421fff"/><stop offset="1" stop-color="#b900ff"/></linearGradient><linearGradient id="g492" x1="0" y1="0" x2="1" y2="0"><stop offset="0" stop-color="#0031ff"/><stop offset="0.36" stop-color="#3d20ff"/><stop offset="1" stop-color="#b500ff"/></linearGradient><linearGradient id="g493" x1="0" y1="0" x2="1" y2="0"><stop offset="0" stop-color="#0030ff"/><stop offset="0.36" stop-color="#3c1fff"/><stop offset="1" stop-color="#b100ff"/></linearGradient><linearGradient id="g494" x1="0" y1="0" x2="1" y2="0"><stop offset="0" stop-color="#002fff"/><stop offset="0.36" stop-color="#3a1eff"/><stop offset="1" stop-color="#ae00ff"/></linearGradient><linearGradient id="g495" x1="0" y1="0" x2="1" y2="0"><stop offset="0" stop-color="#002eff"/><stop offset="0.36" stop-color="#391eff"/><stop offset="1" stop-color="#aa00ff"/></linearGradient><linearGradient id="g496" x1="0" y1="0" x2="1" y2="0"><stop offset="0" stop-color="#002dff"/><stop offset="0.34" stop-color="#351eff"/><stop offset="1" stop-color="#a600ff"/></linearGradient><linearGradient id="g497" x1="0" y1="0" x2="1" y2="0"><stop offset="0" stop-color="#002cff"/><stop offset="0.34" stop-color="#331dff"/><stop offset="1" stop-color="#a300ff"/></linearGradient><linearGradient id="g498" x1="0" y1="0" x2="1" y2="0"><stop offset="0" stop-color="#002bff"/><stop offset="0.34" stop-color="#321dff"/><stop offset="1" stop-color="#9f00ff"/></linearGradient><linearGradient id="g499" x1="0" y1="0" x2="1" y2="0"><stop offset="0" stop-color="#002aff"/><stop offset="0.34" stop-color="#311cff"/><stop offset="1" stop-color="#9c00ff"/></linearGradient><linearGradient id="g500" x1="0" y1="0" x2="1" y2="0"><stop offset="0" stop-color="#002aff"/><stop offset="0.32" stop-color="#2d1cff"/><stop offset="1" stop-color="#9800ff"/></linearGradient><linearGradient id="g501" x1="0" y1="0" x2="1" y2="0"><stop offset="0" stop-color="#0029ff"/><stop offset="0.32" stop-color="#2c1cff"/><stop offset="1" stop-color="#9500ff"/></linearGradient><linearGradient id="g502" x1="0" y1="0" x2="1" y2="0"><stop offset="0" stop-color="#0028ff"/><stop offset="0.32" stop-color="#2b1bff"/><stop offset="1" stop-color="#9200ff"/></linearGradient><linearGradient id="g503" x1="0" y1="0" x2="1" y2="0"><stop offset="0" stop-color="#0027ff"/><stop offset="0.3" stop-color="#271bff"/><stop offset="1" stop-color="#8f00ff"/></linearGradient><linearGradient id="g504" x1="0" y1="0" x2="1" y2="0"><stop offset="0" stop-color="#0026ff"/><stop offset="0.3" stop-color="#261bff"/><stop offset="1" stop-color="#8b00ff"/></linearGradient><linearGradient id="g505" x1="0" y1="0" x2="1" y2="0"><stop offset="0" stop-color="#0025ff"/><stop offset="0.28" stop-color="#221bff"/><stop offset="1" stop-color="#8800ff"/></linearGradient><linearGradient id="g506" x1="0" y1="0" x2="1" y2="0"><stop offset="0" stop-color="#0025ff"/><stop offset="0.28" stop-color="#221aff"/><stop offset="1" stop-color="#8500ff"/></linearGradient><linearGradient id="g507" x1="0" y1="0" x2="1" y2="0"><stop offset="0" stop-color="#0024ff"/><stop offset="0.28" stop-color="#211aff"/><stop offset="1" stop-color="#8200ff"/></linearGradient><linearGradient id="g508" x1="0" y1="0" x2="1" y2="0"><stop offset="0" stop-color="#0023ff"/><stop offset="0.26" stop-color="#1d1aff"/><stop offset="1" stop-color="#7f00ff"/></linearGradient><linearGradient id="g509" x1="0" y1="0" x2="1" y2="0"><stop offset="0" stop-color="#0022ff"/><stop offset="0.26" stop-color="#1d19ff"/><stop offset="1" stop-color="#7c00ff"/></linearGradient><linearGradient id="g510" x1="0" y1="0" x2="1" y2="0"><stop offset="0" stop-color="#0021ff"/><stop offset="1" stop-color="#7900ff"/></linearGradient><linearGradient id="g511" x1="0" y1="0" x2="1" y2="0"><stop offset="0" stop-color="#0021ff"/><stop offset="1" stop-color="#7600ff"/></linearGradient><linearGradient id="g512" x1="0" y1="0" x2="1" y2="0"><stop offset="0" stop-color="#0020ff"/><stop offset="1" stop-color="#7400ff"/></linearGradient><linearGradient id="g513" x1="0" y1="0" x2="1" y2="0"><stop offset="0" stop-color="#001fff"/><stop offset="1" stop-color="#7100ff"/></linearGradient><linearGradient id="g514" x1="0" y1="0" x2="1" y2="0"><stop offset="0" stop-color="#001eff"/><stop offset="1" stop-color="#6e00ff"/></linearGradient><linearGradient id="g515" x1="0" y1="0" x2="1" y2="0"><stop offset="0" stop-color="#001eff"/><stop offset="1" stop-color="#6b00ff"/></linearGradient><linearGradient id="g516" x1="0" y1="0" x2="1" y2="0"><stop offset="0" stop-color="#001dff"/><stop offset="1" stop-color="#6900ff"/></linearGradient><linearGradient id="g517" x1="0" y1="0" x2="1" y2="0"><stop offset="0" stop-color="#001cff"/><stop offset="1" stop-color="#6600ff"/></linearGradient><linearGradient id="g518" x1="0" y1="0" x2="1" y2="0"><stop offset="0" stop-color="#001bff"/><stop offset="1" stop-color="#6300ff"/></linearGradient><linearGradient id="g519" x1="0" y1="0" x2="1" y2="0"><stop offset="0" stop-color="#001bff"/><stop offset="1" stop-color="#6100ff"/></linearGradient><linearGradient id="g520" x1="0" y1="0" x2="1" y2="0"><stop offset="0" stop-color="#001aff"/><stop offset="1" stop-color="#5e00ff"/></linearGradient><linearGradient id="g521" x1="0" y1="0" x2="1" y2="0"><stop offset="0" stop-color="#0019ff"/><stop offset="1" stop-color="#5c00ff"/></linearGradient><linearGradient id="g522" x1="0" y1="0" x2="1" y2="0"><stop offset="0" stop-color="#0019ff"/><stop offset="1" stop-color="#5900ff"/></linearGradient><linearGradient id="g523" x1="0" y1="0" x2="1" y2="0"><stop offset="0" stop-color="#0018ff"/><stop offset="1" stop-color="#5700ff"/></linearGradient><linearGradient id="g524" x1="0" y1="0" x2="1" y2="0"><stop offset="0" stop-color="#0017ff"/><stop offset="1" stop-color="#5400ff"/></linearGradient><linearGradient id="g525" x1="0" y1="0" x2="1" y2="0"><stop offset="0" stop-color="#0017ff"/><stop offset="1" stop-color="#5200ff"/></linearGradient><linearGradient id="g526" x1="0" y1="0" x2="1" y2="0"><stop offset="0" stop-color="#0016ff"/><stop offset="1" stop-color="#5000ff"/></linearGradient><linearGradient id="g527" x1="0" y1="0" x2="1" y2="0"><stop offset="0" stop-color="#0016ff"/><stop offset="1" stop-color="#4d00ff"/></linearGradient><linearGradient id="g528" x1="0" y1="0" x2="1" y2="0"><stop offset="0" stop-color="#0015ff"/><stop offset="1" stop-color="#4b00ff"/></linearGradient><linearGradient id="g529" x1="0" y1="0" x2="1" y2="0"><stop offset="0" stop-color="#0014ff"/><stop offset="1" stop-color="#4900ff"/></linearGradient><linearGradient id="g530" x1="0" y1="0" x2="1" y2="0"><stop offset="0" stop-color="#0014ff"/><stop offset="1" stop-color="#4600ff"/></linearGradient><linearGradient id="g531" x1="0" y1="0" x2="1" y2="0"><stop offset="0" stop-color="#0013ff"/><stop offset="1" stop-color="#4400ff"/></linearGradient><linearGradient id="g532" x1="0" y1="0" x2="1" y2="0"><stop offset="0" stop-color="#0012ff"/><stop offset="1" stop-color="#4200ff"/></linearGradient><linearGradient id="g533" x1="0" y1="0" x2="1" y2="0"><stop offset="0" stop-color="#0012ff"/><stop offset="1" stop-color="#4000ff"/></linearGradient><linearGradient id="g534" x1="0" y1="0" x2="1" y2="0"><stop offset="0" stop-color="#0011ff"/><stop offset="1" stop-color="#3e00ff"/></linearGradient><linearGradient id="g535" x1="0" y1="0" x2="1" y2="0"><stop offset="0" stop-color="#0011ff"/><stop offset="1" stop-color="#3c00ff"/></linearGradient><linearGradient id="g536" x1="0" y1="0" x2="1" y2="0"><stop offset="0" stop-color="#0010ff"/><stop offset="1" stop-color="#3a00ff"/></linearGradient><linearGradient id="g537" x1="0" y1="0" x2="1" y2="0"><stop offset="0" stop-color="#0010ff"/><stop offset="1" stop-color="#3800ff"/></linearGradient><linearGradient id="g538" x1="0" y1="0" x2="1" y2="0"><stop offset="0" stop-color="#000fff"/><stop offset="1" stop-color="#3600ff"/></linearGradient><linearGradient id="g539" x1="0" y1="0" x2="1" y2="0"><stop offset="0" stop-color="#000eff"/><stop offset="1" stop-color="#3400ff"/></linearGradient><linearGradient id="g540" x1="0" y1="0" x2="1" y2="0"><stop offset="0" stop-color="#000eff"/><stop offset="1" stop-color="#3200ff"/></linearGradient><linearGradient id="g541" x1="0" y1="0" x2="1" y2="0"><stop offset="0" stop-color="#000dff"/><stop offset="1" stop-color="#3000ff"/></linearGradient><linearGradient id="g542" x1="0" y1="0" x2="1" y2="0"><stop offset="0" stop-color="#000dff"/><stop offset="1" stop-color="#2e00ff"/></linearGradient><linearGradient id="g543" x1="0" y1="0" x2="1" y2="0"><stop offset="0" stop-color="#000cff"/><stop offset="1" stop-color="#2c00ff"/></linearGradient><linearGradient id="g544" x1="0" y1="0" x2="1" y2="0"><stop offset="0" stop-color="#000cff"/><stop offset="1" stop-color="#2a00ff"/></linearGradient><linearGradient id="g545" x1="0" y1="0" x2="1" y2="0"><stop offset="0" stop-color="#000bff"/><stop offset="1" stop-color="#2800ff"/></linearGradient><linearGradient id="g546" x1="0" y1="0" x2="1" y2="0"><stop offset="0" stop-color="#000bff"/><stop offset="1" stop-color="#2600ff"/></linearGradient><linearGradient id="g547" x1="0" y1="0" x2="1" y2="0"><stop offset="0" stop-color="#000aff"/><stop offset="1" stop-color="#2400ff"/></linearGradient><linearGradient id="g548" x1="0" y1="0" x2="1" y2="0"><stop offset="0" stop-color="#000aff"/><stop offset="1" stop-color="#2200ff"/></linearGradient><linearGradient id="g549" x1="0" y1="0" x2="1" y2="0"><stop offset="0" stop-color="#0009ff"/><stop offset="1" stop-color="#2100ff"/></linearGradient><linearGradient id="g550" x1="0" y1="0" x2="1" y2="0"><stop offset="0" stop-color="#0009ff"/><stop offset="1" stop-color="#1f00ff"/></linearGradient><linearGradient id="g551" x1="0" y1="0" x2="1" y2="0"><stop offset="0" stop-color="#0008ff"/><stop offset="1" stop-color="#1d00ff"/></linearGradient><linearGradient id="g552" x1="0" y1="0" x2="1" y2="0"><stop offset="0" stop-color="#0008ff"/><stop offset="1" stop-color="#1b00ff"/></linearGradient><linearGradient id="g553" x1="0" y1="0" x2="1" y2="0"><stop offset="0" stop-color="#0007ff"/><stop offset="1" stop-color="#1a00ff"/></linearGradient><linearGradient id="g554" x1="0" y1="0" x2="1" y2="0"><stop offset="0" stop-color="#0007ff"/><stop offset="1" stop-color="#1800ff"/></linearGradient><linearGradient id="g555" x1="0" y1="0" x2="1" y2="0"><stop offset="0" stop-color="#0006ff"/><stop offset="1" stop-color="#1600ff"/></linearGradient><linearGradient id="g556" x1="0" y1="0" x2="1" y2="0"><stop offset="0" stop-color="#0006ff"/><stop offset="1" stop-color="#1500ff"/></linearGradient><linearGradient id="g557" x1="0" y1="0" x2="1" y2="0"><stop offset="0" stop-color="#0005ff"/><stop offset="1" stop-color="#1300ff"/></linearGradient><linearGradient id="g558" x1="0" y1="0" x2="1" y2="0"><stop offset="0" stop-color="#0005ff"/><stop offset="1" stop-color="#1100ff"/></linearGradient><linearGradient id="g559" x1="0" y1="0" x2="1" y2="0"><stop offset="0" stop-color="#0004ff"/><stop offset="1" stop-color="#1000ff"/></linearGradient><linearGradient id="g560" x1="0" y1="0" x2="1" y2="0"><stop offset="0" stop-color="#0004ff"/><stop offset="1" stop-color="#0e00ff"/></linearGradient><linearGradient id="g561" x1="0" y1="0" x2="1" y2="0"><stop offset="0" stop-color="#0003ff"/><stop offset="1" stop-color="#0d00ff"/></linearGradient><linearGradient id="g562" x1="0" y1="0" x2="1" y2="0"><stop offset="0" stop-color="#0003ff"/><stop offset="1" stop-color="#0b00ff"/></linearGradient><linearGradient id="g563" x1="0" y1="0" x2="1" y2="0"><stop offset="0" stop-color="#0003ff"/><stop offset="1" stop-color="#0a00ff"/></linearGradient><linearGradient id="g564" x1="0" y1="0" x2="1" y2="0"><stop offset="0" stop-color="#0002ff"/><stop offset="1" stop-color="#0800ff"/></linearGradient><linearGradient id="g565" x1="0" y1="0" x2="1" y2="0"><stop offset="0" stop-color="#0002ff"/><stop offset="1" stop-color="#0700ff"/></linearGradient><linearGradient id="g566" x1="0" y1="0" x2="1" y2="0"><stop offset="0" stop-color="#0001ff"/><stop offset="1" stop-color="#0500ff"/></linearGradient><linearGradient id="g567" x1="0" y1="0" x2="1" y2="0"><stop offset="0" stop-color="#0001ff"/><stop offset="1" stop-color="#0400ff"/></linearGradient><linearGradient id="g568" x1="0" y1="0" x2="1" y2="0"><stop offset="0" stop-color="#0000ff"/><stop offset="1" stop-color="#0200ff"/></linearGradient><clipPath id="itriclip"><path d="M3277.8,1262.81L1384,217.91L548.5,2307.71Z"/></clipPath><clipPath id="insclip"><rect x="1911" y="492.5" width="277.7" height="187.7"/></clipPath><linearGradient id="g569" x1="1454.74" y1="1266.68" x2="2016.17" y2="291.9" gradientUnits="userSpaceOnUse"><stop offset="0.64" stop-color="#6e9910"/><stop offset="0.79" stop-color="#699900"/><stop offset="0.97" stop-color="#639900"/></linearGradient><linearGradient id="g570" x1="1454.74" y1="1266.68" x2="2026.81" y2="298.1" gradientUnits="userSpaceOnUse"><stop offset="0.64" stop-color="#709910"/><stop offset="0.79" stop-color="#6b9900"/><stop offset="0.97" stop-color="#669900"/></linearGradient><linearGradient id="g571" x1="1454.74" y1="1266.68" x2="2037.38" y2="304.42" gradientUnits="userSpaceOnUse"><stop offset="0.64" stop-color="#729911"/><stop offset="0.79" stop-color="#6e9900"/><stop offset="0.97" stop-color="#699900"/></linearGradient><linearGradient id="g572" x1="1454.74" y1="1266.68" x2="2047.88" y2="310.86" gradientUnits="userSpaceOnUse"><stop offset="0.64" stop-color="#759911"/><stop offset="0.79" stop-color="#709900"/><stop offset="0.97" stop-color="#6b9900"/></linearGradient><linearGradient id="g573" x1="1454.74" y1="1266.68" x2="2058.3" y2="317.41" gradientUnits="userSpaceOnUse"><stop offset="0.64" stop-color="#779911"/><stop offset="0.79" stop-color="#739900"/><stop offset="0.97" stop-color="#6e9900"/></linearGradient><linearGradient id="g574" x1="1454.74" y1="1266.68" x2="2068.66" y2="324.07" gradientUnits="userSpaceOnUse"><stop offset="0.64" stop-color="#799911"/><stop offset="0.79" stop-color="#759900"/><stop offset="0.97" stop-color="#719900"/></linearGradient><linearGradient id="g575" x1="1454.74" y1="1266.68" x2="2078.94" y2="330.85" gradientUnits="userSpaceOnUse"><stop offset="0.64" stop-color="#7b9911"/><stop offset="0.79" stop-color="#789900"/><stop offset="0.97" stop-color="#749900"/></linearGradient><linearGradient id="g576" x1="1454.74" y1="1266.68" x2="2089.15" y2="337.73" gradientUnits="userSpaceOnUse"><stop offset="0.64" stop-color="#7e9911"/><stop offset="0.79" stop-color="#7a9900"/><stop offset="0.97" stop-color="#779900"/></linearGradient><linearGradient id="g577" x1="1454.74" y1="1266.68" x2="2099.28" y2="344.73" gradientUnits="userSpaceOnUse"><stop offset="0.64" stop-color="#809912"/><stop offset="0.79" stop-color="#7d9900"/><stop offset="0.97" stop-color="#7a9900"/></linearGradient><linearGradient id="g578" x1="1454.74" y1="1266.68" x2="2109.33" y2="351.85" gradientUnits="userSpaceOnUse"><stop offset="0.64" stop-color="#839912"/><stop offset="0.79" stop-color="#809900"/><stop offset="0.97" stop-color="#7d9900"/></linearGradient><linearGradient id="g579" x1="1454.74" y1="1266.68" x2="2119.3" y2="359.07" gradientUnits="userSpaceOnUse"><stop offset="0.64" stop-color="#859912"/><stop offset="0.79" stop-color="#829900"/><stop offset="0.97" stop-color="#809900"/></linearGradient><linearGradient id="g580" x1="1454.74" y1="1266.68" x2="2129.2" y2="366.39" gradientUnits="userSpaceOnUse"><stop offset="0.64" stop-color="#879912"/><stop offset="0.79" stop-color="#859900"/><stop offset="0.97" stop-color="#839900"/></linearGradient><linearGradient id="g581" x1="1454.74" y1="1266.68" x2="2139.01" y2="373.83" gradientUnits="userSpaceOnUse"><stop offset="0.64" stop-color="#8a9912"/><stop offset="0.79" stop-color="#889900"/><stop offset="0.97" stop-color="#869900"/></linearGradient><linearGradient id="g582" x1="1454.74" y1="1266.68" x2="2148.75" y2="381.37" gradientUnits="userSpaceOnUse"><stop offset="0.64" stop-color="#8d9913"/><stop offset="0.79" stop-color="#8b9900"/><stop offset="0.97" stop-color="#899900"/></linearGradient><linearGradient id="g583" x1="1454.74" y1="1266.68" x2="2158.4" y2="389.02" gradientUnits="userSpaceOnUse"><stop offset="0.64" stop-color="#8f9913"/><stop offset="0.79" stop-color="#8e9900"/><stop offset="0.97" stop-color="#8c9900"/></linearGradient><linearGradient id="g584" x1="1454.74" y1="1266.68" x2="2167.96" y2="396.78" gradientUnits="userSpaceOnUse"><stop offset="0.64" stop-color="#929913"/><stop offset="0.8" stop-color="#919900"/><stop offset="0.97" stop-color="#909900"/></linearGradient><linearGradient id="g585" x1="1454.74" y1="1266.68" x2="2177.44" y2="404.64" gradientUnits="userSpaceOnUse"><stop offset="0.64" stop-color="#949914"/><stop offset="0.8" stop-color="#949900"/><stop offset="0.97" stop-color="#939900"/></linearGradient><linearGradient id="g586" x1="1454.74" y1="1266.68" x2="2186.83" y2="412.6" gradientUnits="userSpaceOnUse"><stop offset="0.64" stop-color="#979914"/><stop offset="0.8" stop-color="#979900"/><stop offset="0.97" stop-color="#979900"/></linearGradient><linearGradient id="g587" x1="1454.74" y1="1266.68" x2="2196.14" y2="420.67" gradientUnits="userSpaceOnUse"><stop offset="0.64" stop-color="#999814"/><stop offset="0.8" stop-color="#999800"/><stop offset="0.97" stop-color="#999800"/></linearGradient><linearGradient id="g588" x1="1454.74" y1="1266.68" x2="2205.35" y2="428.83" gradientUnits="userSpaceOnUse"><stop offset="0.64" stop-color="#999614"/><stop offset="0.8" stop-color="#999500"/><stop offset="0.97" stop-color="#999500"/></linearGradient><linearGradient id="g589" x1="1454.74" y1="1266.68" x2="2214.48" y2="437.1" gradientUnits="userSpaceOnUse"><stop offset="0.64" stop-color="#999314"/><stop offset="0.81" stop-color="#999200"/><stop offset="0.97" stop-color="#999100"/></linearGradient><linearGradient id="g590" x1="1454.74" y1="1266.68" x2="2223.51" y2="445.46" gradientUnits="userSpaceOnUse"><stop offset="0.64" stop-color="#999014"/><stop offset="0.81" stop-color="#998f00"/><stop offset="0.97" stop-color="#998e00"/></linearGradient><linearGradient id="g591" x1="1454.74" y1="1266.68" x2="2232.46" y2="453.93" gradientUnits="userSpaceOnUse"><stop offset="0.64" stop-color="#998e14"/><stop offset="0.81" stop-color="#998c00"/><stop offset="0.97" stop-color="#998b00"/></linearGradient><linearGradient id="g592" x1="1454.74" y1="1266.68" x2="2241.31" y2="462.49" gradientUnits="userSpaceOnUse"><stop offset="0.64" stop-color="#998b14"/><stop offset="0.81" stop-color="#998900"/><stop offset="0.97" stop-color="#998800"/></linearGradient><linearGradient id="g593" x1="1454.74" y1="1266.68" x2="2250.06" y2="471.15" gradientUnits="userSpaceOnUse"><stop offset="0.64" stop-color="#998914"/><stop offset="0.82" stop-color="#998600"/><stop offset="0.97" stop-color="#998500"/></linearGradient><linearGradient id="g594" x1="1454.74" y1="1266.68" x2="2258.72" y2="479.9" gradientUnits="userSpaceOnUse"><stop offset="0.64" stop-color="#998714"/><stop offset="0.82" stop-color="#998400"/><stop offset="0.97" stop-color="#998200"/></linearGradient><linearGradient id="g595" x1="1454.74" y1="1266.68" x2="2267.29" y2="488.75" gradientUnits="userSpaceOnUse"><stop offset="0.64" stop-color="#998414"/><stop offset="0.82" stop-color="#998100"/><stop offset="0.97" stop-color="#997f00"/></linearGradient><linearGradient id="g596" x1="1454.74" y1="1266.68" x2="2275.75" y2="497.69" gradientUnits="userSpaceOnUse"><stop offset="0.64" stop-color="#998214"/><stop offset="0.83" stop-color="#997e00"/><stop offset="0.97" stop-color="#997c00"/></linearGradient><linearGradient id="g597" x1="1454.74" y1="1266.68" x2="2284.12" y2="506.72" gradientUnits="userSpaceOnUse"><stop offset="0.64" stop-color="#998014"/><stop offset="0.83" stop-color="#997c00"/><stop offset="0.97" stop-color="#997900"/></linearGradient><linearGradient id="g598" x1="1454.74" y1="1266.68" x2="2292.39" y2="515.85" gradientUnits="userSpaceOnUse"><stop offset="0.64" stop-color="#997e14"/><stop offset="0.83" stop-color="#997900"/><stop offset="0.97" stop-color="#997700"/></linearGradient><linearGradient id="g599" x1="1454.74" y1="1266.68" x2="2300.56" y2="525.06" gradientUnits="userSpaceOnUse"><stop offset="0.64" stop-color="#997b14"/><stop offset="0.84" stop-color="#997700"/><stop offset="0.97" stop-color="#997400"/></linearGradient><linearGradient id="g600" x1="1454.74" y1="1266.68" x2="2308.63" y2="534.36" gradientUnits="userSpaceOnUse"><stop offset="0.64" stop-color="#997915"/><stop offset="0.84" stop-color="#997400"/><stop offset="0.97" stop-color="#997200"/></linearGradient><linearGradient id="g601" x1="1454.74" y1="1266.68" x2="2316.59" y2="543.76" gradientUnits="userSpaceOnUse"><stop offset="0.64" stop-color="#997715"/><stop offset="0.85" stop-color="#997200"/><stop offset="0.97" stop-color="#996f00"/></linearGradient><linearGradient id="g602" x1="1454.74" y1="1266.68" x2="2324.45" y2="553.23" gradientUnits="userSpaceOnUse"><stop offset="0.64" stop-color="#997515"/><stop offset="0.85" stop-color="#997000"/><stop offset="0.97" stop-color="#996d00"/></linearGradient><linearGradient id="g603" x1="1454.74" y1="1266.68" x2="2332.21" y2="562.8" gradientUnits="userSpaceOnUse"><stop offset="0.64" stop-color="#997315"/><stop offset="0.85" stop-color="#996d00"/><stop offset="0.97" stop-color="#996a00"/></linearGradient><linearGradient id="g604" x1="1454.74" y1="1266.68" x2="2339.86" y2="572.44" gradientUnits="userSpaceOnUse"><stop offset="0.64" stop-color="#997115"/><stop offset="0.85" stop-color="#996b00"/><stop offset="0.97" stop-color="#996800"/></linearGradient><linearGradient id="g605" x1="1454.74" y1="1266.68" x2="2016.17" y2="291.9" gradientUnits="userSpaceOnUse"><stop offset="0.64" stop-color="#b7ff1b"/><stop offset="0.79" stop-color="#afff00"/><stop offset="0.97" stop-color="#a6ff00"/></linearGradient><linearGradient id="g606" x1="1454.74" y1="1266.68" x2="2026.81" y2="298.1" gradientUnits="userSpaceOnUse"><stop offset="0.64" stop-color="#bbff1b"/><stop offset="0.79" stop-color="#b3ff00"/><stop offset="0.97" stop-color="#aaff00"/></linearGradient><linearGradient id="g607" x1="1454.74" y1="1266.68" x2="2037.38" y2="304.42" gradientUnits="userSpaceOnUse"><stop offset="0.64" stop-color="#bfff1c"/><stop offset="0.79" stop-color="#b7ff00"/><stop offset="0.97" stop-color="#aeff00"/></linearGradient><linearGradient id="g608" x1="1454.74" y1="1266.68" x2="2047.88" y2="310.86" gradientUnits="userSpaceOnUse"><stop offset="0.64" stop-color="#c2ff1c"/><stop offset="0.79" stop-color="#bbff00"/><stop offset="0.97" stop-color="#b3ff00"/></linearGradient><linearGradient id="g609" x1="1454.74" y1="1266.68" x2="2058.3" y2="317.41" gradientUnits="userSpaceOnUse"><stop offset="0.64" stop-color="#c6ff1c"/><stop offset="0.79" stop-color="#bfff00"/><stop offset="0.97" stop-color="#b8ff00"/></linearGradient><linearGradient id="g610" x1="1454.74" y1="1266.68" x2="2068.66" y2="324.07" gradientUnits="userSpaceOnUse"><stop offset="0.64" stop-color="#caff1c"/><stop offset="0.79" stop-color="#c3ff00"/><stop offset="0.97" stop-color="#bcff00"/></linearGradient><linearGradient id="g611" x1="1454.74" y1="1266.68" x2="2078.94" y2="330.85" gradientUnits="userSpaceOnUse"><stop offset="0.64" stop-color="#ceff1d"/><stop offset="0.79" stop-color="#c8ff00"/><stop offset="0.97" stop-color="#c1ff00"/></linearGradient><linearGradient id="g612" x1="1454.74" y1="1266.68" x2="2089.15" y2="337.73" gradientUnits="userSpaceOnUse"><stop offset="0.64" stop-color="#d2ff1d"/><stop offset="0.79" stop-color="#ccff01"/><stop offset="0.97" stop-color="#c6ff00"/></linearGradient><linearGradient id="g613" x1="1454.74" y1="1266.68" x2="2099.28" y2="344.73" gradientUnits="userSpaceOnUse"><stop offset="0.64" stop-color="#d6ff1d"/><stop offset="0.79" stop-color="#d0ff00"/><stop offset="0.97" stop-color="#cbff00"/></linearGradient><linearGradient id="g614" x1="1454.74" y1="1266.68" x2="2109.33" y2="351.85" gradientUnits="userSpaceOnUse"><stop offset="0.64" stop-color="#daff1e"/><stop offset="0.79" stop-color="#d5ff00"/><stop offset="0.97" stop-color="#d0ff00"/></linearGradient><linearGradient id="g615" x1="1454.74" y1="1266.68" x2="2119.3" y2="359.07" gradientUnits="userSpaceOnUse"><stop offset="0.64" stop-color="#deff1e"/><stop offset="0.79" stop-color="#d9ff00"/><stop offset="0.97" stop-color="#d5ff00"/></linearGradient><linearGradient id="g616" x1="1454.74" y1="1266.68" x2="2129.2" y2="366.39" gradientUnits="userSpaceOnUse"><stop offset="0.64" stop-color="#e2ff1e"/><stop offset="0.79" stop-color="#deff00"/><stop offset="0.97" stop-color="#daff00"/></linearGradient><linearGradient id="g617" x1="1454.74" y1="1266.68" x2="2139.01" y2="373.83" gradientUnits="userSpaceOnUse"><stop offset="0.64" stop-color="#e6ff1f"/><stop offset="0.79" stop-color="#e3ff00"/><stop offset="0.97" stop-color="#dfff00"/></linearGradient><linearGradient id="g618" x1="1454.74" y1="1266.68" x2="2148.75" y2="381.37" gradientUnits="userSpaceOnUse"><stop offset="0.64" stop-color="#eaff1f"/><stop offset="0.79" stop-color="#e7ff00"/><stop offset="0.97" stop-color="#e5ff00"/></linearGradient><linearGradient id="g619" x1="1454.74" y1="1266.68" x2="2158.4" y2="389.02" gradientUnits="userSpaceOnUse"><stop offset="0.64" stop-color="#efff20"/><stop offset="0.79" stop-color="#ecff01"/><stop offset="0.97" stop-color="#eaff00"/></linearGradient><linearGradient id="g620" x1="1454.74" y1="1266.68" x2="2167.96" y2="396.78" gradientUnits="userSpaceOnUse"><stop offset="0.64" stop-color="#f3ff20"/><stop offset="0.8" stop-color="#f1ff00"/><stop offset="0.97" stop-color="#f0ff00"/></linearGradient><linearGradient id="g621" x1="1454.74" y1="1266.68" x2="2177.44" y2="404.64" gradientUnits="userSpaceOnUse"><stop offset="0.64" stop-color="#f7ff21"/><stop offset="0.8" stop-color="#f6ff00"/><stop offset="0.97" stop-color="#f5ff00"/></linearGradient><linearGradient id="g622" x1="1454.74" y1="1266.68" x2="2186.83" y2="412.6" gradientUnits="userSpaceOnUse"><stop offset="0.64" stop-color="#fcff21"/><stop offset="0.8" stop-color="#fbff00"/><stop offset="0.97" stop-color="#fbff00"/></linearGradient><linearGradient id="g623" x1="1454.74" y1="1266.68" x2="2196.14" y2="420.67" gradientUnits="userSpaceOnUse"><stop offset="0.64" stop-color="#fffe21"/><stop offset="0.8" stop-color="#fffd00"/><stop offset="0.97" stop-color="#fffd00"/></linearGradient><linearGradient id="g624" x1="1454.74" y1="1266.68" x2="2205.35" y2="428.83" gradientUnits="userSpaceOnUse"><stop offset="0.64" stop-color="#fff921"/><stop offset="0.8" stop-color="#fff801"/><stop offset="0.97" stop-color="#fff800"/></linearGradient><linearGradient id="g625" x1="1454.74" y1="1266.68" x2="2214.48" y2="437.1" gradientUnits="userSpaceOnUse"><stop offset="0.64" stop-color="#fff521"/><stop offset="0.81" stop-color="#fff300"/><stop offset="0.97" stop-color="#fff200"/></linearGradient><linearGradient id="g626" x1="1454.74" y1="1266.68" x2="2223.51" y2="445.46" gradientUnits="userSpaceOnUse"><stop offset="0.64" stop-color="#fff121"/><stop offset="0.81" stop-color="#ffee00"/><stop offset="0.97" stop-color="#ffed00"/></linearGradient><linearGradient id="g627" x1="1454.74" y1="1266.68" x2="2232.46" y2="453.93" gradientUnits="userSpaceOnUse"><stop offset="0.64" stop-color="#ffec21"/><stop offset="0.81" stop-color="#ffea00"/><stop offset="0.97" stop-color="#ffe700"/></linearGradient><linearGradient id="g628" x1="1454.74" y1="1266.68" x2="2241.31" y2="462.49" gradientUnits="userSpaceOnUse"><stop offset="0.64" stop-color="#ffe821"/><stop offset="0.81" stop-color="#ffe501"/><stop offset="0.97" stop-color="#ffe200"/></linearGradient><linearGradient id="g629" x1="1454.74" y1="1266.68" x2="2250.06" y2="471.15" gradientUnits="userSpaceOnUse"><stop offset="0.64" stop-color="#ffe422"/><stop offset="0.82" stop-color="#ffe000"/><stop offset="0.97" stop-color="#ffdd00"/></linearGradient><linearGradient id="g630" x1="1454.74" y1="1266.68" x2="2258.72" y2="479.9" gradientUnits="userSpaceOnUse"><stop offset="0.64" stop-color="#ffe022"/><stop offset="0.82" stop-color="#ffdc00"/><stop offset="0.97" stop-color="#ffd800"/></linearGradient><linearGradient id="g631" x1="1454.74" y1="1266.68" x2="2267.29" y2="488.75" gradientUnits="userSpaceOnUse"><stop offset="0.64" stop-color="#ffdc22"/><stop offset="0.82" stop-color="#ffd701"/><stop offset="0.97" stop-color="#ffd300"/></linearGradient><linearGradient id="g632" x1="1454.74" y1="1266.68" x2="2275.75" y2="497.69" gradientUnits="userSpaceOnUse"><stop offset="0.64" stop-color="#ffd922"/><stop offset="0.83" stop-color="#ffd300"/><stop offset="0.97" stop-color="#ffcf00"/></linearGradient><linearGradient id="g633" x1="1454.74" y1="1266.68" x2="2284.12" y2="506.72" gradientUnits="userSpaceOnUse"><stop offset="0.64" stop-color="#ffd522"/><stop offset="0.83" stop-color="#ffce00"/><stop offset="0.97" stop-color="#ffca00"/></linearGradient><linearGradient id="g634" x1="1454.74" y1="1266.68" x2="2292.39" y2="515.85" gradientUnits="userSpaceOnUse"><stop offset="0.64" stop-color="#ffd122"/><stop offset="0.83" stop-color="#ffca01"/><stop offset="0.97" stop-color="#ffc600"/></linearGradient><linearGradient id="g635" x1="1454.74" y1="1266.68" x2="2300.56" y2="525.06" gradientUnits="userSpaceOnUse"><stop offset="0.64" stop-color="#ffce22"/><stop offset="0.84" stop-color="#ffc600"/><stop offset="0.97" stop-color="#ffc100"/></linearGradient><linearGradient id="g636" x1="1454.74" y1="1266.68" x2="2308.63" y2="534.36" gradientUnits="userSpaceOnUse"><stop offset="0.64" stop-color="#ffca22"/><stop offset="0.84" stop-color="#ffc200"/><stop offset="0.97" stop-color="#ffbd00"/></linearGradient><linearGradient id="g637" x1="1454.74" y1="1266.68" x2="2316.59" y2="543.76" gradientUnits="userSpaceOnUse"><stop offset="0.64" stop-color="#ffc722"/><stop offset="0.85" stop-color="#ffbe00"/><stop offset="0.97" stop-color="#ffb900"/></linearGradient><linearGradient id="g638" x1="1454.74" y1="1266.68" x2="2324.45" y2="553.23" gradientUnits="userSpaceOnUse"><stop offset="0.64" stop-color="#ffc323"/><stop offset="0.85" stop-color="#ffba00"/><stop offset="0.97" stop-color="#ffb500"/></linearGradient><linearGradient id="g639" x1="1454.74" y1="1266.68" x2="2332.21" y2="562.8" gradientUnits="userSpaceOnUse"><stop offset="0.64" stop-color="#ffc023"/><stop offset="0.85" stop-color="#ffb601"/><stop offset="0.97" stop-color="#ffb100"/></linearGradient><linearGradient id="g640" x1="1454.74" y1="1266.68" x2="2339.86" y2="572.44" gradientUnits="userSpaceOnUse"><stop offset="0.64" stop-color="#ffbd23"/><stop offset="0.85" stop-color="#ffb200"/><stop offset="0.97" stop-color="#ffad00"/></linearGradient><linearGradient id="g641" x1="0" y1="0" x2="0" y2="1"><stop offset="0" stop-color="#ff5252"/><stop offset="1" stop-color="#ff1010"/></linearGradient><linearGradient id="g642" x1="0" y1="0" x2="0" y2="1"><stop offset="0" stop-color="#5fae5f"/><stop offset="1" stop-color="#0a7d0a"/></linearGradient><linearGradient id="g643" x1="0" y1="0" x2="0" y2="1"><stop offset="0" stop-color="#474747"/><stop offset="1" stop-color="#1f1f1f"/></linearGradient><linearGradient id="g644" x1="0" y1="0" x2="0" y2="1"><stop offset="0" stop-color="#acacac"/><stop offset="0.5" stop-color="#8a8a8a"/><stop offset="1" stop-color="#5a5a5a"/></linearGradient><linearGradient id="g645" x1="0" y1="0" x2="0" y2="1"><stop offset="0" stop-color="#1a1a1a"/><stop offset="1" stop-color="#343434"/></linearGradient><linearGradient id="g646" x1="0" y1="0" x2="0" y2="1"><stop offset="0" stop-color="#a8a8a8"/><stop offset="1" stop-color="#6e6e6e"/></linearGradient><linearGradient id="g647" x1="0" y1="0" x2="0" y2="1"><stop offset="0" stop-color="#8e8e8e"/><stop offset="1" stop-color="#6a6a6a"/></linearGradient><linearGradient id="g648" x1="0" y1="0" x2="0" y2="1"><stop offset="0" stop-color="#c4c4c4"/><stop offset="1" stop-color="#8c8c8c"/></linearGradient><linearGradient id="g649" x1="0" y1="0" x2="0" y2="1"><stop offset="0" stop-color="#8a8a8a"/><stop offset="1" stop-color="#b4b4b4"/></linearGradient></defs><rect x="0" y="0" width="2214" height="1288" fill="#333333"/><text x="7.5" y="47.7" font-size="54.07" fill="#efefef" textLength="445" lengthAdjust="spacingAndGlyphs">Saturation Sweeps</text><text x="162.3" y="118" font-size="28.34" fill="#efefef" textLength="144.5" lengthAdjust="spacingAndGlyphs">dE Formula:</text><rect x="316.3" y="90.2" width="180.2" height="35.4" fill="#262626"/><rect x="318.1" y="92" width="176.6" height="31.8" fill="url(#g1)"/><text x="323.9" y="117.9" font-size="22.97" fill="#f0f0f0" textLength="45.7" lengthAdjust="spacingAndGlyphs">2000</text><path d="M476,104.4 L488,104.4 L482,110.9 Z" fill="#000"/><text x="741.5" y="36.9" font-size="28.2" fill="#efefef" textLength="79.2" lengthAdjust="spacingAndGlyphs">Levels:</text><rect x="831.6" y="9.7" width="449.2" height="33" fill="#262626"/><rect x="833.4" y="11.5" width="445.6" height="29.4" fill="url(#g2)"/><text x="838.2" y="36.9" font-size="22.53" fill="#f0f0f0" textLength="118" lengthAdjust="spacingAndGlyphs">20% Sweeps</text><path d="M1261.6,22.7 L1273.6,22.7 L1267.6,29.2 Z" fill="#000"/><text x="239.7" y="160.4" font-size="18.9" fill="#dcdcdc" text-anchor="middle" textLength="104.7" lengthAdjust="spacingAndGlyphs">DeltaE 2000</text><rect x="57" y="168" width="413" height="512" fill="#232323"/><line x1="112" y1="168" x2="112" y2="680" stroke="#8e8e8e" stroke-width="2"/><line x1="167" y1="168" x2="167" y2="680" stroke="#8e8e8e" stroke-width="2"/><line x1="222" y1="168" x2="222" y2="680" stroke="#8e8e8e" stroke-width="2"/><line x1="276" y1="168" x2="276" y2="680" stroke="#8e8e8e" stroke-width="2"/><line x1="331" y1="168" x2="331" y2="680" stroke="#8e8e8e" stroke-width="2"/><line x1="386" y1="168" x2="386" y2="680" stroke="#8e8e8e" stroke-width="2"/><line x1="441" y1="168" x2="441" y2="680" stroke="#8e8e8e" stroke-width="2"/><rect x="57" y="175.5" width="10.7" height="9" fill="#000"/><rect x="57" y="176.5" width="8.7" height="6" fill="url(#g3)"/><rect x="57" y="184.5" width="82" height="9" fill="#000"/><rect x="57" y="185.5" width="80" height="6" fill="url(#g4)"/><rect x="57" y="193.5" width="19.8" height="9" fill="#000"/><rect x="57" y="194.5" width="17.8" height="6" fill="url(#g5)"/><rect x="57" y="202.5" width="137.8" height="9" fill="#000"/><rect x="57" y="203.5" width="135.8" height="6" fill="url(#g6)"/><rect x="57" y="211.5" width="18.9" height="9" fill="#000"/><rect x="57" y="212.5" width="16.9" height="6" fill="url(#g7)"/><rect x="57" y="220.5" width="63.9" height="9" fill="#000"/><rect x="57" y="221.5" width="61.9" height="6" fill="url(#g8)"/><rect x="57" y="261" width="68.9" height="9" fill="#000"/><rect x="57" y="262" width="66.9" height="6" fill="url(#g9)"/><rect x="57" y="270" width="139.6" height="9" fill="#000"/><rect x="57" y="271" width="137.6" height="6" fill="url(#g10)"/><rect x="57" y="279" width="115.7" height="9" fill="#000"/><rect x="57" y="280" width="113.7" height="6" fill="url(#g11)"/><rect x="57" y="288" width="146.9" height="9" fill="#000"/><rect x="57" y="289" width="144.9" height="6" fill="url(#g12)"/><rect x="57" y="297" width="70.9" height="9" fill="#000"/><rect x="57" y="298" width="68.9" height="6" fill="url(#g13)"/><rect x="57" y="306" width="101.7" height="9" fill="#000"/><rect x="57" y="307" width="99.7" height="6" fill="url(#g14)"/><rect x="57" y="346.5" width="70.6" height="9" fill="#000"/><rect x="57" y="347.5" width="68.6" height="6" fill="url(#g15)"/><rect x="57" y="355.5" width="139.6" height="9" fill="#000"/><rect x="57" y="356.5" width="137.6" height="6" fill="url(#g16)"/><rect x="57" y="364.5" width="178.7" height="9" fill="#000"/><rect x="57" y="365.5" width="176.7" height="6" fill="url(#g17)"/><rect x="57" y="373.5" width="126.6" height="9" fill="#000"/><rect x="57" y="374.5" width="124.6" height="6" fill="url(#g18)"/><rect x="57" y="382.5" width="77.6" height="9" fill="#000"/><rect x="57" y="383.5" width="75.6" height="6" fill="url(#g19)"/><rect x="57" y="391.5" width="86.7" height="9" fill="#000"/><rect x="57" y="392.5" width="84.7" height="6" fill="url(#g20)"/><rect x="57" y="432" width="21.7" height="9" fill="#000"/><rect x="57" y="433" width="19.7" height="6" fill="url(#g21)"/><rect x="57" y="441" width="108.6" height="9" fill="#000"/><rect x="57" y="442" width="106.6" height="6" fill="url(#g22)"/><rect x="57" y="450" width="124.9" height="9" fill="#000"/><rect x="57" y="451" width="122.9" height="6" fill="url(#g23)"/><rect x="57" y="459" width="99.8" height="9" fill="#000"/><rect x="57" y="460" width="97.8" height="6" fill="url(#g24)"/><rect x="57" y="468" width="52.6" height="9" fill="#000"/><rect x="57" y="469" width="50.6" height="6" fill="url(#g25)"/><rect x="57" y="477" width="64.8" height="9" fill="#000"/><rect x="57" y="478" width="62.8" height="6" fill="url(#g26)"/><rect x="57" y="517.5" width="36.6" height="9" fill="#000"/><rect x="57" y="518.5" width="34.6" height="6" fill="url(#g27)"/><rect x="57" y="526.5" width="75.7" height="9" fill="#000"/><rect x="57" y="527.5" width="73.7" height="6" fill="url(#g28)"/><rect x="57" y="535.5" width="79.6" height="9" fill="#000"/><rect x="57" y="536.5" width="77.6" height="6" fill="url(#g29)"/><rect x="57" y="544.5" width="92.8" height="9" fill="#000"/><rect x="57" y="545.5" width="90.8" height="6" fill="url(#g30)"/><rect x="57" y="553.5" width="50.3" height="9" fill="#000"/><rect x="57" y="554.5" width="48.3" height="6" fill="url(#g31)"/><rect x="57" y="562.5" width="84.8" height="9" fill="#000"/><rect x="57" y="563.5" width="82.8" height="6" fill="url(#g32)"/><rect x="57" y="656.5" width="94.2" height="8.5" fill="#000"/><rect x="57" y="658.3" width="92.2" height="5" fill="url(#g33)"/><rect x="57" y="168" width="413" height="512" fill="none" stroke="#9c9c9c" stroke-width="2"/><line x1="49" y1="168" x2="56" y2="168" stroke="#e8e8e8" stroke-width="2"/><line x1="49" y1="253.5" x2="56" y2="253.5" stroke="#e8e8e8" stroke-width="2"/><line x1="49" y1="339" x2="56" y2="339" stroke="#e8e8e8" stroke-width="2"/><line x1="49" y1="424.5" x2="56" y2="424.5" stroke="#e8e8e8" stroke-width="2"/><line x1="49" y1="510" x2="56" y2="510" stroke="#e8e8e8" stroke-width="2"/><line x1="49" y1="595.5" x2="56" y2="595.5" stroke="#e8e8e8" stroke-width="2"/><line x1="49" y1="680" x2="56" y2="680" stroke="#e8e8e8" stroke-width="2"/><line x1="57" y1="681" x2="57" y2="688" stroke="#e8e8e8" stroke-width="2"/><text x="57" y="708.7" font-size="19.48" fill="#dcdcdc" text-anchor="middle">0</text><line x1="112" y1="681" x2="112" y2="688" stroke="#e8e8e8" stroke-width="2"/><text x="112" y="708.7" font-size="19.48" fill="#dcdcdc" text-anchor="middle">2</text><line x1="167" y1="681" x2="167" y2="688" stroke="#e8e8e8" stroke-width="2"/><text x="167" y="708.7" font-size="19.48" fill="#dcdcdc" text-anchor="middle">4</text><line x1="222" y1="681" x2="222" y2="688" stroke="#e8e8e8" stroke-width="2"/><text x="222" y="708.7" font-size="19.48" fill="#dcdcdc" text-anchor="middle">6</text><line x1="276" y1="681" x2="276" y2="688" stroke="#e8e8e8" stroke-width="2"/><text x="276" y="708.7" font-size="19.48" fill="#dcdcdc" text-anchor="middle">8</text><line x1="331" y1="681" x2="331" y2="688" stroke="#e8e8e8" stroke-width="2"/><text x="331" y="708.7" font-size="19.48" fill="#dcdcdc" text-anchor="middle">10</text><line x1="386" y1="681" x2="386" y2="688" stroke="#e8e8e8" stroke-width="2"/><text x="386" y="708.7" font-size="19.48" fill="#dcdcdc" text-anchor="middle">12</text><line x1="441" y1="681" x2="441" y2="688" stroke="#e8e8e8" stroke-width="2"/><text x="441" y="708.7" font-size="19.48" fill="#dcdcdc" text-anchor="middle">14</text><text x="8.5" y="217.75" font-size="20.35" fill="#dcdcdc" textLength="47" lengthAdjust="spacingAndGlyphs">100%</text><text x="18.1" y="303.25" font-size="20.35" fill="#dcdcdc" textLength="37.4" lengthAdjust="spacingAndGlyphs">80%</text><text x="18.1" y="388.75" font-size="20.35" fill="#dcdcdc" textLength="37.4" lengthAdjust="spacingAndGlyphs">60%</text><text x="18.1" y="474.25" font-size="20.35" fill="#dcdcdc" textLength="37.4" lengthAdjust="spacingAndGlyphs">40%</text><text x="18.1" y="559.75" font-size="20.35" fill="#dcdcdc" textLength="37.4" lengthAdjust="spacingAndGlyphs">20%</text><text x="23.5" y="644.75" font-size="20.35" fill="#dcdcdc" textLength="32" lengthAdjust="spacingAndGlyphs">100</text><text x="619" y="89.3" font-size="19.77" fill="#dcdcdc" text-anchor="middle">Delta L</text><rect x="541" y="96" width="191" height="374" fill="#232323"/><line x1="541" y1="158" x2="732" y2="158" stroke="#8e8e8e" stroke-width="2"/><line x1="541" y1="222" x2="732" y2="222" stroke="#8e8e8e" stroke-width="2"/><line x1="541" y1="285" x2="732" y2="285" stroke="#8e8e8e" stroke-width="2"/><line x1="541" y1="346" x2="732" y2="346" stroke="#8e8e8e" stroke-width="2"/><line x1="541" y1="409" x2="732" y2="409" stroke="#8e8e8e" stroke-width="2"/><rect x="541" y="96" width="191" height="374" fill="none" stroke="#9c9c9c" stroke-width="2"/><line x1="534" y1="96" x2="540" y2="96" stroke="#e8e8e8" stroke-width="2"/><text x="532.5" y="103.3" font-size="20.06" fill="#dcdcdc" text-anchor="end">15</text><line x1="534" y1="158" x2="540" y2="158" stroke="#e8e8e8" stroke-width="2"/><text x="532.5" y="165.3" font-size="20.06" fill="#dcdcdc" text-anchor="end">10</text><line x1="534" y1="222" x2="540" y2="222" stroke="#e8e8e8" stroke-width="2"/><text x="532.5" y="229.3" font-size="20.06" fill="#dcdcdc" text-anchor="end">5</text><line x1="534" y1="285" x2="540" y2="285" stroke="#e8e8e8" stroke-width="2"/><text x="532.5" y="292.3" font-size="20.06" fill="#dcdcdc" text-anchor="end">0</text><line x1="534" y1="346" x2="540" y2="346" stroke="#e8e8e8" stroke-width="2"/><text x="532.5" y="353.3" font-size="20.06" fill="#dcdcdc" text-anchor="end">-5</text><line x1="534" y1="409" x2="540" y2="409" stroke="#e8e8e8" stroke-width="2"/><text x="532.5" y="416.3" font-size="20.06" fill="#dcdcdc" text-anchor="end">-10</text><line x1="534" y1="470" x2="540" y2="470" stroke="#e8e8e8" stroke-width="2"/><text x="532.5" y="478.8" font-size="20.06" fill="#dcdcdc" text-anchor="end">-15</text><line x1="541" y1="471" x2="541" y2="478" stroke="#e8e8e8" stroke-width="2"/><line x1="732" y1="471" x2="732" y2="478" stroke="#e8e8e8" stroke-width="2"/><text x="636.5" y="492.2" font-size="19.77" fill="#dcdcdc" text-anchor="middle">100%</text><text x="880.5" y="89.3" font-size="19.77" fill="#dcdcdc" text-anchor="middle">Delta C</text><rect x="802" y="96" width="192" height="374" fill="#232323"/><line x1="802" y1="158" x2="994" y2="158" stroke="#8e8e8e" stroke-width="2"/><line x1="802" y1="222" x2="994" y2="222" stroke="#8e8e8e" stroke-width="2"/><line x1="802" y1="285" x2="994" y2="285" stroke="#8e8e8e" stroke-width="2"/><line x1="802" y1="346" x2="994" y2="346" stroke="#8e8e8e" stroke-width="2"/><line x1="802" y1="409" x2="994" y2="409" stroke="#8e8e8e" stroke-width="2"/><rect x="802" y="96" width="192" height="374" fill="none" stroke="#9c9c9c" stroke-width="2"/><line x1="795" y1="96" x2="801" y2="96" stroke="#e8e8e8" stroke-width="2"/><text x="793.5" y="103.3" font-size="20.06" fill="#dcdcdc" text-anchor="end">15</text><line x1="795" y1="158" x2="801" y2="158" stroke="#e8e8e8" stroke-width="2"/><text x="793.5" y="165.3" font-size="20.06" fill="#dcdcdc" text-anchor="end">10</text><line x1="795" y1="222" x2="801" y2="222" stroke="#e8e8e8" stroke-width="2"/><text x="793.5" y="229.3" font-size="20.06" fill="#dcdcdc" text-anchor="end">5</text><line x1="795" y1="285" x2="801" y2="285" stroke="#e8e8e8" stroke-width="2"/><text x="793.5" y="292.3" font-size="20.06" fill="#dcdcdc" text-anchor="end">0</text><line x1="795" y1="346" x2="801" y2="346" stroke="#e8e8e8" stroke-width="2"/><text x="793.5" y="353.3" font-size="20.06" fill="#dcdcdc" text-anchor="end">-5</text><line x1="795" y1="409" x2="801" y2="409" stroke="#e8e8e8" stroke-width="2"/><text x="793.5" y="416.3" font-size="20.06" fill="#dcdcdc" text-anchor="end">-10</text><line x1="795" y1="470" x2="801" y2="470" stroke="#e8e8e8" stroke-width="2"/><text x="793.5" y="478.8" font-size="20.06" fill="#dcdcdc" text-anchor="end">-15</text><line x1="802" y1="471" x2="802" y2="478" stroke="#e8e8e8" stroke-width="2"/><line x1="994" y1="471" x2="994" y2="478" stroke="#e8e8e8" stroke-width="2"/><text x="898" y="492.2" font-size="19.77" fill="#dcdcdc" text-anchor="middle">100%</text><text x="1142.5" y="89.3" font-size="19.77" fill="#dcdcdc" text-anchor="middle">Delta H</text><rect x="1064" y="96" width="192" height="374" fill="#232323"/><line x1="1064" y1="158" x2="1256" y2="158" stroke="#8e8e8e" stroke-width="2"/><line x1="1064" y1="222" x2="1256" y2="222" stroke="#8e8e8e" stroke-width="2"/><line x1="1064" y1="285" x2="1256" y2="285" stroke="#8e8e8e" stroke-width="2"/><line x1="1064" y1="346" x2="1256" y2="346" stroke="#8e8e8e" stroke-width="2"/><line x1="1064" y1="409" x2="1256" y2="409" stroke="#8e8e8e" stroke-width="2"/><rect x="1064" y="96" width="192" height="374" fill="none" stroke="#9c9c9c" stroke-width="2"/><line x1="1057" y1="96" x2="1063" y2="96" stroke="#e8e8e8" stroke-width="2"/><text x="1055.5" y="103.3" font-size="20.06" fill="#dcdcdc" text-anchor="end">15</text><line x1="1057" y1="158" x2="1063" y2="158" stroke="#e8e8e8" stroke-width="2"/><text x="1055.5" y="165.3" font-size="20.06" fill="#dcdcdc" text-anchor="end">10</text><line x1="1057" y1="222" x2="1063" y2="222" stroke="#e8e8e8" stroke-width="2"/><text x="1055.5" y="229.3" font-size="20.06" fill="#dcdcdc" text-anchor="end">5</text><line x1="1057" y1="285" x2="1063" y2="285" stroke="#e8e8e8" stroke-width="2"/><text x="1055.5" y="292.3" font-size="20.06" fill="#dcdcdc" text-anchor="end">0</text><line x1="1057" y1="346" x2="1063" y2="346" stroke="#e8e8e8" stroke-width="2"/><text x="1055.5" y="353.3" font-size="20.06" fill="#dcdcdc" text-anchor="end">-5</text><line x1="1057" y1="409" x2="1063" y2="409" stroke="#e8e8e8" stroke-width="2"/><text x="1055.5" y="416.3" font-size="20.06" fill="#dcdcdc" text-anchor="end">-10</text><line x1="1057" y1="470" x2="1063" y2="470" stroke="#e8e8e8" stroke-width="2"/><text x="1055.5" y="478.8" font-size="20.06" fill="#dcdcdc" text-anchor="end">-15</text><line x1="1064" y1="471" x2="1064" y2="478" stroke="#e8e8e8" stroke-width="2"/><line x1="1256" y1="471" x2="1256" y2="478" stroke="#e8e8e8" stroke-width="2"/><text x="1160" y="492.2" font-size="19.77" fill="#dcdcdc" text-anchor="middle">100%</text><rect x="559" y="280" width="154" height="4" fill="#000"/><rect x="821" y="150" width="154" height="134" fill="#000"/><rect x="823" y="152" width="150" height="130" fill="url(#g34)"/><rect x="1083" y="274.5" width="154" height="9" fill="#000"/><rect x="1085" y="276.5" width="150" height="5" fill="url(#g35)"/><rect x="497" y="505" width="785" height="216" fill="#000"/><rect x="524" y="514" width="132" height="177" fill="#fff"/><rect x="525" y="515" width="130" height="88" fill="#b9c3a4"/><rect x="525" y="603" width="130" height="87" fill="#bfbfa2"/><text x="590" y="710.4" font-size="17.15" fill="#ffffff" text-anchor="middle" textLength="31.5" lengthAdjust="spacingAndGlyphs">20%</text><rect x="677" y="514" width="132" height="177" fill="#fff"/><rect x="678" y="515" width="130" height="88" fill="#bdc486"/><rect x="678" y="603" width="130" height="87" fill="#c0be86"/><text x="743" y="710.4" font-size="17.15" fill="#ffffff" text-anchor="middle" textLength="31.5" lengthAdjust="spacingAndGlyphs">40%</text><rect x="831" y="514" width="132" height="177" fill="#fff"/><rect x="832" y="515" width="130" height="88" fill="#c0c560"/><rect x="832" y="603" width="130" height="87" fill="#c0be66"/><text x="897" y="710.4" font-size="17.15" fill="#ffffff" text-anchor="middle" textLength="31.5" lengthAdjust="spacingAndGlyphs">60%</text><rect x="984" y="514" width="132" height="177" fill="#fff"/><rect x="985" y="515" width="130" height="88" fill="#bfc52e"/><rect x="985" y="603" width="130" height="87" fill="#c0bf4c"/><text x="1050" y="710.4" font-size="17.15" fill="#ffffff" text-anchor="middle" textLength="31.5" lengthAdjust="spacingAndGlyphs">80%</text><rect x="1138" y="514" width="132" height="177" fill="#fff"/><rect x="1139" y="515" width="130" height="88" fill="#c4c400"/><rect x="1139" y="603" width="130" height="87" fill="#c0c032"/><text x="1204" y="710.4" font-size="17.15" fill="#ffffff" text-anchor="middle" textLength="40" lengthAdjust="spacingAndGlyphs">100%</text><text x="0" y="0" font-size="16.5" fill="#fff" text-anchor="middle" transform="translate(514.5,553) rotate(-90)">Actual</text><text x="0" y="0" font-size="16.5" fill="#fff" text-anchor="middle" transform="translate(514.5,652) rotate(-90)">Target</text><rect x="1291" y="0" width="923" height="740" fill="#1c1c1c"/><rect x="1300" y="8" width="903.5" height="723" fill="#333333"/><text x="1749.7" y="31.6" font-size="18.9" fill="#dcdcdc" text-anchor="middle">CIE 1976 u'v'</text><rect x="1350" y="39" width="848" height="653" fill="#232323"/><g clip-path="url(#plotclip)"><g clip-path="url(#locclip)"><rect x="1407.77" y="51" width="32.19" height="2" fill="url(#g36)"/><rect x="1385.03" y="53" width="93.24" height="2" fill="url(#g37)"/><rect x="1377.22" y="55" width="124.9" height="2" fill="url(#g38)"/><rect x="1371.87" y="57" width="150.97" height="2" fill="url(#g39)"/><rect x="1367.95" y="59" width="174.29" height="2" fill="url(#g40)"/><rect x="1365.07" y="61" width="195.88" height="2" fill="url(#g41)"/><rect x="1362.71" y="63" width="216.41" height="2" fill="url(#g42)"/><rect x="1360.65" y="65" width="236.29" height="2" fill="url(#g43)"/><rect x="1358.89" y="67" width="255.82" height="2" fill="url(#g44)"/><rect x="1357.39" y="69" width="275" height="2" fill="url(#g45)"/><rect x="1356.03" y="71" width="293.9" height="2" fill="url(#g46)"/><rect x="1354.95" y="73" width="312.4" height="2" fill="url(#g47)"/><rect x="1353.95" y="75" width="330.78" height="2" fill="url(#g48)"/><rect x="1353.12" y="77" width="348.96" height="2" fill="url(#g49)"/><rect x="1352.39" y="79" width="367.03" height="2" fill="url(#g50)"/><rect x="1351.71" y="81" width="385.05" height="2" fill="url(#g51)"/><rect x="1351.19" y="83" width="402.91" height="2" fill="url(#g52)"/><rect x="1350.67" y="85" width="420.8" height="2" fill="url(#g53)"/><rect x="1350.26" y="87" width="438.65" height="2" fill="url(#g54)"/><rect x="1350" y="89" width="456.38" height="2" fill="url(#g55)"/><rect x="1350" y="91" width="473.78" height="2" fill="url(#g56)"/><rect x="1350" y="93" width="491.07" height="2" fill="url(#g57)"/><rect x="1350" y="95" width="508.33" height="2" fill="url(#g58)"/><rect x="1350" y="97" width="525.63" height="2" fill="url(#g59)"/><rect x="1350" y="99" width="542.99" height="2" fill="url(#g60)"/><rect x="1350" y="101" width="560.38" height="2" fill="url(#g61)"/><rect x="1350" y="103" width="577.76" height="2" fill="url(#g62)"/><rect x="1350" y="105" width="595.13" height="2" fill="url(#g63)"/><rect x="1350" y="107" width="612.52" height="2" fill="url(#g64)"/><rect x="1350" y="109" width="629.99" height="2" fill="url(#g65)"/><rect x="1350" y="111" width="647.54" height="2" fill="url(#g66)"/><rect x="1350" y="113" width="665.06" height="2" fill="url(#g67)"/><rect x="1350" y="115" width="682.4" height="2" fill="url(#g68)"/><rect x="1350" y="117" width="699.67" height="2" fill="url(#g69)"/><rect x="1350" y="119" width="716.96" height="2" fill="url(#g70)"/><rect x="1350.09" y="121" width="734.17" height="2" fill="url(#g71)"/><rect x="1350.31" y="123" width="751.41" height="2" fill="url(#g72)"/><rect x="1350.61" y="125" width="768.6" height="2" fill="url(#g73)"/><rect x="1350.93" y="127" width="785.58" height="2" fill="url(#g74)"/><rect x="1351.26" y="129" width="802.56" height="2" fill="url(#g75)"/><rect x="1351.58" y="131" width="819.52" height="2" fill="url(#g76)"/><rect x="1351.9" y="133" width="836.83" height="2" fill="url(#g77)"/><rect x="1352.3" y="135" width="845.7" height="2" fill="url(#g78)"/><rect x="1352.7" y="137" width="845.3" height="2" fill="url(#g79)"/><rect x="1353.1" y="139" width="844.9" height="2" fill="url(#g80)"/><rect x="1353.51" y="141" width="844.49" height="2" fill="url(#g81)"/><rect x="1353.91" y="143" width="844.09" height="2" fill="url(#g82)"/><rect x="1354.36" y="145" width="843.64" height="2" fill="url(#g83)"/><rect x="1354.82" y="147" width="843.18" height="2" fill="url(#g84)"/><rect x="1355.29" y="149" width="842.71" height="2" fill="url(#g85)"/><rect x="1355.75" y="151" width="842.25" height="2" fill="url(#g86)"/><rect x="1356.22" y="153" width="841.78" height="2" fill="url(#g87)"/><rect x="1356.69" y="155" width="841.31" height="2" fill="url(#g88)"/><rect x="1357.23" y="157" width="840.77" height="2" fill="url(#g89)"/><rect x="1357.76" y="159" width="840.24" height="2" fill="url(#g90)"/><rect x="1358.29" y="161" width="839.71" height="2" fill="url(#g91)"/><rect x="1358.82" y="163" width="839.18" height="2" fill="url(#g92)"/><rect x="1359.35" y="165" width="838.65" height="2" fill="url(#g93)"/><rect x="1359.89" y="167" width="838.11" height="2" fill="url(#g94)"/><rect x="1360.49" y="169" width="837.51" height="2" fill="url(#g95)"/><rect x="1361.09" y="171" width="836.91" height="2" fill="url(#g96)"/><rect x="1361.69" y="173" width="836.31" height="2" fill="url(#g97)"/><rect x="1362.28" y="175" width="835.72" height="2" fill="url(#g98)"/><rect x="1362.88" y="177" width="835.01" height="2" fill="url(#g99)"/><rect x="1363.48" y="179" width="832.47" height="2" fill="url(#g100)"/><rect x="1364.11" y="181" width="829.9" height="2" fill="url(#g101)"/><rect x="1364.76" y="183" width="827.3" height="2" fill="url(#g102)"/><rect x="1365.42" y="185" width="824.71" height="2" fill="url(#g103)"/><rect x="1366.07" y="187" width="822.11" height="2" fill="url(#g104)"/><rect x="1366.72" y="189" width="819.51" height="2" fill="url(#g105)"/><rect x="1367.38" y="191" width="816.91" height="2" fill="url(#g106)"/><rect x="1368.03" y="193" width="814.32" height="2" fill="url(#g107)"/><rect x="1368.7" y="195" width="811.71" height="2" fill="url(#g108)"/><rect x="1369.4" y="197" width="809.07" height="2" fill="url(#g109)"/><rect x="1370.09" y="199" width="806.42" height="2" fill="url(#g110)"/><rect x="1370.79" y="201" width="803.78" height="2" fill="url(#g111)"/><rect x="1371.49" y="203" width="801.14" height="2" fill="url(#g112)"/><rect x="1372.19" y="205" width="798.5" height="2" fill="url(#g113)"/><rect x="1372.89" y="207" width="795.86" height="2" fill="url(#g114)"/><rect x="1373.59" y="209" width="793.22" height="2" fill="url(#g115)"/><rect x="1374.31" y="211" width="790.55" height="2" fill="url(#g116)"/><rect x="1375.05" y="213" width="787.87" height="2" fill="url(#g117)"/><rect x="1375.8" y="215" width="785.18" height="2" fill="url(#g118)"/><rect x="1376.54" y="217" width="782.49" height="2" fill="url(#g119)"/><rect x="1377.29" y="219" width="779.8" height="2" fill="url(#g120)"/><rect x="1378.03" y="221" width="777.11" height="2" fill="url(#g121)"/><rect x="1378.78" y="223" width="774.43" height="2" fill="url(#g122)"/><rect x="1379.52" y="225" width="771.74" height="2" fill="url(#g123)"/><rect x="1380.28" y="227" width="769.03" height="2" fill="url(#g124)"/><rect x="1381.08" y="229" width="766.3" height="2" fill="url(#g125)"/><rect x="1381.87" y="231" width="763.56" height="2" fill="url(#g126)"/><rect x="1382.67" y="233" width="760.82" height="2" fill="url(#g127)"/><rect x="1383.46" y="235" width="758.08" height="2" fill="url(#g128)"/><rect x="1384.26" y="237" width="755.34" height="2" fill="url(#g129)"/><rect x="1385.05" y="239" width="752.6" height="2" fill="url(#g130)"/><rect x="1385.85" y="241" width="749.87" height="2" fill="url(#g131)"/><rect x="1386.64" y="243" width="747.13" height="2" fill="url(#g132)"/><rect x="1387.47" y="245" width="744.36" height="2" fill="url(#g133)"/><rect x="1388.31" y="247" width="741.57" height="2" fill="url(#g134)"/><rect x="1389.15" y="249" width="738.79" height="2" fill="url(#g135)"/><rect x="1389.99" y="251" width="736.01" height="2" fill="url(#g136)"/><rect x="1390.82" y="253" width="733.23" height="2" fill="url(#g137)"/><rect x="1391.66" y="255" width="730.45" height="2" fill="url(#g138)"/><rect x="1392.5" y="257" width="727.67" height="2" fill="url(#g139)"/><rect x="1393.34" y="259" width="724.89" height="2" fill="url(#g140)"/><rect x="1394.17" y="261" width="722.11" height="2" fill="url(#g141)"/><rect x="1395.04" y="263" width="719.3" height="2" fill="url(#g142)"/><rect x="1395.92" y="265" width="716.48" height="2" fill="url(#g143)"/><rect x="1396.79" y="267" width="713.67" height="2" fill="url(#g144)"/><rect x="1397.66" y="269" width="710.85" height="2" fill="url(#g145)"/><rect x="1398.54" y="271" width="708.03" height="2" fill="url(#g146)"/><rect x="1399.41" y="273" width="705.22" height="2" fill="url(#g147)"/><rect x="1400.28" y="275" width="702.4" height="2" fill="url(#g148)"/><rect x="1401.16" y="277" width="699.58" height="2" fill="url(#g149)"/><rect x="1402.03" y="279" width="696.77" height="2" fill="url(#g150)"/><rect x="1402.93" y="281" width="693.93" height="2" fill="url(#g151)"/><rect x="1403.84" y="283" width="691.07" height="2" fill="url(#g152)"/><rect x="1404.76" y="285" width="688.2" height="2" fill="url(#g153)"/><rect x="1405.68" y="287" width="685.34" height="2" fill="url(#g154)"/><rect x="1406.6" y="289" width="682.48" height="2" fill="url(#g155)"/><rect x="1407.52" y="291" width="679.62" height="2" fill="url(#g156)"/><rect x="1408.44" y="293" width="676.76" height="2" fill="url(#g157)"/><rect x="1409.36" y="295" width="673.9" height="2" fill="url(#g158)"/><rect x="1410.27" y="297" width="671.04" height="2" fill="url(#g159)"/><rect x="1411.19" y="299" width="668.17" height="2" fill="url(#g160)"/><rect x="1412.16" y="301" width="665.26" height="2" fill="url(#g161)"/><rect x="1413.14" y="303" width="662.34" height="2" fill="url(#g162)"/><rect x="1414.11" y="305" width="659.42" height="2" fill="url(#g163)"/><rect x="1415.09" y="307" width="656.51" height="2" fill="url(#g164)"/><rect x="1416.06" y="309" width="653.59" height="2" fill="url(#g165)"/><rect x="1417.04" y="311" width="650.67" height="2" fill="url(#g166)"/><rect x="1418.01" y="313" width="647.75" height="2" fill="url(#g167)"/><rect x="1418.99" y="315" width="644.84" height="2" fill="url(#g168)"/><rect x="1419.96" y="317" width="641.92" height="2" fill="url(#g169)"/><rect x="1420.96" y="319" width="638.98" height="2" fill="url(#g170)"/><rect x="1422" y="321" width="636" height="2" fill="url(#g171)"/><rect x="1423.04" y="323" width="633.01" height="2" fill="url(#g172)"/><rect x="1424.08" y="325" width="630.03" height="2" fill="url(#g173)"/><rect x="1425.12" y="327" width="627.04" height="2" fill="url(#g174)"/><rect x="1426.16" y="329" width="624.06" height="2" fill="url(#g175)"/><rect x="1427.2" y="331" width="621.08" height="2" fill="url(#g176)"/><rect x="1428.24" y="333" width="618.09" height="2" fill="url(#g177)"/><rect x="1429.28" y="335" width="615.11" height="2" fill="url(#g178)"/><rect x="1430.32" y="337" width="612.12" height="2" fill="url(#g179)"/><rect x="1431.39" y="339" width="609.11" height="2" fill="url(#g180)"/><rect x="1432.49" y="341" width="606.07" height="2" fill="url(#g181)"/><rect x="1433.59" y="343" width="603.03" height="2" fill="url(#g182)"/><rect x="1434.68" y="345" width="600" height="2" fill="url(#g183)"/><rect x="1435.78" y="347" width="596.96" height="2" fill="url(#g184)"/><rect x="1436.87" y="349" width="593.92" height="2" fill="url(#g185)"/><rect x="1437.97" y="351" width="590.88" height="2" fill="url(#g186)"/><rect x="1439.06" y="353" width="587.84" height="2" fill="url(#g187)"/><rect x="1440.16" y="355" width="584.8" height="2" fill="url(#g188)"/><rect x="1441.25" y="357" width="581.77" height="2" fill="url(#g189)"/><rect x="1442.37" y="359" width="578.7" height="2" fill="url(#g190)"/><rect x="1443.51" y="361" width="575.62" height="2" fill="url(#g191)"/><rect x="1444.64" y="363" width="572.54" height="2" fill="url(#g192)"/><rect x="1445.78" y="365" width="569.47" height="2" fill="url(#g193)"/><rect x="1446.92" y="367" width="566.39" height="2" fill="url(#g194)"/><rect x="1448.05" y="369" width="563.31" height="2" fill="url(#g195)"/><rect x="1449.19" y="371" width="560.23" height="2" fill="url(#g196)"/><rect x="1450.32" y="373" width="557.15" height="2" fill="url(#g197)"/><rect x="1451.46" y="375" width="554.07" height="2" fill="url(#g198)"/><rect x="1452.59" y="377" width="550.99" height="2" fill="url(#g199)"/><rect x="1453.75" y="379" width="547.89" height="2" fill="url(#g200)"/><rect x="1454.91" y="381" width="544.79" height="2" fill="url(#g201)"/><rect x="1456.08" y="383" width="541.68" height="2" fill="url(#g202)"/><rect x="1457.24" y="385" width="538.57" height="2" fill="url(#g203)"/><rect x="1458.41" y="387" width="535.47" height="2" fill="url(#g204)"/><rect x="1459.57" y="389" width="532.36" height="2" fill="url(#g205)"/><rect x="1460.73" y="391" width="529.25" height="2" fill="url(#g206)"/><rect x="1461.9" y="393" width="526.14" height="2" fill="url(#g207)"/><rect x="1463.06" y="395" width="523.04" height="2" fill="url(#g208)"/><rect x="1464.23" y="397" width="519.93" height="2" fill="url(#g209)"/><rect x="1465.42" y="399" width="516.79" height="2" fill="url(#g210)"/><rect x="1466.62" y="401" width="513.65" height="2" fill="url(#g211)"/><rect x="1467.81" y="403" width="510.52" height="2" fill="url(#g212)"/><rect x="1469" y="405" width="507.38" height="2" fill="url(#g213)"/><rect x="1470.19" y="407" width="504.25" height="2" fill="url(#g214)"/><rect x="1471.38" y="409" width="501.11" height="2" fill="url(#g215)"/><rect x="1472.58" y="411" width="497.98" height="2" fill="url(#g216)"/><rect x="1473.77" y="413" width="494.84" height="2" fill="url(#g217)"/><rect x="1474.96" y="415" width="491.71" height="2" fill="url(#g218)"/><rect x="1476.18" y="417" width="488.54" height="2" fill="url(#g219)"/><rect x="1477.41" y="419" width="485.37" height="2" fill="url(#g220)"/><rect x="1478.64" y="421" width="482.2" height="2" fill="url(#g221)"/><rect x="1479.86" y="423" width="479.03" height="2" fill="url(#g222)"/><rect x="1481.09" y="425" width="475.86" height="2" fill="url(#g223)"/><rect x="1482.32" y="427" width="472.69" height="2" fill="url(#g224)"/><rect x="1483.55" y="429" width="469.52" height="2" fill="url(#g225)"/><rect x="1484.78" y="431" width="466.35" height="2" fill="url(#g226)"/><rect x="1486" y="433" width="463.18" height="2" fill="url(#g227)"/><rect x="1487.25" y="435" width="459.99" height="2" fill="url(#g228)"/><rect x="1488.51" y="437" width="456.78" height="2" fill="url(#g229)"/><rect x="1489.78" y="439" width="453.57" height="2" fill="url(#g230)"/><rect x="1491.04" y="441" width="450.37" height="2" fill="url(#g231)"/><rect x="1492.31" y="443" width="447.16" height="2" fill="url(#g232)"/><rect x="1493.57" y="445" width="443.95" height="2" fill="url(#g233)"/><rect x="1494.83" y="447" width="440.75" height="2" fill="url(#g234)"/><rect x="1496.1" y="449" width="437.54" height="2" fill="url(#g235)"/><rect x="1497.36" y="451" width="434.33" height="2" fill="url(#g236)"/><rect x="1498.65" y="453" width="431.1" height="2" fill="url(#g237)"/><rect x="1499.95" y="455" width="427.86" height="2" fill="url(#g238)"/><rect x="1501.26" y="457" width="424.61" height="2" fill="url(#g239)"/><rect x="1502.56" y="459" width="421.36" height="2" fill="url(#g240)"/><rect x="1503.87" y="461" width="418.11" height="2" fill="url(#g241)"/><rect x="1505.17" y="463" width="414.86" height="2" fill="url(#g242)"/><rect x="1506.48" y="465" width="411.62" height="2" fill="url(#g243)"/><rect x="1507.78" y="467" width="408.37" height="2" fill="url(#g244)"/><rect x="1509.09" y="469" width="405.12" height="2" fill="url(#g245)"/><rect x="1510.44" y="471" width="401.82" height="2" fill="url(#g246)"/><rect x="1511.8" y="473" width="398.52" height="2" fill="url(#g247)"/><rect x="1513.16" y="475" width="395.22" height="2" fill="url(#g248)"/><rect x="1514.51" y="477" width="391.92" height="2" fill="url(#g249)"/><rect x="1515.87" y="479" width="388.62" height="2" fill="url(#g250)"/><rect x="1517.22" y="481" width="385.32" height="2" fill="url(#g251)"/><rect x="1518.58" y="483" width="382.02" height="2" fill="url(#g252)"/><rect x="1519.94" y="485" width="378.72" height="2" fill="url(#g253)"/><rect x="1521.35" y="487" width="375.37" height="2" fill="url(#g254)"/><rect x="1522.76" y="489" width="372.01" height="2" fill="url(#g255)"/><rect x="1524.17" y="491" width="368.66" height="2" fill="url(#g256)"/><rect x="1525.59" y="493" width="365.3" height="2" fill="url(#g257)"/><rect x="1527" y="495" width="361.95" height="2" fill="url(#g258)"/><rect x="1528.41" y="497" width="358.6" height="2" fill="url(#g259)"/><rect x="1529.82" y="499" width="355.24" height="2" fill="url(#g260)"/><rect x="1531.26" y="501" width="351.86" height="2" fill="url(#g261)"/><rect x="1532.72" y="503" width="348.45" height="2" fill="url(#g262)"/><rect x="1534.18" y="505" width="345.05" height="2" fill="url(#g263)"/><rect x="1535.64" y="507" width="341.65" height="2" fill="url(#g264)"/><rect x="1537.1" y="509" width="338.24" height="2" fill="url(#g265)"/><rect x="1538.56" y="511" width="334.84" height="2" fill="url(#g266)"/><rect x="1540.02" y="513" width="331.44" height="2" fill="url(#g267)"/><rect x="1541.51" y="515" width="328.01" height="2" fill="url(#g268)"/><rect x="1543.01" y="517" width="324.56" height="2" fill="url(#g269)"/><rect x="1544.52" y="519" width="321.11" height="2" fill="url(#g270)"/><rect x="1546.02" y="521" width="317.67" height="2" fill="url(#g271)"/><rect x="1547.52" y="523" width="314.22" height="2" fill="url(#g272)"/><rect x="1549.03" y="525" width="310.77" height="2" fill="url(#g273)"/><rect x="1550.53" y="527" width="307.32" height="2" fill="url(#g274)"/><rect x="1552.1" y="529" width="303.82" height="2" fill="url(#g275)"/><rect x="1553.66" y="531" width="300.31" height="2" fill="url(#g276)"/><rect x="1555.22" y="533" width="296.81" height="2" fill="url(#g277)"/><rect x="1556.78" y="535" width="293.3" height="2" fill="url(#g278)"/><rect x="1558.35" y="537" width="289.79" height="2" fill="url(#g279)"/><rect x="1559.91" y="539" width="286.29" height="2" fill="url(#g280)"/><rect x="1561.54" y="541" width="282.71" height="2" fill="url(#g281)"/><rect x="1563.18" y="543" width="279.13" height="2" fill="url(#g282)"/><rect x="1564.81" y="545" width="275.56" height="2" fill="url(#g283)"/><rect x="1566.45" y="547" width="271.98" height="2" fill="url(#g284)"/><rect x="1568.08" y="549" width="268.4" height="2" fill="url(#g285)"/><rect x="1569.75" y="551" width="264.79" height="2" fill="url(#g286)"/><rect x="1571.45" y="553" width="261.15" height="2" fill="url(#g287)"/><rect x="1573.15" y="555" width="257.51" height="2" fill="url(#g288)"/><rect x="1574.85" y="557" width="253.87" height="2" fill="url(#g289)"/><rect x="1576.54" y="559" width="250.22" height="2" fill="url(#g290)"/><rect x="1578.26" y="561" width="246.56" height="2" fill="url(#g291)"/><rect x="1580.01" y="563" width="242.87" height="2" fill="url(#g292)"/><rect x="1581.77" y="565" width="239.17" height="2" fill="url(#g293)"/><rect x="1583.52" y="567" width="235.48" height="2" fill="url(#g294)"/><rect x="1585.27" y="569" width="231.78" height="2" fill="url(#g295)"/><rect x="1587.09" y="571" width="228.02" height="2" fill="url(#g296)"/><rect x="1588.92" y="573" width="224.25" height="2" fill="url(#g297)"/><rect x="1590.75" y="575" width="220.47" height="2" fill="url(#g298)"/><rect x="1592.58" y="577" width="216.7" height="2" fill="url(#g299)"/><rect x="1594.5" y="579" width="212.83" height="2" fill="url(#g300)"/><rect x="1596.45" y="581" width="208.94" height="2" fill="url(#g301)"/><rect x="1598.4" y="583" width="205.05" height="2" fill="url(#g302)"/><rect x="1600.37" y="585" width="201.14" height="2" fill="url(#g303)"/><rect x="1602.41" y="587" width="197.16" height="2" fill="url(#g304)"/><rect x="1604.45" y="589" width="193.18" height="2" fill="url(#g305)"/><rect x="1606.49" y="591" width="189.19" height="2" fill="url(#g306)"/><rect x="1608.56" y="593" width="185.17" height="2" fill="url(#g307)"/><rect x="1610.64" y="595" width="181.16" height="2" fill="url(#g308)"/><rect x="1612.72" y="597" width="177.13" height="2" fill="url(#g309)"/><rect x="1614.84" y="599" width="173.07" height="2" fill="url(#g310)"/><rect x="1616.95" y="601" width="169.01" height="2" fill="url(#g311)"/><rect x="1619.11" y="603" width="164.91" height="2" fill="url(#g312)"/><rect x="1621.31" y="605" width="160.77" height="2" fill="url(#g313)"/><rect x="1623.51" y="607" width="156.62" height="2" fill="url(#g314)"/><rect x="1625.77" y="609" width="152.42" height="2" fill="url(#g315)"/><rect x="1628.03" y="611" width="148.22" height="2" fill="url(#g316)"/><rect x="1630.31" y="613" width="144" height="2" fill="url(#g317)"/><rect x="1632.6" y="615" width="139.77" height="2" fill="url(#g318)"/><rect x="1634.9" y="617" width="135.52" height="2" fill="url(#g319)"/><rect x="1637.22" y="619" width="131.26" height="2" fill="url(#g320)"/><rect x="1639.56" y="621" width="126.98" height="2" fill="url(#g321)"/><rect x="1641.95" y="623" width="122.64" height="2" fill="url(#g322)"/><rect x="1644.35" y="625" width="118.3" height="2" fill="url(#g323)"/><rect x="1646.77" y="627" width="113.93" height="2" fill="url(#g324)"/><rect x="1649.19" y="629" width="109.57" height="2" fill="url(#g325)"/><rect x="1651.62" y="631" width="105.2" height="2" fill="url(#g326)"/><rect x="1654.04" y="633" width="100.83" height="2" fill="url(#g327)"/><rect x="1656.46" y="635" width="96.47" height="2" fill="url(#g328)"/><rect x="1658.91" y="637" width="92.08" height="2" fill="url(#g329)"/><rect x="1661.35" y="639" width="87.7" height="2" fill="url(#g330)"/><rect x="1663.8" y="641" width="83.31" height="2" fill="url(#g331)"/><rect x="1666.23" y="643" width="78.93" height="2" fill="url(#g332)"/><rect x="1668.66" y="645" width="74.55" height="2" fill="url(#g333)"/><rect x="1671.09" y="647" width="70.19" height="2" fill="url(#g334)"/><rect x="1673.51" y="649" width="65.82" height="2" fill="url(#g335)"/><rect x="1675.92" y="651" width="61.47" height="2" fill="url(#g336)"/><rect x="1678.31" y="653" width="57.13" height="2" fill="url(#g337)"/><rect x="1680.67" y="655" width="52.83" height="2" fill="url(#g338)"/><rect x="1683.01" y="657" width="48.55" height="2" fill="url(#g339)"/><rect x="1685.33" y="659" width="44.28" height="2" fill="url(#g340)"/><rect x="1687.7" y="661" width="39.98" height="2" fill="url(#g341)"/><rect x="1690.12" y="663" width="35.61" height="2" fill="url(#g342)"/><rect x="1692.6" y="665" width="31.19" height="2" fill="url(#g343)"/><rect x="1695.11" y="667" width="26.74" height="2" fill="url(#g344)"/><rect x="1697.66" y="669" width="22.24" height="2" fill="url(#g345)"/><rect x="1700.37" y="671" width="17.59" height="2" fill="url(#g346)"/><rect x="1703.43" y="673" width="12.58" height="2" fill="url(#g347)"/></g><g clip-path="url(#triclip)"><rect x="1523.71" y="79" width="24.63" height="2" fill="url(#g348)"/><rect x="1523.87" y="81" width="45.81" height="2" fill="url(#g349)"/><rect x="1524.2" y="83" width="66.84" height="2" fill="url(#g350)"/><rect x="1524.52" y="85" width="87.87" height="2" fill="url(#g351)"/><rect x="1524.84" y="87" width="108.89" height="2" fill="url(#g352)"/><rect x="1525.17" y="89" width="129.92" height="2" fill="url(#g353)"/><rect x="1525.49" y="91" width="150.94" height="2" fill="url(#g354)"/><rect x="1525.82" y="93" width="171.97" height="2" fill="url(#g355)"/><rect x="1526.14" y="95" width="193" height="2" fill="url(#g356)"/><rect x="1526.46" y="97" width="214.02" height="2" fill="url(#g357)"/><rect x="1526.79" y="99" width="235.05" height="2" fill="url(#g358)"/><rect x="1527.11" y="101" width="256.08" height="2" fill="url(#g359)"/><rect x="1527.43" y="103" width="277.1" height="2" fill="url(#g360)"/><rect x="1527.76" y="105" width="298.13" height="2" fill="url(#g361)"/><rect x="1528.08" y="107" width="319.16" height="2" fill="url(#g362)"/><rect x="1528.41" y="109" width="340.18" height="2" fill="url(#g363)"/><rect x="1528.73" y="111" width="361.21" height="2" fill="url(#g364)"/><rect x="1529.05" y="113" width="382.24" height="2" fill="url(#g365)"/><rect x="1529.38" y="115" width="403.26" height="2" fill="url(#g366)"/><rect x="1529.7" y="117" width="424.29" height="2" fill="url(#g367)"/><rect x="1530.02" y="119" width="445.31" height="2" fill="url(#g368)"/><rect x="1530.35" y="121" width="458.72" height="2" fill="url(#g369)"/><rect x="1530.67" y="123" width="458.39" height="2" fill="url(#g370)"/><rect x="1530.99" y="125" width="456.11" height="2" fill="url(#g371)"/><rect x="1531.32" y="127" width="453.82" height="2" fill="url(#g372)"/><rect x="1531.64" y="129" width="451.54" height="2" fill="url(#g373)"/><rect x="1531.97" y="131" width="449.26" height="2" fill="url(#g374)"/><rect x="1532.29" y="133" width="446.98" height="2" fill="url(#g375)"/><rect x="1532.61" y="135" width="444.7" height="2" fill="url(#g376)"/><rect x="1532.94" y="137" width="442.41" height="2" fill="url(#g377)"/><rect x="1533.26" y="139" width="440.13" height="2" fill="url(#g378)"/><rect x="1533.58" y="141" width="437.85" height="2" fill="url(#g379)"/><rect x="1533.91" y="143" width="435.57" height="2" fill="url(#g380)"/><rect x="1534.23" y="145" width="433.29" height="2" fill="url(#g381)"/><rect x="1534.56" y="147" width="431" height="2" fill="url(#g382)"/><rect x="1534.88" y="149" width="428.72" height="2" fill="url(#g383)"/><rect x="1535.2" y="151" width="426.44" height="2" fill="url(#g384)"/><rect x="1535.53" y="153" width="424.16" height="2" fill="url(#g385)"/><rect x="1535.85" y="155" width="421.88" height="2" fill="url(#g386)"/><rect x="1536.17" y="157" width="419.59" height="2" fill="url(#g387)"/><rect x="1536.5" y="159" width="417.31" height="2" fill="url(#g388)"/><rect x="1536.82" y="161" width="415.03" height="2" fill="url(#g389)"/><rect x="1537.15" y="163" width="412.75" height="2" fill="url(#g390)"/><rect x="1537.47" y="165" width="410.47" height="2" fill="url(#g391)"/><rect x="1537.79" y="167" width="408.18" height="2" fill="url(#g392)"/><rect x="1538.12" y="169" width="405.9" height="2" fill="url(#g393)"/><rect x="1538.44" y="171" width="403.62" height="2" fill="url(#g394)"/><rect x="1538.76" y="173" width="401.34" height="2" fill="url(#g395)"/><rect x="1539.09" y="175" width="399.06" height="2" fill="url(#g396)"/><rect x="1539.41" y="177" width="396.77" height="2" fill="url(#g397)"/><rect x="1539.73" y="179" width="394.49" height="2" fill="url(#g398)"/><rect x="1540.06" y="181" width="392.21" height="2" fill="url(#g399)"/><rect x="1540.38" y="183" width="389.93" height="2" fill="url(#g400)"/><rect x="1540.71" y="185" width="387.65" height="2" fill="url(#g401)"/><rect x="1541.03" y="187" width="385.36" height="2" fill="url(#g402)"/><rect x="1541.35" y="189" width="383.08" height="2" fill="url(#g403)"/><rect x="1541.68" y="191" width="380.8" height="2" fill="url(#g404)"/><rect x="1542" y="193" width="378.52" height="2" fill="url(#g405)"/><rect x="1542.32" y="195" width="376.24" height="2" fill="url(#g406)"/><rect x="1542.65" y="197" width="373.95" height="2" fill="url(#g407)"/><rect x="1542.97" y="199" width="371.67" height="2" fill="url(#g408)"/><rect x="1543.3" y="201" width="369.39" height="2" fill="url(#g409)"/><rect x="1543.62" y="203" width="367.11" height="2" fill="url(#g410)"/><rect x="1543.94" y="205" width="364.83" height="2" fill="url(#g411)"/><rect x="1544.27" y="207" width="362.54" height="2" fill="url(#g412)"/><rect x="1544.59" y="209" width="360.26" height="2" fill="url(#g413)"/><rect x="1544.91" y="211" width="357.98" height="2" fill="url(#g414)"/><rect x="1545.24" y="213" width="355.7" height="2" fill="url(#g415)"/><rect x="1545.56" y="215" width="353.42" height="2" fill="url(#g416)"/><rect x="1545.88" y="217" width="351.13" height="2" fill="url(#g417)"/><rect x="1546.21" y="219" width="348.85" height="2" fill="url(#g418)"/><rect x="1546.53" y="221" width="346.57" height="2" fill="url(#g419)"/><rect x="1546.86" y="223" width="344.29" height="2" fill="url(#g420)"/><rect x="1547.18" y="225" width="342.01" height="2" fill="url(#g421)"/><rect x="1547.5" y="227" width="339.72" height="2" fill="url(#g422)"/><rect x="1547.83" y="229" width="337.44" height="2" fill="url(#g423)"/><rect x="1548.15" y="231" width="335.16" height="2" fill="url(#g424)"/><rect x="1548.47" y="233" width="332.88" height="2" fill="url(#g425)"/><rect x="1548.8" y="235" width="330.6" height="2" fill="url(#g426)"/><rect x="1549.12" y="237" width="328.31" height="2" fill="url(#g427)"/><rect x="1549.45" y="239" width="326.03" height="2" fill="url(#g428)"/><rect x="1549.77" y="241" width="323.75" height="2" fill="url(#g429)"/><rect x="1550.09" y="243" width="321.47" height="2" fill="url(#g430)"/><rect x="1550.42" y="245" width="319.19" height="2" fill="url(#g431)"/><rect x="1550.74" y="247" width="316.9" height="2" fill="url(#g432)"/><rect x="1551.06" y="249" width="314.62" height="2" fill="url(#g433)"/><rect x="1551.39" y="251" width="312.34" height="2" fill="url(#g434)"/><rect x="1551.71" y="253" width="310.06" height="2" fill="url(#g435)"/><rect x="1552.04" y="255" width="307.78" height="2" fill="url(#g436)"/><rect x="1552.36" y="257" width="305.49" height="2" fill="url(#g437)"/><rect x="1552.68" y="259" width="303.21" height="2" fill="url(#g438)"/><rect x="1553.01" y="261" width="300.93" height="2" fill="url(#g439)"/><rect x="1553.33" y="263" width="298.65" height="2" fill="url(#g440)"/><rect x="1553.65" y="265" width="296.37" height="2" fill="url(#g441)"/><rect x="1553.98" y="267" width="294.08" height="2" fill="url(#g442)"/><rect x="1554.3" y="269" width="291.8" height="2" fill="url(#g443)"/><rect x="1554.62" y="271" width="289.52" height="2" fill="url(#g444)"/><rect x="1554.95" y="273" width="287.24" height="2" fill="url(#g445)"/><rect x="1555.27" y="275" width="284.96" height="2" fill="url(#g446)"/><rect x="1555.6" y="277" width="282.67" height="2" fill="url(#g447)"/><rect x="1555.92" y="279" width="280.39" height="2" fill="url(#g448)"/><rect x="1556.24" y="281" width="278.11" height="2" fill="url(#g449)"/><rect x="1556.57" y="283" width="275.83" height="2" fill="url(#g450)"/><rect x="1556.89" y="285" width="273.55" height="2" fill="url(#g451)"/><rect x="1557.21" y="287" width="271.26" height="2" fill="url(#g452)"/><rect x="1557.54" y="289" width="268.98" height="2" fill="url(#g453)"/><rect x="1557.86" y="291" width="266.7" height="2" fill="url(#g454)"/><rect x="1558.19" y="293" width="264.42" height="2" fill="url(#g455)"/><rect x="1558.51" y="295" width="262.14" height="2" fill="url(#g456)"/><rect x="1558.83" y="297" width="259.86" height="2" fill="url(#g457)"/><rect x="1559.16" y="299" width="257.57" height="2" fill="url(#g458)"/><rect x="1559.48" y="301" width="255.29" height="2" fill="url(#g459)"/><rect x="1559.8" y="303" width="253.01" height="2" fill="url(#g460)"/><rect x="1560.13" y="305" width="250.73" height="2" fill="url(#g461)"/><rect x="1560.45" y="307" width="248.45" height="2" fill="url(#g462)"/><rect x="1560.78" y="309" width="246.16" height="2" fill="url(#g463)"/><rect x="1561.1" y="311" width="243.88" height="2" fill="url(#g464)"/><rect x="1561.42" y="313" width="241.6" height="2" fill="url(#g465)"/><rect x="1561.75" y="315" width="239.32" height="2" fill="url(#g466)"/><rect x="1562.07" y="317" width="237.04" height="2" fill="url(#g467)"/><rect x="1562.39" y="319" width="234.75" height="2" fill="url(#g468)"/><rect x="1562.72" y="321" width="232.47" height="2" fill="url(#g469)"/><rect x="1563.04" y="323" width="230.19" height="2" fill="url(#g470)"/><rect x="1563.36" y="325" width="227.91" height="2" fill="url(#g471)"/><rect x="1563.69" y="327" width="225.63" height="2" fill="url(#g472)"/><rect x="1564.01" y="329" width="223.34" height="2" fill="url(#g473)"/><rect x="1564.34" y="331" width="221.06" height="2" fill="url(#g474)"/><rect x="1564.66" y="333" width="218.78" height="2" fill="url(#g475)"/><rect x="1564.98" y="335" width="216.5" height="2" fill="url(#g476)"/><rect x="1565.31" y="337" width="214.22" height="2" fill="url(#g477)"/><rect x="1565.63" y="339" width="211.93" height="2" fill="url(#g478)"/><rect x="1565.95" y="341" width="209.65" height="2" fill="url(#g479)"/><rect x="1566.28" y="343" width="207.37" height="2" fill="url(#g480)"/><rect x="1566.6" y="345" width="205.09" height="2" fill="url(#g481)"/><rect x="1566.93" y="347" width="202.81" height="2" fill="url(#g482)"/><rect x="1567.25" y="349" width="200.52" height="2" fill="url(#g483)"/><rect x="1567.57" y="351" width="198.24" height="2" fill="url(#g484)"/><rect x="1567.9" y="353" width="195.96" height="2" fill="url(#g485)"/><rect x="1568.22" y="355" width="193.68" height="2" fill="url(#g486)"/><rect x="1568.54" y="357" width="191.4" height="2" fill="url(#g487)"/><rect x="1568.87" y="359" width="189.11" height="2" fill="url(#g488)"/><rect x="1569.19" y="361" width="186.83" height="2" fill="url(#g489)"/><rect x="1569.52" y="363" width="184.55" height="2" fill="url(#g490)"/><rect x="1569.84" y="365" width="182.27" height="2" fill="url(#g491)"/><rect x="1570.16" y="367" width="179.99" height="2" fill="url(#g492)"/><rect x="1570.49" y="369" width="177.7" height="2" fill="url(#g493)"/><rect x="1570.81" y="371" width="175.42" height="2" fill="url(#g494)"/><rect x="1571.13" y="373" width="173.14" height="2" fill="url(#g495)"/><rect x="1571.46" y="375" width="170.86" height="2" fill="url(#g496)"/><rect x="1571.78" y="377" width="168.58" height="2" fill="url(#g497)"/><rect x="1572.1" y="379" width="166.29" height="2" fill="url(#g498)"/><rect x="1572.43" y="381" width="164.01" height="2" fill="url(#g499)"/><rect x="1572.75" y="383" width="161.73" height="2" fill="url(#g500)"/><rect x="1573.08" y="385" width="159.45" height="2" fill="url(#g501)"/><rect x="1573.4" y="387" width="157.17" height="2" fill="url(#g502)"/><rect x="1573.72" y="389" width="154.88" height="2" fill="url(#g503)"/><rect x="1574.05" y="391" width="152.6" height="2" fill="url(#g504)"/><rect x="1574.37" y="393" width="150.32" height="2" fill="url(#g505)"/><rect x="1574.69" y="395" width="148.04" height="2" fill="url(#g506)"/><rect x="1575.02" y="397" width="145.76" height="2" fill="url(#g507)"/><rect x="1575.34" y="399" width="143.47" height="2" fill="url(#g508)"/><rect x="1575.67" y="401" width="141.19" height="2" fill="url(#g509)"/><rect x="1575.99" y="403" width="138.91" height="2" fill="url(#g510)"/><rect x="1576.31" y="405" width="136.63" height="2" fill="url(#g511)"/><rect x="1576.64" y="407" width="134.35" height="2" fill="url(#g512)"/><rect x="1576.96" y="409" width="132.06" height="2" fill="url(#g513)"/><rect x="1577.28" y="411" width="129.78" height="2" fill="url(#g514)"/><rect x="1577.61" y="413" width="127.5" height="2" fill="url(#g515)"/><rect x="1577.93" y="415" width="125.22" height="2" fill="url(#g516)"/><rect x="1578.25" y="417" width="122.94" height="2" fill="url(#g517)"/><rect x="1578.58" y="419" width="120.65" height="2" fill="url(#g518)"/><rect x="1578.9" y="421" width="118.37" height="2" fill="url(#g519)"/><rect x="1579.23" y="423" width="116.09" height="2" fill="url(#g520)"/><rect x="1579.55" y="425" width="113.81" height="2" fill="url(#g521)"/><rect x="1579.87" y="427" width="111.53" height="2" fill="url(#g522)"/><rect x="1580.2" y="429" width="109.24" height="2" fill="url(#g523)"/><rect x="1580.52" y="431" width="106.96" height="2" fill="url(#g524)"/><rect x="1580.84" y="433" width="104.68" height="2" fill="url(#g525)"/><rect x="1581.17" y="435" width="102.4" height="2" fill="url(#g526)"/><rect x="1581.49" y="437" width="100.12" height="2" fill="url(#g527)"/><rect x="1581.82" y="439" width="97.83" height="2" fill="url(#g528)"/><rect x="1582.14" y="441" width="95.55" height="2" fill="url(#g529)"/><rect x="1582.46" y="443" width="93.27" height="2" fill="url(#g530)"/><rect x="1582.79" y="445" width="90.99" height="2" fill="url(#g531)"/><rect x="1583.11" y="447" width="88.71" height="2" fill="url(#g532)"/><rect x="1583.43" y="449" width="86.42" height="2" fill="url(#g533)"/><rect x="1583.76" y="451" width="84.14" height="2" fill="url(#g534)"/><rect x="1584.08" y="453" width="81.86" height="2" fill="url(#g535)"/><rect x="1584.41" y="455" width="79.58" height="2" fill="url(#g536)"/><rect x="1584.73" y="457" width="77.3" height="2" fill="url(#g537)"/><rect x="1585.05" y="459" width="75.01" height="2" fill="url(#g538)"/><rect x="1585.38" y="461" width="72.73" height="2" fill="url(#g539)"/><rect x="1585.7" y="463" width="70.45" height="2" fill="url(#g540)"/><rect x="1586.02" y="465" width="68.17" height="2" fill="url(#g541)"/><rect x="1586.35" y="467" width="65.89" height="2" fill="url(#g542)"/><rect x="1586.67" y="469" width="63.6" height="2" fill="url(#g543)"/><rect x="1586.99" y="471" width="61.32" height="2" fill="url(#g544)"/><rect x="1587.32" y="473" width="59.04" height="2" fill="url(#g545)"/><rect x="1587.64" y="475" width="56.76" height="2" fill="url(#g546)"/><rect x="1587.97" y="477" width="54.48" height="2" fill="url(#g547)"/><rect x="1588.29" y="479" width="52.19" height="2" fill="url(#g548)"/><rect x="1588.61" y="481" width="49.91" height="2" fill="url(#g549)"/><rect x="1588.94" y="483" width="47.63" height="2" fill="url(#g550)"/><rect x="1589.26" y="485" width="45.35" height="2" fill="url(#g551)"/><rect x="1589.58" y="487" width="43.07" height="2" fill="url(#g552)"/><rect x="1589.91" y="489" width="40.78" height="2" fill="url(#g553)"/><rect x="1590.23" y="491" width="38.5" height="2" fill="url(#g554)"/><rect x="1590.56" y="493" width="36.22" height="2" fill="url(#g555)"/><rect x="1590.88" y="495" width="33.94" height="2" fill="url(#g556)"/><rect x="1591.2" y="497" width="31.66" height="2" fill="url(#g557)"/><rect x="1591.53" y="499" width="29.37" height="2" fill="url(#g558)"/><rect x="1591.85" y="501" width="27.09" height="2" fill="url(#g559)"/><rect x="1592.17" y="503" width="24.81" height="2" fill="url(#g560)"/><rect x="1592.5" y="505" width="22.53" height="2" fill="url(#g561)"/><rect x="1592.82" y="507" width="20.25" height="2" fill="url(#g562)"/><rect x="1593.15" y="509" width="17.96" height="2" fill="url(#g563)"/><rect x="1593.47" y="511" width="15.68" height="2" fill="url(#g564)"/><rect x="1593.79" y="513" width="13.4" height="2" fill="url(#g565)"/><rect x="1594.12" y="515" width="11.12" height="2" fill="url(#g566)"/><rect x="1594.44" y="517" width="8.84" height="2" fill="url(#g567)"/><rect x="1594.76" y="519" width="6.55" height="2" fill="url(#g568)"/></g></g><rect x="1350" y="39" width="848" height="653" fill="none" stroke="#9c9c9c" stroke-width="2"/><line x1="1342" y1="692" x2="1349" y2="692" stroke="#e8e8e8" stroke-width="2"/><text x="1341.3" y="699.4" font-size="20.2" fill="#dcdcdc" text-anchor="end">0</text><line x1="1342" y1="637.75" x2="1349" y2="637.75" stroke="#e8e8e8" stroke-width="2"/><text x="1341.3" y="645.15" font-size="20.2" fill="#dcdcdc" text-anchor="end">0.05</text><line x1="1342" y1="583.5" x2="1349" y2="583.5" stroke="#e8e8e8" stroke-width="2"/><text x="1341.3" y="590.9" font-size="20.2" fill="#dcdcdc" text-anchor="end">0.1</text><line x1="1342" y1="529.25" x2="1349" y2="529.25" stroke="#e8e8e8" stroke-width="2"/><text x="1341.3" y="536.65" font-size="20.2" fill="#dcdcdc" text-anchor="end">0.15</text><line x1="1342" y1="475" x2="1349" y2="475" stroke="#e8e8e8" stroke-width="2"/><text x="1341.3" y="482.4" font-size="20.2" fill="#dcdcdc" text-anchor="end">0.2</text><line x1="1342" y1="420.75" x2="1349" y2="420.75" stroke="#e8e8e8" stroke-width="2"/><text x="1341.3" y="428.15" font-size="20.2" fill="#dcdcdc" text-anchor="end">0.25</text><line x1="1342" y1="366.5" x2="1349" y2="366.5" stroke="#e8e8e8" stroke-width="2"/><text x="1341.3" y="373.9" font-size="20.2" fill="#dcdcdc" text-anchor="end">0.3</text><line x1="1342" y1="312.25" x2="1349" y2="312.25" stroke="#e8e8e8" stroke-width="2"/><text x="1341.3" y="319.65" font-size="20.2" fill="#dcdcdc" text-anchor="end">0.35</text><line x1="1342" y1="258" x2="1349" y2="258" stroke="#e8e8e8" stroke-width="2"/><text x="1341.3" y="265.4" font-size="20.2" fill="#dcdcdc" text-anchor="end">0.4</text><line x1="1342" y1="203.75" x2="1349" y2="203.75" stroke="#e8e8e8" stroke-width="2"/><text x="1341.3" y="211.15" font-size="20.2" fill="#dcdcdc" text-anchor="end">0.45</text><line x1="1342" y1="149.5" x2="1349" y2="149.5" stroke="#e8e8e8" stroke-width="2"/><text x="1341.3" y="156.9" font-size="20.2" fill="#dcdcdc" text-anchor="end">0.5</text><line x1="1342" y1="95.25" x2="1349" y2="95.25" stroke="#e8e8e8" stroke-width="2"/><text x="1341.3" y="102.65" font-size="20.2" fill="#dcdcdc" text-anchor="end">0.55</text><line x1="1350" y1="693" x2="1350" y2="700.5" stroke="#e8e8e8" stroke-width="2"/><text x="1350" y="721" font-size="20.35" fill="#dcdcdc" text-anchor="middle">0</text><line x1="1420.63" y1="693" x2="1420.63" y2="700.5" stroke="#e8e8e8" stroke-width="2"/><text x="1420.63" y="721" font-size="20.35" fill="#dcdcdc" text-anchor="middle">0.05</text><line x1="1491.27" y1="693" x2="1491.27" y2="700.5" stroke="#e8e8e8" stroke-width="2"/><text x="1491.27" y="721" font-size="20.35" fill="#dcdcdc" text-anchor="middle">0.1</text><line x1="1561.9" y1="693" x2="1561.9" y2="700.5" stroke="#e8e8e8" stroke-width="2"/><text x="1561.9" y="721" font-size="20.35" fill="#dcdcdc" text-anchor="middle">0.15</text><line x1="1632.54" y1="693" x2="1632.54" y2="700.5" stroke="#e8e8e8" stroke-width="2"/><text x="1632.54" y="721" font-size="20.35" fill="#dcdcdc" text-anchor="middle">0.2</text><line x1="1703.17" y1="693" x2="1703.17" y2="700.5" stroke="#e8e8e8" stroke-width="2"/><text x="1703.17" y="721" font-size="20.35" fill="#dcdcdc" text-anchor="middle">0.25</text><line x1="1773.81" y1="693" x2="1773.81" y2="700.5" stroke="#e8e8e8" stroke-width="2"/><text x="1773.81" y="721" font-size="20.35" fill="#dcdcdc" text-anchor="middle">0.3</text><line x1="1844.45" y1="693" x2="1844.45" y2="700.5" stroke="#e8e8e8" stroke-width="2"/><text x="1844.45" y="721" font-size="20.35" fill="#dcdcdc" text-anchor="middle">0.35</text><line x1="1915.08" y1="693" x2="1915.08" y2="700.5" stroke="#e8e8e8" stroke-width="2"/><text x="1915.08" y="721" font-size="20.35" fill="#dcdcdc" text-anchor="middle">0.4</text><line x1="1985.72" y1="693" x2="1985.72" y2="700.5" stroke="#e8e8e8" stroke-width="2"/><text x="1985.72" y="721" font-size="20.35" fill="#dcdcdc" text-anchor="middle">0.45</text><line x1="2056.35" y1="693" x2="2056.35" y2="700.5" stroke="#e8e8e8" stroke-width="2"/><text x="2056.35" y="721" font-size="20.35" fill="#dcdcdc" text-anchor="middle">0.5</text><line x1="2126.99" y1="693" x2="2126.99" y2="700.5" stroke="#e8e8e8" stroke-width="2"/><text x="2126.99" y="721" font-size="20.35" fill="#dcdcdc" text-anchor="middle">0.55</text><rect x="1516" y="69.8" width="18" height="18" fill="none" stroke="#fff" stroke-width="2"/><rect x="1532.9" y="86" width="18" height="18" fill="none" stroke="#fff" stroke-width="2"/><rect x="1549.1" y="102.5" width="18" height="18" fill="none" stroke="#fff" stroke-width="2"/><rect x="1569" y="121.7" width="18" height="18" fill="none" stroke="#fff" stroke-width="2"/><rect x="1591.9" y="143.9" width="18" height="18" fill="none" stroke="#fff" stroke-width="2"/><rect x="1628.2" y="80.5" width="18" height="18" fill="none" stroke="#fff" stroke-width="2"/><rect x="1627" y="95.7" width="18" height="18" fill="none" stroke="#fff" stroke-width="2"/><rect x="1627" y="113" width="18" height="18" fill="none" stroke="#fff" stroke-width="2"/><rect x="1625.1" y="130.4" width="18" height="18" fill="none" stroke="#fff" stroke-width="2"/><rect x="1623.2" y="149.1" width="18" height="18" fill="none" stroke="#fff" stroke-width="2"/><rect x="1535.7" y="187.6" width="18" height="18" fill="none" stroke="#fff" stroke-width="2"/><rect x="1552.4" y="183.9" width="18" height="18" fill="none" stroke="#fff" stroke-width="2"/><rect x="1569.2" y="182" width="18" height="18" fill="none" stroke="#fff" stroke-width="2"/><rect x="1587.6" y="177.6" width="18" height="18" fill="none" stroke="#fff" stroke-width="2"/><rect x="1603.4" y="177" width="18" height="18" fill="none" stroke="#fff" stroke-width="2"/><rect x="1976.9" y="112.8" width="18" height="18" fill="none" stroke="#fff" stroke-width="2"/><rect x="1891.7" y="128" width="18" height="18" fill="none" stroke="#fff" stroke-width="2"/><rect x="1819.9" y="140.4" width="18" height="18" fill="none" stroke="#fff" stroke-width="2"/><rect x="1754.8" y="149.6" width="18" height="18" fill="none" stroke="#fff" stroke-width="2"/><rect x="1684" y="162" width="18" height="18" fill="none" stroke="#fff" stroke-width="2"/><rect x="1770.8" y="322.7" width="18" height="18" fill="none" stroke="#fff" stroke-width="2"/><rect x="1727.8" y="280.7" width="18" height="18" fill="none" stroke="#fff" stroke-width="2"/><rect x="1692.9" y="246.8" width="18" height="18" fill="none" stroke="#fff" stroke-width="2"/><rect x="1668" y="219.8" width="18" height="18" fill="none" stroke="#fff" stroke-width="2"/><rect x="1643" y="194.9" width="18" height="18" fill="none" stroke="#fff" stroke-width="2"/><rect x="1588.8" y="510.6" width="18" height="18" fill="none" stroke="#fff" stroke-width="2"/><rect x="1599.3" y="396.5" width="18" height="18" fill="none" stroke="#fff" stroke-width="2"/><rect x="1607" y="320.9" width="18" height="18" fill="none" stroke="#fff" stroke-width="2"/><rect x="1611.6" y="261.5" width="18" height="18" fill="none" stroke="#fff" stroke-width="2"/><rect x="1616" y="213" width="18" height="18" fill="none" stroke="#fff" stroke-width="2"/><rect x="1619" y="172.7" width="18" height="18" fill="none" stroke="#000" stroke-width="2.4"/><circle cx="1507.4" cy="69.9" r="5.8" fill="#10b010" stroke="#000" stroke-width="1.5"/><circle cx="1514.2" cy="79.2" r="5.8" fill="#50b850" stroke="#000" stroke-width="1.5"/><circle cx="1532.2" cy="95.3" r="5.8" fill="#68a868" stroke="#000" stroke-width="1.5"/><circle cx="1561.4" cy="122.7" r="5.8" fill="#80b080" stroke="#000" stroke-width="1.5"/><circle cx="1592.5" cy="151.2" r="5.8" fill="#a0b8a0" stroke="#000" stroke-width="1.5"/><circle cx="1633.5" cy="82.5" r="5.8" fill="#c8c010" stroke="#000" stroke-width="1.5"/><circle cx="1632" cy="95.3" r="5.8" fill="#c0c050" stroke="#000" stroke-width="1.5"/><circle cx="1629.8" cy="111.5" r="5.8" fill="#c0c070" stroke="#000" stroke-width="1.5"/><circle cx="1626.6" cy="134.8" r="5.8" fill="#c0c088" stroke="#000" stroke-width="1.5"/><circle cx="1624.5" cy="160.3" r="5.8" fill="#c0c0a0" stroke="#000" stroke-width="1.5"/><circle cx="1523.3" cy="196.3" r="5.8" fill="#10c0c0" stroke="#000" stroke-width="1.5"/><circle cx="1540" cy="194.3" r="5.8" fill="#50b8b8" stroke="#000" stroke-width="1.5"/><circle cx="1559.3" cy="192.9" r="5.8" fill="#70b0b0" stroke="#000" stroke-width="1.5"/><circle cx="1583.4" cy="189.4" r="5.8" fill="#90b0b0" stroke="#000" stroke-width="1.5"/><circle cx="1602.8" cy="185.2" r="5.8" fill="#a8b8b8" stroke="#000" stroke-width="1.5"/><circle cx="1982.2" cy="122.4" r="5.8" fill="#c00000" stroke="#000" stroke-width="1.5"/><circle cx="1933.4" cy="131.6" r="5.8" fill="#c04040" stroke="#000" stroke-width="1.5"/><circle cx="1862.9" cy="142.6" r="5.8" fill="#c05050" stroke="#000" stroke-width="1.5"/><circle cx="1770.9" cy="156.5" r="5.8" fill="#c07070" stroke="#000" stroke-width="1.5"/><circle cx="1685.9" cy="172.9" r="5.8" fill="#c09090" stroke="#000" stroke-width="1.5"/><circle cx="1778.2" cy="331.7" r="5.8" fill="#c000c0" stroke="#000" stroke-width="1.5"/><circle cx="1747.4" cy="310.5" r="5.8" fill="#c050c0" stroke="#000" stroke-width="1.5"/><circle cx="1711.5" cy="272.2" r="5.8" fill="#c070c0" stroke="#000" stroke-width="1.5"/><circle cx="1677" cy="238.2" r="5.8" fill="#c090c0" stroke="#000" stroke-width="1.5"/><circle cx="1646.4" cy="207.4" r="5.8" fill="#c0a0c0" stroke="#000" stroke-width="1.5"/><circle cx="1593.8" cy="519.6" r="5.8" fill="#0000a0" stroke="#000" stroke-width="1.5"/><circle cx="1597.3" cy="454.2" r="5.8" fill="#5050c0" stroke="#000" stroke-width="1.5"/><circle cx="1602.9" cy="393.2" r="5.8" fill="#7070c0" stroke="#000" stroke-width="1.5"/><circle cx="1611.8" cy="303.1" r="5.8" fill="#8080c0" stroke="#000" stroke-width="1.5"/><circle cx="1619.4" cy="229.2" r="5.8" fill="#9898b8" stroke="#000" stroke-width="1.5"/><circle cx="1624.8" cy="183.5" r="5.8" fill="#fff" stroke="#000" stroke-width="1.5"/><rect x="1905" y="487.5" width="289" height="198" fill="#2b2b2b"/><rect x="1909.2" y="490.7" width="281" height="191.3" fill="#a6a6a6"/><g clip-path="url(#insclip)"><path d="M1454.74,1266.68L2010.84,288.82L2021.51,294.97Z" fill="url(#g569)" stroke="url(#g569)" stroke-width="1.5"/><path d="M1454.74,1266.68L2021.51,294.97L2032.11,301.23Z" fill="url(#g570)" stroke="url(#g570)" stroke-width="1.5"/><path d="M1454.74,1266.68L2032.11,301.23L2042.64,307.61Z" fill="url(#g571)" stroke="url(#g571)" stroke-width="1.5"/><path d="M1454.74,1266.68L2042.64,307.61L2053.11,314.1Z" fill="url(#g572)" stroke="url(#g572)" stroke-width="1.5"/><path d="M1454.74,1266.68L2053.11,314.1L2063.5,320.71Z" fill="url(#g573)" stroke="url(#g573)" stroke-width="1.5"/><path d="M1454.74,1266.68L2063.5,320.71L2073.82,327.43Z" fill="url(#g574)" stroke="url(#g574)" stroke-width="1.5"/><path d="M1454.74,1266.68L2073.82,327.43L2084.06,334.26Z" fill="url(#g575)" stroke="url(#g575)" stroke-width="1.5"/><path d="M1454.74,1266.68L2084.06,334.26L2094.23,341.21Z" fill="url(#g576)" stroke="url(#g576)" stroke-width="1.5"/><path d="M1454.74,1266.68L2094.23,341.21L2104.32,348.26Z" fill="url(#g577)" stroke="url(#g577)" stroke-width="1.5"/><path d="M1454.74,1266.68L2104.32,348.26L2114.34,355.43Z" fill="url(#g578)" stroke="url(#g578)" stroke-width="1.5"/><path d="M1454.74,1266.68L2114.34,355.43L2124.27,362.7Z" fill="url(#g579)" stroke="url(#g579)" stroke-width="1.5"/><path d="M1454.74,1266.68L2124.27,362.7L2134.13,370.09Z" fill="url(#g580)" stroke="url(#g580)" stroke-width="1.5"/><path d="M1454.74,1266.68L2134.13,370.09L2143.9,377.58Z" fill="url(#g581)" stroke="url(#g581)" stroke-width="1.5"/><path d="M1454.74,1266.68L2143.9,377.58L2153.59,385.17Z" fill="url(#g582)" stroke="url(#g582)" stroke-width="1.5"/><path d="M1454.74,1266.68L2153.59,385.17L2163.2,392.88Z" fill="url(#g583)" stroke="url(#g583)" stroke-width="1.5"/><path d="M1454.74,1266.68L2163.2,392.88L2172.72,400.68Z" fill="url(#g584)" stroke="url(#g584)" stroke-width="1.5"/><path d="M1454.74,1266.68L2172.72,400.68L2182.16,408.59Z" fill="url(#g585)" stroke="url(#g585)" stroke-width="1.5"/><path d="M1454.74,1266.68L2182.16,408.59L2191.51,416.61Z" fill="url(#g586)" stroke="url(#g586)" stroke-width="1.5"/><path d="M1454.74,1266.68L2191.51,416.61L2200.77,424.72Z" fill="url(#g587)" stroke="url(#g587)" stroke-width="1.5"/><path d="M1454.74,1266.68L2200.77,424.72L2209.94,432.94Z" fill="url(#g588)" stroke="url(#g588)" stroke-width="1.5"/><path d="M1454.74,1266.68L2209.94,432.94L2219.02,441.26Z" fill="url(#g589)" stroke="url(#g589)" stroke-width="1.5"/><path d="M1454.74,1266.68L2219.02,441.26L2228.01,449.67Z" fill="url(#g590)" stroke="url(#g590)" stroke-width="1.5"/><path d="M1454.74,1266.68L2228.01,449.67L2236.91,458.19Z" fill="url(#g591)" stroke="url(#g591)" stroke-width="1.5"/><path d="M1454.74,1266.68L2236.91,458.19L2245.71,466.8Z" fill="url(#g592)" stroke="url(#g592)" stroke-width="1.5"/><path d="M1454.74,1266.68L2245.71,466.8L2254.42,475.5Z" fill="url(#g593)" stroke="url(#g593)" stroke-width="1.5"/><path d="M1454.74,1266.68L2254.42,475.5L2263.03,484.3Z" fill="url(#g594)" stroke="url(#g594)" stroke-width="1.5"/><path d="M1454.74,1266.68L2263.03,484.3L2271.55,493.2Z" fill="url(#g595)" stroke="url(#g595)" stroke-width="1.5"/><path d="M1454.74,1266.68L2271.55,493.2L2279.96,502.18Z" fill="url(#g596)" stroke="url(#g596)" stroke-width="1.5"/><path d="M1454.74,1266.68L2279.96,502.18L2288.28,511.26Z" fill="url(#g597)" stroke="url(#g597)" stroke-width="1.5"/><path d="M1454.74,1266.68L2288.28,511.26L2296.5,520.43Z" fill="url(#g598)" stroke="url(#g598)" stroke-width="1.5"/><path d="M1454.74,1266.68L2296.5,520.43L2304.62,529.69Z" fill="url(#g599)" stroke="url(#g599)" stroke-width="1.5"/><path d="M1454.74,1266.68L2304.62,529.69L2312.64,539.04Z" fill="url(#g600)" stroke="url(#g600)" stroke-width="1.5"/><path d="M1454.74,1266.68L2312.64,539.04L2320.55,548.47Z" fill="url(#g601)" stroke="url(#g601)" stroke-width="1.5"/><path d="M1454.74,1266.68L2320.55,548.47L2328.36,557.99Z" fill="url(#g602)" stroke="url(#g602)" stroke-width="1.5"/><path d="M1454.74,1266.68L2328.36,557.99L2336.06,567.6Z" fill="url(#g603)" stroke="url(#g603)" stroke-width="1.5"/><path d="M1454.74,1266.68L2336.06,567.6L2343.66,577.29Z" fill="url(#g604)" stroke="url(#g604)" stroke-width="1.5"/></g><g clip-path="url(#insclip)"><g clip-path="url(#itriclip)"><path d="M1454.74,1266.68L2010.84,288.82L2021.51,294.97Z" fill="url(#g605)" stroke="url(#g605)" stroke-width="1.5"/><path d="M1454.74,1266.68L2021.51,294.97L2032.11,301.23Z" fill="url(#g606)" stroke="url(#g606)" stroke-width="1.5"/><path d="M1454.74,1266.68L2032.11,301.23L2042.64,307.61Z" fill="url(#g607)" stroke="url(#g607)" stroke-width="1.5"/><path d="M1454.74,1266.68L2042.64,307.61L2053.11,314.1Z" fill="url(#g608)" stroke="url(#g608)" stroke-width="1.5"/><path d="M1454.74,1266.68L2053.11,314.1L2063.5,320.71Z" fill="url(#g609)" stroke="url(#g609)" stroke-width="1.5"/><path d="M1454.74,1266.68L2063.5,320.71L2073.82,327.43Z" fill="url(#g610)" stroke="url(#g610)" stroke-width="1.5"/><path d="M1454.74,1266.68L2073.82,327.43L2084.06,334.26Z" fill="url(#g611)" stroke="url(#g611)" stroke-width="1.5"/><path d="M1454.74,1266.68L2084.06,334.26L2094.23,341.21Z" fill="url(#g612)" stroke="url(#g612)" stroke-width="1.5"/><path d="M1454.74,1266.68L2094.23,341.21L2104.32,348.26Z" fill="url(#g613)" stroke="url(#g613)" stroke-width="1.5"/><path d="M1454.74,1266.68L2104.32,348.26L2114.34,355.43Z" fill="url(#g614)" stroke="url(#g614)" stroke-width="1.5"/><path d="M1454.74,1266.68L2114.34,355.43L2124.27,362.7Z" fill="url(#g615)" stroke="url(#g615)" stroke-width="1.5"/><path d="M1454.74,1266.68L2124.27,362.7L2134.13,370.09Z" fill="url(#g616)" stroke="url(#g616)" stroke-width="1.5"/><path d="M1454.74,1266.68L2134.13,370.09L2143.9,377.58Z" fill="url(#g617)" stroke="url(#g617)" stroke-width="1.5"/><path d="M1454.74,1266.68L2143.9,377.58L2153.59,385.17Z" fill="url(#g618)" stroke="url(#g618)" stroke-width="1.5"/><path d="M1454.74,1266.68L2153.59,385.17L2163.2,392.88Z" fill="url(#g619)" stroke="url(#g619)" stroke-width="1.5"/><path d="M1454.74,1266.68L2163.2,392.88L2172.72,400.68Z" fill="url(#g620)" stroke="url(#g620)" stroke-width="1.5"/><path d="M1454.74,1266.68L2172.72,400.68L2182.16,408.59Z" fill="url(#g621)" stroke="url(#g621)" stroke-width="1.5"/><path d="M1454.74,1266.68L2182.16,408.59L2191.51,416.61Z" fill="url(#g622)" stroke="url(#g622)" stroke-width="1.5"/><path d="M1454.74,1266.68L2191.51,416.61L2200.77,424.72Z" fill="url(#g623)" stroke="url(#g623)" stroke-width="1.5"/><path d="M1454.74,1266.68L2200.77,424.72L2209.94,432.94Z" fill="url(#g624)" stroke="url(#g624)" stroke-width="1.5"/><path d="M1454.74,1266.68L2209.94,432.94L2219.02,441.26Z" fill="url(#g625)" stroke="url(#g625)" stroke-width="1.5"/><path d="M1454.74,1266.68L2219.02,441.26L2228.01,449.67Z" fill="url(#g626)" stroke="url(#g626)" stroke-width="1.5"/><path d="M1454.74,1266.68L2228.01,449.67L2236.91,458.19Z" fill="url(#g627)" stroke="url(#g627)" stroke-width="1.5"/><path d="M1454.74,1266.68L2236.91,458.19L2245.71,466.8Z" fill="url(#g628)" stroke="url(#g628)" stroke-width="1.5"/><path d="M1454.74,1266.68L2245.71,466.8L2254.42,475.5Z" fill="url(#g629)" stroke="url(#g629)" stroke-width="1.5"/><path d="M1454.74,1266.68L2254.42,475.5L2263.03,484.3Z" fill="url(#g630)" stroke="url(#g630)" stroke-width="1.5"/><path d="M1454.74,1266.68L2263.03,484.3L2271.55,493.2Z" fill="url(#g631)" stroke="url(#g631)" stroke-width="1.5"/><path d="M1454.74,1266.68L2271.55,493.2L2279.96,502.18Z" fill="url(#g632)" stroke="url(#g632)" stroke-width="1.5"/><path d="M1454.74,1266.68L2279.96,502.18L2288.28,511.26Z" fill="url(#g633)" stroke="url(#g633)" stroke-width="1.5"/><path d="M1454.74,1266.68L2288.28,511.26L2296.5,520.43Z" fill="url(#g634)" stroke="url(#g634)" stroke-width="1.5"/><path d="M1454.74,1266.68L2296.5,520.43L2304.62,529.69Z" fill="url(#g635)" stroke="url(#g635)" stroke-width="1.5"/><path d="M1454.74,1266.68L2304.62,529.69L2312.64,539.04Z" fill="url(#g636)" stroke="url(#g636)" stroke-width="1.5"/><path d="M1454.74,1266.68L2312.64,539.04L2320.55,548.47Z" fill="url(#g637)" stroke="url(#g637)" stroke-width="1.5"/><path d="M1454.74,1266.68L2320.55,548.47L2328.36,557.99Z" fill="url(#g638)" stroke="url(#g638)" stroke-width="1.5"/><path d="M1454.74,1266.68L2328.36,557.99L2336.06,567.6Z" fill="url(#g639)" stroke="url(#g639)" stroke-width="1.5"/><path d="M1454.74,1266.68L2336.06,567.6L2343.66,577.29Z" fill="url(#g640)" stroke="url(#g640)" stroke-width="1.5"/></g></g><circle cx="2075.5" cy="515.2" r="5.6" fill="#c8c000" stroke="#000" stroke-width="1.5"/><circle cx="1974.4" cy="621.4" r="5.6" fill="#c4c45a" stroke="#000" stroke-width="1.5"/><rect x="2039.9" y="575.7" width="18" height="18" fill="none" stroke="#fff" stroke-width="2"/><text x="66.7" y="781.4" font-size="39.24" fill="#efefef" textLength="307.5" lengthAdjust="spacingAndGlyphs">Avg dE2000: 3.12</text><text x="59.5" y="835.7" font-size="39.24" fill="#efefef" textLength="320" lengthAdjust="spacingAndGlyphs">Max dE2000: 6.53</text><text x="16.8" y="898.7" font-size="39.24" fill="#efefef" textLength="292" lengthAdjust="spacingAndGlyphs">Current Reading</text><text x="18.7" y="945.6" font-size="31.1" fill="#efefef" textLength="135" lengthAdjust="spacingAndGlyphs">x: 0.4241</text><text x="226.1" y="945.6" font-size="31.1" fill="#efefef" textLength="135.7" lengthAdjust="spacingAndGlyphs">y: 0.5237</text><text x="18.7" y="1000" font-size="31.1" fill="#efefef" textLength="145.5" lengthAdjust="spacingAndGlyphs">fL: 175.03</text><text x="18.7" y="1045" font-size="31.1" fill="#efefef" textLength="192" lengthAdjust="spacingAndGlyphs">cd/m²: 599.7</text><text x="618.7" y="784.4" font-size="20.35" fill="#dcdcdc" text-anchor="middle">RGB Balance</text><rect x="474" y="791.5" width="330" height="239" fill="#232323"/><line x1="474" y1="851.25" x2="804" y2="851.25" stroke="#8e8e8e" stroke-width="2"/><line x1="474" y1="911" x2="804" y2="911" stroke="#8e8e8e" stroke-width="2"/><line x1="474" y1="970.75" x2="804" y2="970.75" stroke="#8e8e8e" stroke-width="2"/><rect x="504" y="916" width="89" height="114.5" fill="#000"/><rect x="506" y="918" width="85" height="112.5" fill="url(#g641)"/><rect x="593" y="905.3" width="88" height="125.2" fill="#000"/><rect x="595.3" y="907.2" width="84" height="123.3" fill="url(#g642)"/><rect x="681" y="1021" width="88.6" height="9.5" fill="#000"/><rect x="683" y="1023" width="84.8" height="7.5" fill="#5a5aff"/><rect x="474" y="791.5" width="330" height="239" fill="none" stroke="#9c9c9c" stroke-width="2"/><line x1="466" y1="791.5" x2="474" y2="791.5" stroke="#e8e8e8" stroke-width="2"/><text x="465" y="798.3" font-size="20.35" fill="#dcdcdc" text-anchor="end">120</text><line x1="466" y1="851.25" x2="474" y2="851.25" stroke="#e8e8e8" stroke-width="2"/><text x="465" y="858.05" font-size="20.35" fill="#dcdcdc" text-anchor="end">110</text><line x1="466" y1="911" x2="474" y2="911" stroke="#e8e8e8" stroke-width="2"/><text x="465" y="917.8" font-size="20.35" fill="#dcdcdc" text-anchor="end">100</text><line x1="466" y1="970.75" x2="474" y2="970.75" stroke="#e8e8e8" stroke-width="2"/><text x="465" y="977.55" font-size="20.35" fill="#dcdcdc" text-anchor="end">90</text><line x1="466" y1="1030.5" x2="474" y2="1030.5" stroke="#e8e8e8" stroke-width="2"/><text x="465" y="1037.3" font-size="20.35" fill="#dcdcdc" text-anchor="end">80</text><line x1="474" y1="1030.5" x2="474" y2="1037.5" stroke="#e8e8e8" stroke-width="2"/><line x1="804" y1="1030.5" x2="804" y2="1037.5" stroke="#e8e8e8" stroke-width="2"/><text x="639.3" y="1051.7" font-size="20.35" fill="#dcdcdc" text-anchor="middle">100%</text><rect x="831.2" y="749" width="968.2" height="313" fill="#000"/><rect x="833.2" y="751" width="964.2" height="18" fill="#303030"/><rect x="833.2" y="769.1" width="964.2" height="19" fill="#161616"/><rect x="833.2" y="788.1" width="964.2" height="34.29" fill="#404040"/><text x="856.9" y="812.8" font-size="22.38" fill="#f2f2f2" font-weight="bold" textLength="112.7" lengthAdjust="spacingAndGlyphs">x: CIE31</text><text x="1099.5" y="812.8" font-size="22.09" fill="#f2f2f2" textLength="92.7" lengthAdjust="spacingAndGlyphs">0.3278</text><text x="1240.3" y="812.8" font-size="22.09" fill="#f2f2f2" textLength="92.7" lengthAdjust="spacingAndGlyphs">0.3545</text><text x="1381.5" y="812.8" font-size="22.09" fill="#f2f2f2" textLength="92.7" lengthAdjust="spacingAndGlyphs">0.3827</text><text x="1522.3" y="812.8" font-size="22.09" fill="#f2f2f2" textLength="92.7" lengthAdjust="spacingAndGlyphs">0.4062</text><text x="1663.7" y="812.8" font-size="22.09" fill="#f2f2f2" textLength="92.7" lengthAdjust="spacingAndGlyphs">0.4241</text><rect x="833.2" y="822.09" width="964.2" height="34.29" fill="#7f7f7f"/><text x="856.9" y="846.79" font-size="22.38" fill="#f2f2f2" font-weight="bold" textLength="112" lengthAdjust="spacingAndGlyphs">y: CIE31</text><text x="1099.5" y="846.79" font-size="22.09" fill="#f2f2f2" textLength="92.7" lengthAdjust="spacingAndGlyphs">0.3655</text><text x="1240.3" y="846.79" font-size="22.09" fill="#f2f2f2" textLength="92.7" lengthAdjust="spacingAndGlyphs">0.4097</text><text x="1381.5" y="846.79" font-size="22.09" fill="#f2f2f2" textLength="92.7" lengthAdjust="spacingAndGlyphs">0.4563</text><text x="1522.3" y="846.79" font-size="22.09" fill="#f2f2f2" textLength="92.7" lengthAdjust="spacingAndGlyphs">0.4959</text><text x="1663.7" y="846.79" font-size="22.09" fill="#f2f2f2" textLength="92.7" lengthAdjust="spacingAndGlyphs">0.5237</text><rect x="833.2" y="856.08" width="964.2" height="34.29" fill="#404040"/><text x="856.9" y="880.78" font-size="22.38" fill="#f2f2f2" font-weight="bold" textLength="17.5" lengthAdjust="spacingAndGlyphs">Y</text><text x="1099.5" y="880.78" font-size="22.09" fill="#f2f2f2" textLength="123.6" lengthAdjust="spacingAndGlyphs">634.6065</text><text x="1240.3" y="880.78" font-size="22.09" fill="#f2f2f2" textLength="123.6" lengthAdjust="spacingAndGlyphs">633.9728</text><text x="1381.5" y="880.78" font-size="22.09" fill="#f2f2f2" textLength="123.6" lengthAdjust="spacingAndGlyphs">634.5927</text><text x="1522.3" y="880.78" font-size="22.09" fill="#f2f2f2" textLength="123.6" lengthAdjust="spacingAndGlyphs">630.0496</text><text x="1663.7" y="880.78" font-size="22.09" fill="#f2f2f2" textLength="123.6" lengthAdjust="spacingAndGlyphs">599.7043</text><rect x="833.2" y="890.06" width="964.2" height="34.29" fill="#7f7f7f"/><text x="856.9" y="914.76" font-size="22.38" fill="#f2f2f2" font-weight="bold" textLength="208" lengthAdjust="spacingAndGlyphs">Target x:CIE31</text><text x="1099.5" y="914.76" font-size="22.09" fill="#f2f2f2" textLength="92.7" lengthAdjust="spacingAndGlyphs">0.3344</text><text x="1240.3" y="914.76" font-size="22.09" fill="#f2f2f2" textLength="92.7" lengthAdjust="spacingAndGlyphs">0.3564</text><text x="1381.5" y="914.76" font-size="22.09" fill="#f2f2f2" textLength="92.7" lengthAdjust="spacingAndGlyphs">0.3773</text><text x="1522.3" y="914.76" font-size="22.09" fill="#f2f2f2" textLength="92.7" lengthAdjust="spacingAndGlyphs">0.3969</text><text x="1663.7" y="914.76" font-size="22.09" fill="#f2f2f2" textLength="92.7" lengthAdjust="spacingAndGlyphs">0.4193</text><rect x="833.2" y="924.05" width="964.2" height="34.29" fill="#404040"/><text x="856.9" y="948.75" font-size="22.38" fill="#f2f2f2" font-weight="bold" textLength="208" lengthAdjust="spacingAndGlyphs">Target y:CIE31</text><text x="1099.5" y="948.75" font-size="22.09" fill="#f2f2f2" textLength="92.7" lengthAdjust="spacingAndGlyphs">0.3648</text><text x="1240.3" y="948.75" font-size="22.09" fill="#f2f2f2" textLength="92.7" lengthAdjust="spacingAndGlyphs">0.4013</text><text x="1381.5" y="948.75" font-size="22.09" fill="#f2f2f2" textLength="92.7" lengthAdjust="spacingAndGlyphs">0.4358</text><text x="1522.3" y="948.75" font-size="22.09" fill="#f2f2f2" textLength="92.7" lengthAdjust="spacingAndGlyphs">0.4682</text><text x="1663.7" y="948.75" font-size="22.09" fill="#f2f2f2" textLength="92.7" lengthAdjust="spacingAndGlyphs">0.5053</text><rect x="833.2" y="958.04" width="964.2" height="34.29" fill="#7f7f7f"/><text x="856.9" y="982.74" font-size="22.38" fill="#f2f2f2" font-weight="bold" textLength="120.5" lengthAdjust="spacingAndGlyphs">Target Y</text><text x="1099.5" y="982.74" font-size="22.09" fill="#f2f2f2" textLength="123.6" lengthAdjust="spacingAndGlyphs">627.2060</text><text x="1240.3" y="982.74" font-size="22.09" fill="#f2f2f2" textLength="123.6" lengthAdjust="spacingAndGlyphs">616.1967</text><text x="1381.5" y="982.74" font-size="22.09" fill="#f2f2f2" textLength="123.6" lengthAdjust="spacingAndGlyphs">607.7376</text><text x="1522.3" y="982.74" font-size="22.09" fill="#f2f2f2" textLength="123.6" lengthAdjust="spacingAndGlyphs">601.0990</text><text x="1663.7" y="982.74" font-size="22.09" fill="#f2f2f2" textLength="123.6" lengthAdjust="spacingAndGlyphs">594.6808</text><rect x="833.2" y="992.02" width="964.2" height="34.29" fill="#404040"/><text x="856.9" y="1016.73" font-size="22.38" fill="#f2f2f2" font-weight="bold" textLength="118.7" lengthAdjust="spacingAndGlyphs">ΔE 2000</text><text x="1099.5" y="1016.73" font-size="22.09" fill="#f2f2f2" textLength="92.7" lengthAdjust="spacingAndGlyphs">3.1380</text><text x="1240.3" y="1016.73" font-size="22.09" fill="#f2f2f2" textLength="92.7" lengthAdjust="spacingAndGlyphs">2.4141</text><text x="1381.5" y="1016.73" font-size="22.09" fill="#f2f2f2" textLength="92.7" lengthAdjust="spacingAndGlyphs">3.1608</text><text x="1522.3" y="1016.73" font-size="22.09" fill="#f2f2f2" textLength="92.7" lengthAdjust="spacingAndGlyphs">3.7123</text><text x="1663.7" y="1016.73" font-size="22.09" fill="#f2f2f2" textLength="92.7" lengthAdjust="spacingAndGlyphs">2.3194</text><rect x="833.2" y="1026.01" width="964.2" height="34.29" fill="#7f7f7f"/><text x="856.9" y="1050.71" font-size="22.38" fill="#f2f2f2" font-weight="bold" textLength="95" lengthAdjust="spacingAndGlyphs">ΔE ITP</text><text x="1099.5" y="1050.71" font-size="22.09" fill="#f2f2f2" textLength="92.7" lengthAdjust="spacingAndGlyphs">4.4691</text><text x="1240.3" y="1050.71" font-size="22.09" fill="#f2f2f2" textLength="92.7" lengthAdjust="spacingAndGlyphs">4.9690</text><text x="1381.5" y="1050.71" font-size="22.09" fill="#f2f2f2" textLength="108.15" lengthAdjust="spacingAndGlyphs">11.1115</text><text x="1522.3" y="1050.71" font-size="22.09" fill="#f2f2f2" textLength="108.15" lengthAdjust="spacingAndGlyphs">18.0130</text><text x="1663.7" y="1050.71" font-size="22.09" fill="#f2f2f2" textLength="108.15" lengthAdjust="spacingAndGlyphs">14.5215</text><text x="1135.25" y="776.7" font-size="19.91" fill="#f2f2f2" font-weight="bold" textLength="52.5" lengthAdjust="spacingAndGlyphs">20%</text><text x="1276.05" y="776.7" font-size="19.91" fill="#f2f2f2" font-weight="bold" textLength="52.5" lengthAdjust="spacingAndGlyphs">40%</text><text x="1417.25" y="776.7" font-size="19.91" fill="#f2f2f2" font-weight="bold" textLength="52.5" lengthAdjust="spacingAndGlyphs">60%</text><text x="1558.05" y="776.7" font-size="19.91" fill="#f2f2f2" font-weight="bold" textLength="52.5" lengthAdjust="spacingAndGlyphs">80%</text><text x="1691.45" y="776.7" font-size="19.91" fill="#f2f2f2" font-weight="bold" textLength="68.5" lengthAdjust="spacingAndGlyphs">100%</text><rect x="0" y="1224.7" width="2214" height="63.3" fill="url(#g643)"/><rect x="0" y="1225" width="45" height="61" fill="url(#g644)" rx="4"/><circle cx="22.4" cy="1234" r="7" fill="#6a6a6a"/><path d="M17,1237 L27.8,1237 L22.4,1231 Z" fill="#222"/><rect x="5.2" y="1251" width="35" height="30" fill="#ffff00" rx="3"/><rect x="50.9" y="1225" width="150.2" height="61" fill="url(#g644)" rx="4"/><rect x="56.1" y="1230.3" width="140.3" height="35.7" fill="#8c8c7a" rx="3"/><rect x="56.5" y="1230.9" width="139.6" height="35" fill="#c1c1a2" rx="3"/><text x="125.9" y="1280" font-size="10.9" fill="#2d2d2d" text-anchor="middle" font-weight="bold">20%</text><rect x="203.3" y="1225" width="150.2" height="61" fill="url(#g644)" rx="4"/><rect x="208.5" y="1230.3" width="140.3" height="35.7" fill="#8c8c7a" rx="3"/><rect x="208.9" y="1230.9" width="139.6" height="35" fill="#c1c183" rx="3"/><text x="278.3" y="1280" font-size="10.9" fill="#2d2d2d" text-anchor="middle" font-weight="bold">40%</text><rect x="355.7" y="1225" width="150.2" height="61" fill="url(#g644)" rx="4"/><rect x="360.9" y="1230.3" width="140.3" height="35.7" fill="#8c8c7a" rx="3"/><rect x="361.3" y="1230.9" width="139.6" height="35" fill="#c1c164" rx="3"/><text x="430.7" y="1280" font-size="10.9" fill="#2d2d2d" text-anchor="middle" font-weight="bold">60%</text><rect x="506.8" y="1225" width="150.2" height="61" fill="url(#g644)" rx="4"/><rect x="512" y="1230.3" width="140.3" height="35.7" fill="#8c8c7a" rx="3"/><rect x="512.4" y="1230.9" width="139.6" height="35" fill="#c0c048" rx="3"/><text x="581.8" y="1280" font-size="10.9" fill="#2d2d2d" text-anchor="middle" font-weight="bold">80%</text><rect x="659.2" y="1225" width="149.8" height="61" fill="url(#g645)" rx="4"/><rect x="664" y="1230" width="140" height="35.8" fill="#c3c300" rx="3"/><text x="734" y="1280" font-size="10.9" fill="#ffffff" text-anchor="middle" font-weight="bold">100%</text><rect x="1889.8" y="1243.7" width="47.5" height="42" fill="url(#g646)" rx="4"/><rect x="1899.5" y="1251.2" width="28" height="27.2" rx="4" fill="#9a9a9a" stroke="#2e2e2e" stroke-width="3"/><rect x="1907" y="1258.7" width="13.7" height="12.1" fill="#000"/><rect x="1938.8" y="1225.6" width="273.1" height="29.4" fill="url(#g647)" rx="4"/><line x1="1985.6" y1="1226" x2="1985.6" y2="1255" stroke="#3c3c3c" stroke-width="1.2"/><line x1="2030" y1="1226" x2="2030" y2="1255" stroke="#3c3c3c" stroke-width="1.2"/><line x1="2075.3" y1="1226" x2="2075.3" y2="1255" stroke="#3c3c3c" stroke-width="1.2"/><line x1="2120.6" y1="1226" x2="2120.6" y2="1255" stroke="#3c3c3c" stroke-width="1.2"/><line x1="2165.1" y1="1226" x2="2165.1" y2="1255" stroke="#3c3c3c" stroke-width="1.2"/><circle cx="1963" cy="1246" r="9" fill="#7a7a7a" opacity="0.6"/><circle cx="2008" cy="1246" r="9" fill="#7a7a7a" opacity="0.6"/><circle cx="2053" cy="1246" r="9" fill="#7a7a7a" opacity="0.6"/><circle cx="2098" cy="1246" r="9" fill="#7a7a7a" opacity="0.6"/><circle cx="2143" cy="1246" r="9" fill="#7a7a7a" opacity="0.6"/><circle cx="2188" cy="1246" r="9" fill="#7a7a7a" opacity="0.6"/><rect x="1938.8" y="1255.7" width="273.2" height="30.2" fill="url(#g648)" rx="4"/><line x1="2075.3" y1="1256" x2="2075.3" y2="1286" stroke="#3a3a3a" stroke-width="1.2"/><circle cx="1969.8" cy="1270.8" r="10" fill="url(#g649)"/><circle cx="2182.5" cy="1270.8" r="10" fill="url(#g649)"/><text x="1969.8" y="1278.5" font-size="24.71" fill="#2a2a2a" text-anchor="middle">«</text><text x="2182.5" y="1278.5" font-size="24.71" fill="#2a2a2a" text-anchor="middle">»</text><text x="1996.9" y="1278.4" font-size="21.95" fill="#262626" textLength="49.8" lengthAdjust="spacingAndGlyphs" stroke="#262626" stroke-width="0.5">Back</text><text x="2103.3" y="1278.4" font-size="21.95" fill="#262626" textLength="51.2" lengthAdjust="spacingAndGlyphs" stroke="#262626" stroke-width="0.5">Next</text><g opacity="0.6"><path d="M1882.5,1247.5 L1880,1216.5 L1829,1206 L1830,1253.7 L1862.5,1269 L1917.6,1253.7 L1886,1247.5 M1840.8,1250.1 L1886,1247.5" fill="none" stroke="#e8e8e8" stroke-width="7.5" stroke-linejoin="miter" stroke-linecap="round"/><path d="M1882.5,1247.5 L1880,1216.5 L1829,1206 L1830,1253.7 L1862.5,1269 L1917.6,1253.7 L1886,1247.5 M1840.8,1250.1 L1886,1247.5" fill="none" stroke="#b01e2c" stroke-width="4.5" stroke-linejoin="miter" stroke-linecap="round"/><path d="M1841,1223.5 L1847.5,1220.5 L1858.3,1235.5 L1885.5,1203.5 L1889,1206.5 L1859,1244.5 Z" fill="#2a2424" stroke="#e8e8e8" stroke-width="1.6" stroke-linejoin="round"/><text x="1888" y="1244.2" font-size="38.7" font-weight="bold" fill="#b01e2c" stroke="#ececec" stroke-width="3.2" paint-order="stroke" textLength="197" lengthAdjust="spacingAndGlyphs">NOTEBOOK</text><text x="2086" y="1244.2" font-size="38.7" font-weight="bold" fill="#262626" stroke="#ececec" stroke-width="3.2" paint-order="stroke" textLength="117.5" lengthAdjust="spacingAndGlyphs">CHECK</text></g><rect x="2210" y="0" width="2.5" height="1288" fill="#0e0e0e"/><rect x="2212.5" y="0" width="1.5" height="1288" fill="#744436"/><rect x="0" y="1286.5" width="2214" height="1.5" fill="#6a3a30"/></svg></body></html>
